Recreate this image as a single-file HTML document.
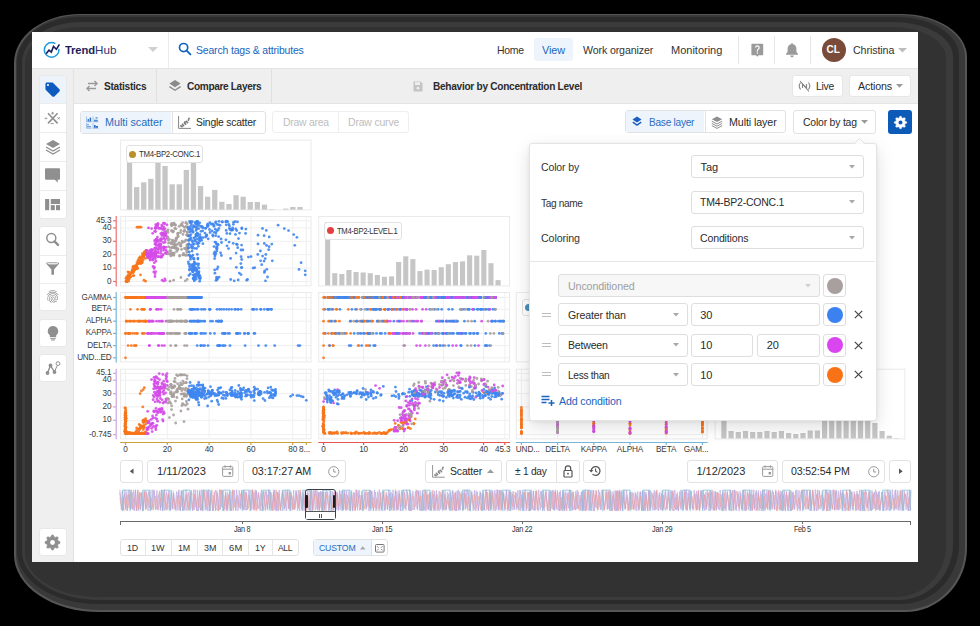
<!DOCTYPE html>
<html><head><meta charset="utf-8"><style>
html,body{margin:0;padding:0;}
body{width:980px;height:626px;position:relative;overflow:hidden;background:#000;font-family:"Liberation Sans",sans-serif;}
svg{display:block;overflow:visible}
</style></head><body>
<div style="position:absolute;left:14px;top:14px;width:953px;height:598px;border-radius:66.0px 66.0px 62.0px 85.0px / 49.0px 43.0px 64.0px 57.0px;background:#555"></div><div style="position:absolute;left:15.5px;top:15px;width:949.5px;height:594.5px;border-radius:64.5px 64.5px 60.5px 83.5px / 47.5px 41.5px 62.5px 55.5px;background:#393939"></div><div style="position:absolute;left:17px;top:17px;width:942px;height:587px;border-radius:62.0px 62.0px 58.0px 81.0px / 45.0px 39.0px 60.0px 53.0px;background:#2b2b2b"></div><div style="position:absolute;left:21.5px;top:21.5px;width:931.5px;height:578.5px;border-radius:58.0px 58.0px 54.0px 77.0px / 41.0px 35.0px 56.0px 49.0px;background:#3b3b3b"></div><div style="position:absolute;left:25px;top:27px;width:921px;height:570px;border-radius:54.0px 54.0px 50.0px 73.0px / 37.0px 31.0px 52.0px 45.0px;background:#323232"></div><div style="position:absolute;left:32px;top:32px;width:886px;height:530px;background:#fff"></div><div style="position:absolute;left:32px;top:68px;width:886px;height:1px;background:#e4e4e4"></div><div style="position:absolute;left:32px;top:69px;width:41px;height:493px;background:#efefef"></div><div style="position:absolute;left:73px;top:69px;width:1px;height:493px;background:#e2e2e2"></div><div style="position:absolute;left:74px;top:69px;width:844px;height:34px;background:#efefef"></div><div style="position:absolute;left:74px;top:103px;width:844px;height:1px;background:#e4e4e4"></div><svg style="position:absolute;left:42px;top:40px;" width="20" height="20" viewBox="0 0 20 20"><circle cx="9.6" cy="9.9" r="7.3" fill="none" stroke="#1f9ce0" stroke-width="1.5" stroke-dasharray="38.2 6.4 100"/><polyline points="4.1,13.8 7,10.2 9.3,12.1 11.5,6.4 14.4,9.3 17.4,4.3" fill="none" stroke="#1b1f5e" stroke-width="1.6" stroke-linejoin="miter"/></svg><div style="position:absolute;left:64.6px;top:43.0px;line-height:14px;font-size:11.5px;font-weight:700;color:#1b1f5e;letter-spacing:-0.13px;white-space:pre;transform:scaleX(0.9746);transform-origin:0 50%;">Trend</div><div style="position:absolute;left:95.3px;top:43.0px;line-height:14px;font-size:11.5px;font-weight:400;color:#2d3270;letter-spacing:0.08px;white-space:pre;transform:scaleX(1.0111);transform-origin:0 50%;">Hub</div><svg style="position:absolute;left:148px;top:47px;" width="10" height="6" viewBox="0 0 10 6"><polygon points="0,0 10,0 5,5" fill="#d0d0d0"/></svg><div style="position:absolute;left:168px;top:32px;width:1px;height:36px;background:#ececec"></div><svg style="position:absolute;left:178px;top:42px;" width="14" height="14" viewBox="0 0 14 14"><circle cx="5.6" cy="5.6" r="4.1" fill="none" stroke="#1565c0" stroke-width="1.7"/><line x1="8.6" y1="8.6" x2="12.4" y2="12.4" stroke="#1565c0" stroke-width="1.9" stroke-linecap="round"/></svg><div style="position:absolute;left:195.7px;top:43.0px;line-height:14px;font-size:11px;font-weight:400;color:#1a64c0;letter-spacing:-0.17px;white-space:pre;transform:scaleX(0.9501);transform-origin:0 50%;">Search tags &amp; attributes</div><div style="position:absolute;left:496.8px;top:43.0px;line-height:14px;font-size:11px;font-weight:400;color:#333;letter-spacing:-0.32px;white-space:pre;transform:scaleX(0.9513);transform-origin:0 50%;">Home</div><div style="position:absolute;left:534px;top:38px;width:39px;height:23px;background:#eef4fb;border-radius:3px"></div><div style="position:absolute;left:541.8px;top:43.0px;line-height:14px;font-size:11px;font-weight:400;color:#1a64c0;letter-spacing:-0.07px;white-space:pre;transform:scaleX(0.9858);transform-origin:0 50%;">View</div><div style="position:absolute;left:582.8px;top:43.0px;line-height:14px;font-size:11px;font-weight:400;color:#333;letter-spacing:-0.13px;white-space:pre;transform:scaleX(0.9658);transform-origin:0 50%;">Work organizer</div><div style="position:absolute;left:671.0px;top:43.0px;line-height:14px;font-size:11px;font-weight:400;color:#333;letter-spacing:-0.00px;white-space:pre;">Monitoring</div><div style="position:absolute;left:738px;top:36px;width:1px;height:28px;background:#e6e6e6"></div><svg style="position:absolute;left:750.5px;top:43px;" width="13" height="15" viewBox="0 0 13 15"><path d="M1,0.8 h10.6 a0.6,0.6 0 0 1 0.6,0.6 v10.2 a0.6,0.6 0 0 1 -0.6,0.6 h-3.9 l-1.4,1.6 l-1.4,-1.6 h-3.9 a0.6,0.6 0 0 1 -0.6,-0.6 v-10.2 a0.6,0.6 0 0 1 0.6,-0.6z" fill="#9a9a9a"/><path d="M4.6,4.6 a1.8,1.8 0 1 1 2.6,1.6 c-0.6,0.4 -0.8,0.8 -0.8,1.6 v0.6" fill="none" stroke="#fff" stroke-width="1.2"/><circle cx="6.4" cy="10" r="0.7" fill="#fff"/></svg><div style="position:absolute;left:774px;top:36px;width:1px;height:28px;background:#e6e6e6"></div><svg style="position:absolute;left:785px;top:42px;" width="14" height="16" viewBox="0 0 14 16"><path d="M7,1.2 c0.7,0 1,0.5 1,1 c2.4,0.5 3.4,2.4 3.4,4.6 v3 l1.6,2.2 v0.8 h-12 v-0.8 l1.6,-2.2 v-3 c0,-2.2 1,-4.1 3.4,-4.6 c0,-0.5 0.3,-1 1,-1z" fill="#9a9a9a"/><path d="M5.2,13.6 h3.6 a1.8,1.8 0 0 1 -3.6,0z" fill="#9a9a9a"/></svg><div style="position:absolute;left:810px;top:36px;width:1px;height:28px;background:#e6e6e6"></div><div style="position:absolute;left:821.8px;top:38px;width:24px;height:24px;border-radius:50%;background:#7b4b3a"></div><div style="position:absolute;left:826.5px;top:43.0px;line-height:14px;font-size:10px;font-weight:700;color:#fff;letter-spacing:0.00px;white-space:pre;">CL</div><div style="position:absolute;left:852.8px;top:43.0px;line-height:14px;font-size:11px;font-weight:400;color:#333;letter-spacing:-0.10px;white-space:pre;transform:scaleX(0.9720);transform-origin:0 50%;">Christina</div><svg style="position:absolute;left:898px;top:47.5px;" width="10" height="6" viewBox="0 0 10 6"><polygon points="0,0 9,0 4.5,4.5" fill="#bdbdbd"/></svg><svg style="position:absolute;left:84px;top:80px;" width="16" height="12" viewBox="0 0 16 12"><path d="M4,3.5 h9 M10.5,1 l2.5,2.5 l-2.5,2.5" fill="none" stroke="#9a9a9a" stroke-width="1.4"/><path d="M12,8.5 h-9 M5.5,6 l-2.5,2.5 l2.5,2.5" fill="none" stroke="#9a9a9a" stroke-width="1.4"/></svg><div style="position:absolute;left:103.7px;top:79.3px;line-height:14px;font-size:11px;font-weight:700;color:#2b2b2b;letter-spacing:-0.29px;white-space:pre;transform:scaleX(0.9203);transform-origin:0 50%;">Statistics</div><div style="position:absolute;left:156px;top:69px;width:1px;height:34px;background:#e0e0e0"></div><svg style="position:absolute;left:168px;top:79px;" width="14" height="14" viewBox="0 0 14 14"><path d="M7,1 L12.6,4.6 L7,8.2 L1.4,4.6z" fill="#8a8a8a"/><path d="M1.4,7.6 L7,11.2 L12.6,7.6" fill="none" stroke="#8a8a8a" stroke-width="1.3"/></svg><div style="position:absolute;left:186.7px;top:79.3px;line-height:14px;font-size:11px;font-weight:700;color:#2b2b2b;letter-spacing:-0.37px;white-space:pre;transform:scaleX(0.9168);transform-origin:0 50%;">Compare Layers</div><div style="position:absolute;left:271px;top:69px;width:1px;height:34px;background:#e0e0e0"></div><svg style="position:absolute;left:413px;top:81px;" width="10" height="11" viewBox="0 0 10 11"><path d="M0.5,0.5 h7 l2,2 v8 h-9z" fill="#c4c4c4"/><rect x="2" y="1.2" width="5" height="2.8" fill="#efefef"/><circle cx="5" cy="7.2" r="1.4" fill="#efefef"/></svg><div style="position:absolute;left:433.2px;top:79.3px;line-height:14px;font-size:11px;font-weight:700;color:#2b2b2b;letter-spacing:-0.31px;white-space:pre;transform:scaleX(0.9190);transform-origin:0 50%;">Behavior by Concentration Level</div><div style="position:absolute;left:792px;top:75px;width:51px;height:22px;background:#fff;border:1px solid #e6e6e6;border-radius:3px;box-sizing:border-box"></div><svg style="position:absolute;left:798px;top:80px;" width="13" height="12" viewBox="0 0 13 12"><path d="M2.6,2.5 C1,4.5 1,7.5 2.6,9.5 M10.4,2.5 C12,4.5 12,7.5 10.4,9.5" fill="none" stroke="#888" stroke-width="1.1"/><path d="M4.5,8 V4 L8.5,8 V4" fill="none" stroke="#888" stroke-width="1.1"/><line x1="2" y1="1" x2="11" y2="11.5" stroke="#888" stroke-width="1.1"/></svg><div style="position:absolute;left:815.7px;top:79.3px;line-height:14px;font-size:11px;font-weight:400;color:#2b2b2b;letter-spacing:-0.26px;white-space:pre;transform:scaleX(0.9428);transform-origin:0 50%;">Live</div><div style="position:absolute;left:849px;top:75px;width:62px;height:22px;background:#fff;border:1px solid #e6e6e6;border-radius:3px;box-sizing:border-box"></div><div style="position:absolute;left:857.9px;top:79.3px;line-height:14px;font-size:11px;font-weight:400;color:#2b2b2b;letter-spacing:-0.13px;white-space:pre;transform:scaleX(0.9684);transform-origin:0 50%;">Actions</div><svg style="position:absolute;left:896px;top:84px;" width="8" height="5" viewBox="0 0 8 5"><polygon points="0,0 7,0 3.5,3.8" fill="#9a9a9a"/></svg><div style="position:absolute;left:38.7px;top:75.3px;width:28.599999999999994px;height:143.39999999999998px;background:#fff;border:1px solid #e8e8e8;border-radius:3px;box-sizing:border-box"></div><div style="position:absolute;left:39.7px;top:103.3px;width:26.599999999999994px;height:1.0px;background:#ececec"></div><div style="position:absolute;left:39.7px;top:132.2px;width:26.599999999999994px;height:1.0px;background:#ececec"></div><div style="position:absolute;left:39.7px;top:161px;width:26.599999999999994px;height:1px;background:#ececec"></div><div style="position:absolute;left:39.7px;top:190px;width:26.599999999999994px;height:1px;background:#ececec"></div><div style="position:absolute;left:39.7px;top:76.3px;width:26.599999999999994px;height:27.0px;background:#edf3fa"></div><div style="position:absolute;left:38.7px;top:225.9px;width:28.599999999999994px;height:85.4px;background:#fff;border:1px solid #e8e8e8;border-radius:3px;box-sizing:border-box"></div><div style="position:absolute;left:39.7px;top:254.5px;width:26.599999999999994px;height:1.0px;background:#ececec"></div><div style="position:absolute;left:39.7px;top:283.2px;width:26.599999999999994px;height:1.0px;background:#ececec"></div><div style="position:absolute;left:38.7px;top:318.5px;width:28.599999999999994px;height:28.80000000000001px;background:#fff;border:1px solid #e8e8e8;border-radius:3px;box-sizing:border-box"></div><div style="position:absolute;left:38.7px;top:353.6px;width:28.599999999999994px;height:28.69999999999999px;background:#fff;border:1px solid #e8e8e8;border-radius:3px;box-sizing:border-box"></div><div style="position:absolute;left:38.7px;top:527.7px;width:28.599999999999994px;height:28.5px;background:#fff;border:1px solid #e8e8e8;border-radius:3px;box-sizing:border-box"></div><svg style="position:absolute;left:44px;top:81px;" width="18" height="18" viewBox="0 0 18 18"><g transform="scale(0.72)"><path fill-rule="evenodd" d="M21.41 11.58l-9-9C12.05 2.22 11.55 2 11 2H4c-1.1 0-2 .9-2 2v7c0 .55.22 1.05.59 1.42l9 9c.36.36.86.58 1.41.58.55 0 1.05-.22 1.41-.59l7-7c.37-.36.59-.86.59-1.41 0-.55-.23-1.06-.59-1.42zM5.5 7C4.67 7 4 6.33 4 5.5S4.67 4 5.5 4 7 4.67 7 5.5 6.33 7 5.5 7z" fill="#0d5bbf"/></g></svg><svg style="position:absolute;left:45px;top:110px;" width="16" height="16" viewBox="0 0 16 16"><line x1="3" y1="3.2" x2="12.6" y2="13.4" stroke="#8f8f8f" stroke-width="1.6"/><line x1="12.6" y1="3.2" x2="3" y2="13.4" stroke="#8f8f8f" stroke-width="1.6"/><path d="M6.2,3.2 h2.8 M7.6,1.8 v2.8 M-0.4,8.4 h2.8 M5.6,13.6 h3.2 M12.6,7.2 l2.2,2.2 M14.8,7.2 l-2.2,2.2" stroke="#8f8f8f" stroke-width="0.9"/><circle cx="1" cy="7" r="0.4" fill="#8f8f8f"/><circle cx="1" cy="9.8" r="0.4" fill="#8f8f8f"/></svg><svg style="position:absolute;left:45px;top:139px;" width="16" height="16" viewBox="0 0 16 16"><path d="M8,1 L15,5 L8,9 L1,5z" fill="#8f8f8f"/><path d="M1,8 L8,12 L15,8" fill="none" stroke="#8f8f8f" stroke-width="1.3"/><path d="M1,11 L8,15 L15,11" fill="none" stroke="#8f8f8f" stroke-width="1.3"/></svg><svg style="position:absolute;left:45px;top:168px;" width="16" height="16" viewBox="0 0 16 16"><path d="M1,0.2 h13 a1,1 0 0 1 1,1 v9.6 a1,1 0 0 1 -1,1 h-1.4 l0.2,3 l-3,-3 h-8.8 a1,1 0 0 1 -1,-1 v-9.6 a1,1 0 0 1 1,-1z" fill="#8f8f8f"/></svg><svg style="position:absolute;left:45px;top:198.9px;" width="16" height="12" viewBox="0 0 16 12"><rect x="0.1" y="0" width="4.1" height="11.2" fill="#8f8f8f"/><rect x="5.8" y="0" width="9.2" height="5" fill="#8f8f8f"/><rect x="5.8" y="6.1" width="4" height="5.1" fill="#8f8f8f"/><rect x="11" y="6.1" width="4" height="5.1" fill="#8f8f8f"/></svg><svg style="position:absolute;left:45px;top:232px;" width="16" height="16" viewBox="0 0 16 16"><circle cx="6.3" cy="6.0" r="4.5" fill="none" stroke="#8f8f8f" stroke-width="1.5"/><line x1="9.6" y1="9.4" x2="13" y2="12.8" stroke="#8f8f8f" stroke-width="2.4" stroke-linecap="round"/></svg><svg style="position:absolute;left:45px;top:261px;" width="16" height="16" viewBox="0 0 16 16"><path d="M1.1,2.6 C1.1,0.6 14.2,0.6 14.2,2.6 L9,8.6 V13.7 H6.4 V8.6 Z" fill="#8f8f8f"/><ellipse cx="7.65" cy="2.5" rx="5.4" ry="1.1" fill="#e6e6e6"/></svg><svg style="position:absolute;left:45px;top:288.5px;" width="16" height="16" viewBox="0 0 16 16"><g transform="scale(0.64)"><path fill="#8f8f8f" d="M17.81 4.47c-.08 0-.16-.02-.23-.06C15.66 3.42 14 3 12.01 3c-1.98 0-3.86.47-5.57 1.41-.24.13-.54.04-.68-.2-.13-.24-.04-.55.2-.68C7.82 2.52 9.86 2 12.01 2c2.13 0 3.98.47 6.03 1.52.25.13.34.43.21.67-.09.18-.26.28-.44.28zM3.5 9.72c-.1 0-.2-.03-.29-.09-.23-.16-.28-.47-.12-.7.99-1.4 2.250-2.5 3.75-3.27C9.98 4.04 14 4.03 17.15 5.65c1.5.77 2.76 1.86 3.75 3.25.16.22.11.54-.12.7-.23.16-.54.11-.7-.12-.9-1.26-2.04-2.25-3.39-2.94-2.87-1.47-6.54-1.47-9.4.01-1.36.7-2.5 1.7-3.4 2.96-.08.14-.23.21-.39.21zm6.25 12.07c-.13 0-.26-.05-.35-.15-.87-.87-1.34-1.43-2.01-2.640-.69-1.230-1.05-2.730-1.05-4.340 0-2.97 2.54-5.39 5.66-5.39s5.66 2.42 5.66 5.39c0 .28-.22.5-.5.5s-.5-.22-.5-.5c0-2.42-2.09-4.39-4.66-4.39-2.57 0-4.66 1.97-4.66 4.39 0 1.44.32 2.77.93 3.85.64 1.15 1.08 1.64 1.85 2.42.19.2.19.51 0 .71-.11.1-.24.15-.37.15zm7.17-1.85c-1.19 0-2.24-.3-3.1-.89-1.49-1.01-2.38-2.65-2.38-4.39 0-.28.22-.5.5-.5s.5.22.5.5c0 1.41.72 2.74 1.94 3.56.71.48 1.54.71 2.54.71.24 0 .64-.03 1.04-.1.27-.05.53.13.58.41.05.27-.13.53-.41.58-.57.11-1.07.12-1.21.12zM14.91 22c-.04 0-.09-.01-.13-.02-1.59-.44-2.63-1.03-3.72-2.1-1.4-1.39-2.17-3.24-2.17-5.22 0-1.62 1.38-2.94 3.08-2.94 1.7 0 3.08 1.32 3.08 2.94 0 1.07.93 1.94 2.08 1.94s2.08-.87 2.08-1.94c0-3.77-3.25-6.83-7.25-6.83-2.84 0-5.44 1.58-6.61 4.03-.39.81-.59 1.76-.59 2.8 0 .78.07 2.010.67 3.61.1.26-.03.55-.29.64-.26.1-.55-.04-.64-.29-.49-1.31-.73-2.61-.73-3.96 0-1.2.23-2.29.68-3.24 1.33-2.79 4.28-4.6 7.51-4.6 4.55 0 8.25 3.51 8.25 7.83 0 1.62-1.38 2.94-3.08 2.94s-3.08-1.32-3.08-2.94c0-1.07-.93-1.94-2.08-1.94s-2.08.87-2.08 1.94c0 1.71.66 3.31 1.87 4.51.95.94 1.86 1.460 3.27 1.85.27.07.42.35.35.61-.05.23-.26.38-.47.38z"/></g></svg><svg style="position:absolute;left:45px;top:325px;" width="16" height="16" viewBox="0 0 16 16"><path d="M8,1 a5.2,5.2 0 0 1 3.2,9.3 v1.8 h-6.4 v-1.8 A5.2,5.2 0 0 1 8,1z" fill="#8f8f8f"/><rect x="5.2" y="12.8" width="5.6" height="1" fill="#8f8f8f"/><rect x="6" y="14.4" width="4" height="1" fill="#8f8f8f"/></svg><svg style="position:absolute;left:45px;top:360px;" width="16" height="16" viewBox="0 0 16 16"><polyline points="2.5,13 5.5,5.5 9.5,12 " fill="none" stroke="#8f8f8f" stroke-width="1.4"/><circle cx="2.5" cy="13" r="1.9" fill="#8f8f8f"/><circle cx="5.5" cy="5.5" r="1.9" fill="#8f8f8f"/><circle cx="9.5" cy="12" r="1.9" fill="#8f8f8f"/><line x1="9.8" y1="11" x2="12" y2="6" stroke="#8f8f8f" stroke-width="1"/><circle cx="13" cy="3.6" r="1.9" fill="none" stroke="#8f8f8f" stroke-width="1"/></svg><svg style="position:absolute;left:44px;top:534px;" width="17" height="17" viewBox="0 0 17 17"><polygon points="15.96,7.76 15.96,9.24 14.05,10.18 13.62,11.23 14.30,13.26 13.26,14.30 11.23,13.62 10.18,14.05 9.24,15.96 7.76,15.96 6.82,14.05 5.77,13.62 3.74,14.30 2.70,13.26 3.38,11.23 2.95,10.18 1.04,9.24 1.04,7.76 2.95,6.82 3.38,5.77 2.70,3.74 3.74,2.70 5.77,3.38 6.82,2.95 7.76,1.04 9.24,1.04 10.18,2.95 11.23,3.38 13.26,2.70 14.30,3.74 13.62,5.77 14.05,6.82" fill="#8f8f8f" stroke="#8f8f8f" stroke-width="0.6" stroke-linejoin="round"/><circle cx="8.5" cy="8.5" r="2.4" fill="#fff"/></svg><div style="position:absolute;left:80.1px;top:110.5px;width:186.1px;height:23.099999999999994px;background:#fff;border:1px solid #e2e2e2;border-radius:3px;box-sizing:border-box"></div><div style="position:absolute;left:81.1px;top:111.5px;width:90.4px;height:21.099999999999994px;background:#eef4fb"></div><div style="position:absolute;left:171.5px;top:111.5px;width:1.0px;height:21.099999999999994px;background:#e2e2e2"></div><svg style="position:absolute;left:86px;top:116px;" width="13" height="13" viewBox="0 0 13 13"><path d="M0.5,0.5 V5.8 H5.8 M7,0.5 V5.8 H12.4 M0.5,7 V12.3 H5.8 M7,7 V12.3 H12.4" fill="none" stroke="#9cbde6" stroke-width="0.9"/><rect x="1.6" y="3" width="1.3" height="2.6" fill="#2f72c4"/><rect x="3.6" y="1.6" width="1.5" height="4" fill="#2f72c4"/><rect x="8" y="4.2" width="3.8" height="1.2" fill="#2f72c4"/><rect x="9.6" y="1.4" width="2" height="1" fill="#2f72c4"/><rect x="8" y="2.8" width="3.8" height="0.7" fill="#9cbde6"/><circle cx="2" cy="8.8" r="0.7" fill="#2f72c4"/><circle cx="2" cy="10.8" r="0.8" fill="#2f72c4"/><circle cx="4" cy="10.8" r="0.8" fill="#2f72c4"/><rect x="8" y="9" width="1.6" height="2.8" fill="#2f72c4"/><rect x="9.6" y="10" width="2.4" height="1.8" fill="#2f72c4"/></svg><div style="position:absolute;left:104.6px;top:115.0px;line-height:14px;font-size:11px;font-weight:400;color:#2a6cc0;letter-spacing:-0.06px;white-space:pre;transform:scaleX(0.9827);transform-origin:0 50%;">Multi scatter</div><svg style="position:absolute;left:178px;top:116px;" width="13" height="13" viewBox="0 0 13 13"><path d="M0.6,0 v12.4 h12.4" fill="none" stroke="#777" stroke-width="0.9"/><circle cx="3" cy="10" r="0.9" fill="#777"/><circle cx="4.5" cy="8.5" r="0.9" fill="#777"/><circle cx="5.5" cy="9.5" r="0.9" fill="#777"/><circle cx="6.5" cy="7" r="0.9" fill="#777"/><circle cx="7.5" cy="8" r="0.9" fill="#777"/><circle cx="8.5" cy="5.5" r="0.9" fill="#777"/><circle cx="9.5" cy="6.5" r="0.9" fill="#777"/><circle cx="10.5" cy="4" r="0.9" fill="#777"/><circle cx="11" cy="2.5" r="0.9" fill="#777"/><circle cx="4" cy="10.5" r="0.9" fill="#777"/><circle cx="7" cy="6" r="0.9" fill="#777"/></svg><div style="position:absolute;left:196.0px;top:115.0px;line-height:14px;font-size:11px;font-weight:400;color:#2b2b2b;letter-spacing:-0.20px;white-space:pre;transform:scaleX(0.9407);transform-origin:0 50%;">Single scatter</div><div style="position:absolute;left:272.4px;top:110.9px;width:136.3px;height:22.19999999999999px;background:#fff;border:1px solid #eeeeee;border-radius:3px;box-sizing:border-box"></div><div style="position:absolute;left:338px;top:111.9px;width:1px;height:20.19999999999999px;background:#eeeeee"></div><div style="position:absolute;left:282.5px;top:115.0px;line-height:14px;font-size:11px;font-weight:400;color:#bdbdbd;letter-spacing:-0.24px;white-space:pre;transform:scaleX(0.9427);transform-origin:0 50%;">Draw area</div><div style="position:absolute;left:347.9px;top:115.0px;line-height:14px;font-size:11px;font-weight:400;color:#bdbdbd;letter-spacing:-0.20px;white-space:pre;transform:scaleX(0.9526);transform-origin:0 50%;">Draw curve</div><div style="position:absolute;left:624.6px;top:110.4px;width:161.60000000000002px;height:22.69999999999999px;background:#fff;border:1px solid #e2e2e2;border-radius:3px;box-sizing:border-box"></div><div style="position:absolute;left:625.6px;top:111.4px;width:78.89999999999998px;height:20.69999999999999px;background:#eef4fb"></div><div style="position:absolute;left:704.5px;top:111.4px;width:1.0px;height:20.69999999999999px;background:#e2e2e2"></div><svg style="position:absolute;left:632px;top:116px;" width="10" height="12" viewBox="0 0 10 12"><path d="M5,0.5 L9.5,3.5 L5,6.5 L0.5,3.5z" fill="#1a5fbf"/><path d="M0.8,6.2 L5,9 L9.2,6.2" fill="none" stroke="#1a5fbf" stroke-width="1.5"/></svg><div style="position:absolute;left:648.8px;top:115.0px;line-height:14px;font-size:11px;font-weight:400;color:#2a6cc0;letter-spacing:-0.30px;white-space:pre;transform:scaleX(0.9232);transform-origin:0 50%;">Base layer</div><svg style="position:absolute;left:710.5px;top:116px;" width="12" height="12" viewBox="0 0 12 12"><path d="M0.8,5.2 L6,8.0 L11.2,5.2" fill="none" stroke="#8f8f8f" stroke-width="1"/><path d="M0.8,7.4 L6,10.2 L11.2,7.4" fill="none" stroke="#8f8f8f" stroke-width="1"/><path d="M0.8,9.600000000000001 L6,12.4 L11.2,9.600000000000001" fill="none" stroke="#8f8f8f" stroke-width="1"/><path d="M6,0.4 L11.2,3.2 L6,6 L0.8,3.2z" fill="#8f8f8f"/></svg><div style="position:absolute;left:728.8px;top:115.0px;line-height:14px;font-size:11px;font-weight:400;color:#2b2b2b;letter-spacing:-0.10px;white-space:pre;transform:scaleX(0.9707);transform-origin:0 50%;">Multi layer</div><div style="position:absolute;left:792.7px;top:110.4px;width:83.69999999999993px;height:23.299999999999983px;background:#fff;border:1px solid #e2e2e2;border-radius:3px;box-sizing:border-box"></div><div style="position:absolute;left:802.5px;top:115.0px;line-height:14px;font-size:11px;font-weight:400;color:#2b2b2b;letter-spacing:-0.20px;white-space:pre;transform:scaleX(0.9453);transform-origin:0 50%;">Color by tag</div><svg style="position:absolute;left:861px;top:120px;" width="8" height="5" viewBox="0 0 8 5"><polygon points="0,0 7,0 3.5,3.8" fill="#9a9a9a"/></svg><div style="position:absolute;left:888.4px;top:110.1px;width:23.600000000000023px;height:23.5px;background:#0d5bb8;border-radius:3px"></div><svg style="position:absolute;left:892px;top:113.5px;" width="17" height="17" viewBox="0 0 17 17"><polygon points="14.67,7.89 14.67,9.11 13.00,9.86 12.65,10.72 13.29,12.43 12.43,13.29 10.72,12.65 9.86,13.00 9.11,14.67 7.89,14.67 7.14,13.00 6.28,12.65 4.57,13.29 3.71,12.43 4.35,10.72 4.00,9.86 2.33,9.11 2.33,7.89 4.00,7.14 4.35,6.28 3.71,4.57 4.57,3.71 6.28,4.35 7.14,4.00 7.89,2.33 9.11,2.33 9.86,4.00 10.72,4.35 12.43,3.71 13.29,4.57 12.65,6.28 13.00,7.14" fill="#fff" stroke="#fff" stroke-width="0.6" stroke-linejoin="round"/><circle cx="8.5" cy="8.5" r="2.0" fill="#0d5bb8"/></svg><svg style="position:absolute;left:0px;top:0px;pointer-events:none" width="980" height="626" viewBox="0 0 980 626"><line x1="125.5" y1="217.0" x2="125.5" y2="285.4" stroke="#efefef" stroke-width="1"/><line x1="167.3" y1="217.0" x2="167.3" y2="285.4" stroke="#efefef" stroke-width="1"/><line x1="209.1" y1="217.0" x2="209.1" y2="285.4" stroke="#efefef" stroke-width="1"/><line x1="250.9" y1="217.0" x2="250.9" y2="285.4" stroke="#efefef" stroke-width="1"/><line x1="292.7" y1="217.0" x2="292.7" y2="285.4" stroke="#efefef" stroke-width="1"/><line x1="306.3" y1="217.0" x2="306.3" y2="285.4" stroke="#efefef" stroke-width="1"/><line x1="121.1" y1="220.8" x2="310.5" y2="220.8" stroke="#efefef" stroke-width="1"/><line x1="121.1" y1="227.9" x2="310.5" y2="227.9" stroke="#efefef" stroke-width="1"/><line x1="121.1" y1="241.3" x2="310.5" y2="241.3" stroke="#efefef" stroke-width="1"/><line x1="121.1" y1="254.7" x2="310.5" y2="254.7" stroke="#efefef" stroke-width="1"/><line x1="121.1" y1="268.1" x2="310.5" y2="268.1" stroke="#efefef" stroke-width="1"/><line x1="121.1" y1="281.5" x2="310.5" y2="281.5" stroke="#efefef" stroke-width="1"/><line x1="125.5" y1="293.0" x2="125.5" y2="361.4" stroke="#efefef" stroke-width="1"/><line x1="167.3" y1="293.0" x2="167.3" y2="361.4" stroke="#efefef" stroke-width="1"/><line x1="209.1" y1="293.0" x2="209.1" y2="361.4" stroke="#efefef" stroke-width="1"/><line x1="250.9" y1="293.0" x2="250.9" y2="361.4" stroke="#efefef" stroke-width="1"/><line x1="292.7" y1="293.0" x2="292.7" y2="361.4" stroke="#efefef" stroke-width="1"/><line x1="306.3" y1="293.0" x2="306.3" y2="361.4" stroke="#efefef" stroke-width="1"/><line x1="121.1" y1="297.5" x2="310.5" y2="297.5" stroke="#efefef" stroke-width="1"/><line x1="121.1" y1="309.3" x2="310.5" y2="309.3" stroke="#efefef" stroke-width="1"/><line x1="121.1" y1="321.2" x2="310.5" y2="321.2" stroke="#efefef" stroke-width="1"/><line x1="121.1" y1="333.4" x2="310.5" y2="333.4" stroke="#efefef" stroke-width="1"/><line x1="121.1" y1="345.6" x2="310.5" y2="345.6" stroke="#efefef" stroke-width="1"/><line x1="121.1" y1="357.8" x2="310.5" y2="357.8" stroke="#efefef" stroke-width="1"/><line x1="125.5" y1="369.7" x2="125.5" y2="438.4" stroke="#efefef" stroke-width="1"/><line x1="167.3" y1="369.7" x2="167.3" y2="438.4" stroke="#efefef" stroke-width="1"/><line x1="209.1" y1="369.7" x2="209.1" y2="438.4" stroke="#efefef" stroke-width="1"/><line x1="250.9" y1="369.7" x2="250.9" y2="438.4" stroke="#efefef" stroke-width="1"/><line x1="292.7" y1="369.7" x2="292.7" y2="438.4" stroke="#efefef" stroke-width="1"/><line x1="306.3" y1="369.7" x2="306.3" y2="438.4" stroke="#efefef" stroke-width="1"/><line x1="121.1" y1="373.4" x2="310.5" y2="373.4" stroke="#efefef" stroke-width="1"/><line x1="121.1" y1="380.2" x2="310.5" y2="380.2" stroke="#efefef" stroke-width="1"/><line x1="121.1" y1="393.6" x2="310.5" y2="393.6" stroke="#efefef" stroke-width="1"/><line x1="121.1" y1="406.9" x2="310.5" y2="406.9" stroke="#efefef" stroke-width="1"/><line x1="121.1" y1="420.3" x2="310.5" y2="420.3" stroke="#efefef" stroke-width="1"/><line x1="121.1" y1="434.6" x2="310.5" y2="434.6" stroke="#efefef" stroke-width="1"/><line x1="323.6" y1="293.0" x2="323.6" y2="361.4" stroke="#efefef" stroke-width="1"/><line x1="363.6" y1="293.0" x2="363.6" y2="361.4" stroke="#efefef" stroke-width="1"/><line x1="403.6" y1="293.0" x2="403.6" y2="361.4" stroke="#efefef" stroke-width="1"/><line x1="443.6" y1="293.0" x2="443.6" y2="361.4" stroke="#efefef" stroke-width="1"/><line x1="483.6" y1="293.0" x2="483.6" y2="361.4" stroke="#efefef" stroke-width="1"/><line x1="504.8" y1="293.0" x2="504.8" y2="361.4" stroke="#efefef" stroke-width="1"/><line x1="319.2" y1="297.5" x2="509.0" y2="297.5" stroke="#efefef" stroke-width="1"/><line x1="319.2" y1="309.3" x2="509.0" y2="309.3" stroke="#efefef" stroke-width="1"/><line x1="319.2" y1="321.2" x2="509.0" y2="321.2" stroke="#efefef" stroke-width="1"/><line x1="319.2" y1="333.4" x2="509.0" y2="333.4" stroke="#efefef" stroke-width="1"/><line x1="319.2" y1="345.6" x2="509.0" y2="345.6" stroke="#efefef" stroke-width="1"/><line x1="319.2" y1="357.8" x2="509.0" y2="357.8" stroke="#efefef" stroke-width="1"/><line x1="323.6" y1="369.7" x2="323.6" y2="438.4" stroke="#efefef" stroke-width="1"/><line x1="363.6" y1="369.7" x2="363.6" y2="438.4" stroke="#efefef" stroke-width="1"/><line x1="403.6" y1="369.7" x2="403.6" y2="438.4" stroke="#efefef" stroke-width="1"/><line x1="443.6" y1="369.7" x2="443.6" y2="438.4" stroke="#efefef" stroke-width="1"/><line x1="483.6" y1="369.7" x2="483.6" y2="438.4" stroke="#efefef" stroke-width="1"/><line x1="504.8" y1="369.7" x2="504.8" y2="438.4" stroke="#efefef" stroke-width="1"/><line x1="319.2" y1="373.4" x2="509.0" y2="373.4" stroke="#efefef" stroke-width="1"/><line x1="319.2" y1="380.2" x2="509.0" y2="380.2" stroke="#efefef" stroke-width="1"/><line x1="319.2" y1="393.6" x2="509.0" y2="393.6" stroke="#efefef" stroke-width="1"/><line x1="319.2" y1="406.9" x2="509.0" y2="406.9" stroke="#efefef" stroke-width="1"/><line x1="319.2" y1="420.3" x2="509.0" y2="420.3" stroke="#efefef" stroke-width="1"/><line x1="319.2" y1="434.6" x2="509.0" y2="434.6" stroke="#efefef" stroke-width="1"/><line x1="521.4" y1="369.7" x2="521.4" y2="438.4" stroke="#efefef" stroke-width="1"/><line x1="557.6" y1="369.7" x2="557.6" y2="438.4" stroke="#efefef" stroke-width="1"/><line x1="593.8" y1="369.7" x2="593.8" y2="438.4" stroke="#efefef" stroke-width="1"/><line x1="630.0" y1="369.7" x2="630.0" y2="438.4" stroke="#efefef" stroke-width="1"/><line x1="666.2" y1="369.7" x2="666.2" y2="438.4" stroke="#efefef" stroke-width="1"/><line x1="702.4" y1="369.7" x2="702.4" y2="438.4" stroke="#efefef" stroke-width="1"/><line x1="516.8" y1="373.4" x2="706.6" y2="373.4" stroke="#efefef" stroke-width="1"/><line x1="516.8" y1="380.2" x2="706.6" y2="380.2" stroke="#efefef" stroke-width="1"/><line x1="516.8" y1="393.6" x2="706.6" y2="393.6" stroke="#efefef" stroke-width="1"/><line x1="516.8" y1="406.9" x2="706.6" y2="406.9" stroke="#efefef" stroke-width="1"/><line x1="516.8" y1="420.3" x2="706.6" y2="420.3" stroke="#efefef" stroke-width="1"/><line x1="516.8" y1="434.6" x2="706.6" y2="434.6" stroke="#efefef" stroke-width="1"/><rect x="120.6" y="140.1" width="190.4" height="69.8" fill="none" stroke="#eaeaea" stroke-width="1" /><rect x="120.6" y="216.5" width="190.4" height="69.4" fill="none" stroke="#eaeaea" stroke-width="1" /><rect x="318.7" y="216.5" width="190.8" height="69.4" fill="none" stroke="#eaeaea" stroke-width="1" /><rect x="120.6" y="292.5" width="190.4" height="69.4" fill="none" stroke="#eaeaea" stroke-width="1" /><rect x="318.7" y="292.5" width="190.8" height="69.4" fill="none" stroke="#eaeaea" stroke-width="1" /><rect x="516.3" y="292.5" width="190.8" height="69.4" fill="none" stroke="#eaeaea" stroke-width="1" /><rect x="120.6" y="369.2" width="190.4" height="69.7" fill="none" stroke="#eaeaea" stroke-width="1" /><rect x="318.7" y="369.2" width="190.8" height="69.7" fill="none" stroke="#eaeaea" stroke-width="1" /><rect x="516.3" y="369.2" width="190.8" height="69.7" fill="none" stroke="#eaeaea" stroke-width="1" /><rect x="715.1" y="369.2" width="189.8" height="69.7" fill="none" stroke="#eaeaea" stroke-width="1" /><rect x="126.9" y="146.0" width="5.3" height="63.6" fill="#c6c6c6" /><rect x="134.0" y="187.1" width="5.3" height="22.5" fill="#c6c6c6" /><rect x="141.1" y="182.3" width="5.3" height="27.3" fill="#c6c6c6" /><rect x="148.2" y="178.8" width="5.3" height="30.8" fill="#c6c6c6" /><rect x="155.3" y="146.0" width="5.3" height="63.6" fill="#c6c6c6" /><rect x="162.4" y="166.0" width="5.3" height="43.6" fill="#c6c6c6" /><rect x="169.5" y="184.3" width="5.3" height="25.3" fill="#c6c6c6" /><rect x="176.6" y="184.3" width="5.3" height="25.3" fill="#c6c6c6" /><rect x="183.7" y="169.9" width="5.3" height="39.7" fill="#c6c6c6" /><rect x="190.8" y="146.0" width="5.3" height="63.6" fill="#c6c6c6" /><rect x="197.9" y="186.1" width="5.3" height="23.5" fill="#c6c6c6" /><rect x="205.0" y="196.7" width="5.3" height="12.9" fill="#c6c6c6" /><rect x="212.1" y="189.9" width="5.3" height="19.7" fill="#c6c6c6" /><rect x="219.2" y="201.8" width="5.3" height="7.8" fill="#c6c6c6" /><rect x="226.3" y="204.0" width="5.3" height="5.6" fill="#c6c6c6" /><rect x="233.4" y="195.2" width="5.3" height="14.4" fill="#c6c6c6" /><rect x="240.5" y="196.7" width="5.3" height="12.9" fill="#c6c6c6" /><rect x="247.6" y="202.0" width="5.3" height="7.6" fill="#c6c6c6" /><rect x="254.7" y="202.0" width="5.3" height="7.6" fill="#c6c6c6" /><rect x="261.8" y="204.6" width="5.3" height="5.0" fill="#c6c6c6" /><rect x="268.9" y="209.1" width="5.3" height="0.5" fill="#c6c6c6" /><rect x="283.1" y="208.6" width="5.3" height="1.0" fill="#c6c6c6" /><rect x="290.2" y="207.0" width="5.3" height="2.6" fill="#c6c6c6" /><rect x="297.3" y="207.0" width="5.3" height="2.6" fill="#c6c6c6" /><rect x="325.1" y="222.0" width="5.1" height="63.4" fill="#c6c6c6" /><rect x="332.2" y="273.2" width="5.1" height="12.2" fill="#c6c6c6" /><rect x="339.3" y="274.0" width="5.1" height="11.4" fill="#c6c6c6" /><rect x="346.4" y="270.0" width="5.1" height="15.4" fill="#c6c6c6" /><rect x="353.5" y="272.0" width="5.1" height="13.4" fill="#c6c6c6" /><rect x="360.6" y="272.5" width="5.1" height="12.9" fill="#c6c6c6" /><rect x="367.7" y="273.2" width="5.1" height="12.2" fill="#c6c6c6" /><rect x="374.8" y="275.0" width="5.1" height="10.4" fill="#c6c6c6" /><rect x="381.9" y="276.8" width="5.1" height="8.6" fill="#c6c6c6" /><rect x="389.0" y="276.4" width="5.1" height="9.0" fill="#c6c6c6" /><rect x="396.1" y="262.0" width="5.1" height="23.4" fill="#c6c6c6" /><rect x="403.2" y="256.3" width="5.1" height="29.1" fill="#c6c6c6" /><rect x="410.3" y="259.1" width="5.1" height="26.3" fill="#c6c6c6" /><rect x="417.4" y="271.1" width="5.1" height="14.3" fill="#c6c6c6" /><rect x="424.5" y="269.6" width="5.1" height="15.8" fill="#c6c6c6" /><rect x="431.6" y="270.0" width="5.1" height="15.4" fill="#c6c6c6" /><rect x="438.7" y="267.2" width="5.1" height="18.2" fill="#c6c6c6" /><rect x="445.8" y="264.2" width="5.1" height="21.2" fill="#c6c6c6" /><rect x="452.9" y="262.0" width="5.1" height="23.4" fill="#c6c6c6" /><rect x="460.0" y="261.4" width="5.1" height="24.0" fill="#c6c6c6" /><rect x="467.1" y="255.3" width="5.1" height="30.1" fill="#c6c6c6" /><rect x="474.2" y="255.7" width="5.1" height="29.7" fill="#c6c6c6" /><rect x="481.3" y="250.0" width="5.1" height="35.4" fill="#c6c6c6" /><rect x="488.4" y="263.2" width="5.1" height="22.2" fill="#c6c6c6" /><rect x="495.5" y="280.1" width="5.1" height="5.3" fill="#c6c6c6" /><rect x="721.3" y="395.0" width="5.2" height="43.4" fill="#c6c6c6" /><rect x="728.5" y="431.0" width="5.2" height="7.4" fill="#c6c6c6" /><rect x="735.7" y="432.0" width="5.2" height="6.4" fill="#c6c6c6" /><rect x="742.9" y="431.0" width="5.2" height="7.4" fill="#c6c6c6" /><rect x="750.1" y="432.0" width="5.2" height="6.4" fill="#c6c6c6" /><rect x="757.2" y="432.0" width="5.2" height="6.4" fill="#c6c6c6" /><rect x="764.4" y="431.0" width="5.2" height="7.4" fill="#c6c6c6" /><rect x="771.6" y="432.0" width="5.2" height="6.4" fill="#c6c6c6" /><rect x="778.8" y="431.0" width="5.2" height="7.4" fill="#c6c6c6" /><rect x="786.0" y="433.0" width="5.2" height="5.4" fill="#c6c6c6" /><rect x="793.2" y="434.0" width="5.2" height="4.4" fill="#c6c6c6" /><rect x="800.4" y="433.0" width="5.2" height="5.4" fill="#c6c6c6" /><rect x="807.6" y="430.5" width="5.2" height="7.9" fill="#c6c6c6" /><rect x="814.8" y="430.5" width="5.2" height="7.9" fill="#c6c6c6" /><rect x="822.0" y="405.0" width="5.2" height="33.4" fill="#c6c6c6" /><rect x="829.1" y="402.0" width="5.2" height="36.4" fill="#c6c6c6" /><rect x="836.3" y="404.0" width="5.2" height="34.4" fill="#c6c6c6" /><rect x="843.5" y="403.0" width="5.2" height="35.4" fill="#c6c6c6" /><rect x="850.7" y="406.0" width="5.2" height="32.4" fill="#c6c6c6" /><rect x="857.9" y="404.0" width="5.2" height="34.4" fill="#c6c6c6" /><rect x="865.1" y="408.0" width="5.2" height="30.4" fill="#c6c6c6" /><rect x="872.3" y="423.0" width="5.2" height="15.4" fill="#c6c6c6" /><rect x="879.5" y="431.0" width="5.2" height="7.4" fill="#c6c6c6" /><rect x="886.7" y="435.7" width="5.2" height="2.7" fill="#c6c6c6" /><rect x="893.9" y="438.0" width="5.2" height="0.4" fill="#c6c6c6" /><g fill="#f7751c" fill-opacity="0.9"><circle cx="132.3" cy="270.0" r="1.4"/><circle cx="127.0" cy="276.7" r="1.4"/><circle cx="136.7" cy="266.2" r="1.4"/><circle cx="136.1" cy="266.0" r="1.4"/><circle cx="126.3" cy="281.2" r="1.4"/><circle cx="127.4" cy="278.5" r="1.4"/><circle cx="134.4" cy="268.4" r="1.4"/><circle cx="130.2" cy="276.0" r="1.4"/><circle cx="138.6" cy="260.2" r="1.4"/><circle cx="133.8" cy="270.8" r="1.4"/><circle cx="145.9" cy="250.7" r="1.4"/><circle cx="131.6" cy="271.7" r="1.4"/><circle cx="128.5" cy="275.8" r="1.4"/><circle cx="142.6" cy="256.1" r="1.4"/><circle cx="129.3" cy="279.0" r="1.4"/><circle cx="133.3" cy="272.1" r="1.4"/><circle cx="136.9" cy="264.6" r="1.4"/><circle cx="129.8" cy="275.1" r="1.4"/><circle cx="139.7" cy="263.2" r="1.4"/><circle cx="137.7" cy="263.4" r="1.4"/><circle cx="135.0" cy="269.4" r="1.4"/><circle cx="140.1" cy="257.0" r="1.4"/><circle cx="130.6" cy="276.8" r="1.4"/><circle cx="143.8" cy="257.0" r="1.4"/><circle cx="140.7" cy="261.5" r="1.4"/><circle cx="128.0" cy="271.8" r="1.4"/><circle cx="134.2" cy="269.1" r="1.4"/><circle cx="135.7" cy="268.4" r="1.4"/><circle cx="126.3" cy="281.5" r="1.4"/><circle cx="137.5" cy="268.0" r="1.4"/><circle cx="143.8" cy="257.1" r="1.4"/><circle cx="137.9" cy="260.7" r="1.4"/><circle cx="137.6" cy="268.6" r="1.4"/><circle cx="145.2" cy="252.5" r="1.4"/><circle cx="135.4" cy="267.9" r="1.4"/><circle cx="140.2" cy="261.5" r="1.4"/><circle cx="139.0" cy="258.2" r="1.4"/><circle cx="131.4" cy="273.3" r="1.4"/><circle cx="133.6" cy="270.4" r="1.4"/><circle cx="135.1" cy="268.3" r="1.4"/><circle cx="129.0" cy="276.0" r="1.4"/><circle cx="141.6" cy="258.3" r="1.4"/><circle cx="128.2" cy="277.7" r="1.4"/><circle cx="143.7" cy="253.5" r="1.4"/><circle cx="127.2" cy="281.5" r="1.4"/><circle cx="144.0" cy="254.6" r="1.4"/><circle cx="142.6" cy="256.1" r="1.4"/><circle cx="134.2" cy="270.6" r="1.4"/><circle cx="133.0" cy="266.6" r="1.4"/><circle cx="128.7" cy="280.9" r="1.4"/><circle cx="129.2" cy="276.1" r="1.4"/><circle cx="135.6" cy="265.6" r="1.4"/><circle cx="137.8" cy="264.1" r="1.4"/><circle cx="134.3" cy="268.9" r="1.4"/><circle cx="133.2" cy="275.8" r="1.4"/><circle cx="139.9" cy="263.4" r="1.4"/><circle cx="136.3" cy="268.8" r="1.4"/><circle cx="126.6" cy="281.5" r="1.4"/><circle cx="144.3" cy="254.1" r="1.4"/><circle cx="142.2" cy="262.5" r="1.4"/><circle cx="133.7" cy="270.8" r="1.4"/><circle cx="138.8" cy="262.2" r="1.4"/><circle cx="126.8" cy="278.2" r="1.4"/><circle cx="128.9" cy="276.1" r="1.4"/><circle cx="132.6" cy="271.4" r="1.4"/><circle cx="128.7" cy="277.0" r="1.4"/><circle cx="127.6" cy="278.8" r="1.4"/><circle cx="143.8" cy="255.3" r="1.4"/><circle cx="138.3" cy="262.4" r="1.4"/><circle cx="132.8" cy="269.9" r="1.4"/><circle cx="133.1" cy="267.6" r="1.4"/><circle cx="146.3" cy="250.7" r="1.4"/><circle cx="135.2" cy="268.7" r="1.4"/><circle cx="127.6" cy="278.4" r="1.4"/><circle cx="132.7" cy="271.8" r="1.4"/><circle cx="128.9" cy="272.5" r="1.4"/><circle cx="126.0" cy="278.2" r="1.4"/><circle cx="128.6" cy="278.0" r="1.4"/><circle cx="136.9" cy="262.7" r="1.4"/><circle cx="146.0" cy="252.2" r="1.4"/><circle cx="143.5" cy="256.6" r="1.4"/><circle cx="133.2" cy="272.4" r="1.4"/><circle cx="129.0" cy="276.2" r="1.4"/><circle cx="141.8" cy="261.3" r="1.4"/><circle cx="132.4" cy="271.1" r="1.4"/><circle cx="146.1" cy="250.7" r="1.4"/><circle cx="143.3" cy="254.9" r="1.4"/><circle cx="141.0" cy="263.6" r="1.4"/><circle cx="130.2" cy="276.9" r="1.4"/><circle cx="126.1" cy="280.9" r="1.4"/><circle cx="126.1" cy="281.0" r="1.4"/><circle cx="140.0" cy="259.4" r="1.4"/><circle cx="145.5" cy="258.4" r="1.4"/><circle cx="146.1" cy="250.7" r="1.4"/><circle cx="145.5" cy="254.4" r="1.4"/><circle cx="130.2" cy="273.6" r="1.4"/><circle cx="129.6" cy="274.8" r="1.4"/><circle cx="144.3" cy="251.9" r="1.4"/><circle cx="143.1" cy="260.0" r="1.4"/><circle cx="142.2" cy="257.5" r="1.4"/><circle cx="127.3" cy="281.5" r="1.4"/><circle cx="141.9" cy="262.7" r="1.4"/><circle cx="141.2" cy="260.8" r="1.4"/><circle cx="142.0" cy="258.0" r="1.4"/><circle cx="132.4" cy="269.8" r="1.4"/><circle cx="133.8" cy="275.6" r="1.4"/><circle cx="133.9" cy="266.2" r="1.4"/><circle cx="129.1" cy="277.7" r="1.4"/><circle cx="128.2" cy="274.9" r="1.4"/><circle cx="142.4" cy="253.7" r="1.4"/><circle cx="137.0" cy="227.2" r="1.4"/><circle cx="138.5" cy="227.2" r="1.4"/><circle cx="139.7" cy="227.2" r="1.4"/><circle cx="141.0" cy="227.2" r="1.4"/><circle cx="143.9" cy="280.2" r="1.4"/><circle cx="145.6" cy="281.2" r="1.4"/><circle cx="140.5" cy="274.8" r="1.4"/><circle cx="130.0" cy="297.5" r="1.4"/><circle cx="136.7" cy="297.5" r="1.4"/><circle cx="126.0" cy="297.5" r="1.4"/><circle cx="131.3" cy="297.5" r="1.4"/><circle cx="127.7" cy="297.5" r="1.4"/><circle cx="128.1" cy="297.5" r="1.4"/><circle cx="141.8" cy="297.5" r="1.4"/><circle cx="128.6" cy="297.5" r="1.4"/><circle cx="129.3" cy="297.5" r="1.4"/><circle cx="126.0" cy="297.5" r="1.4"/><circle cx="140.2" cy="297.5" r="1.4"/><circle cx="141.9" cy="297.5" r="1.4"/><circle cx="133.3" cy="297.5" r="1.4"/><circle cx="139.5" cy="297.5" r="1.4"/><circle cx="128.4" cy="297.5" r="1.4"/><circle cx="145.5" cy="297.5" r="1.4"/><circle cx="129.7" cy="297.5" r="1.4"/><circle cx="128.5" cy="297.5" r="1.4"/><circle cx="134.7" cy="297.5" r="1.4"/><circle cx="126.6" cy="297.5" r="1.4"/><circle cx="133.4" cy="297.5" r="1.4"/><circle cx="141.9" cy="297.5" r="1.4"/><circle cx="137.2" cy="297.5" r="1.4"/><circle cx="126.7" cy="297.5" r="1.4"/><circle cx="125.9" cy="297.5" r="1.4"/><circle cx="134.9" cy="297.5" r="1.4"/><circle cx="132.3" cy="297.5" r="1.4"/><circle cx="135.5" cy="297.5" r="1.4"/><circle cx="126.9" cy="297.5" r="1.4"/><circle cx="144.2" cy="297.5" r="1.4"/><circle cx="140.0" cy="297.5" r="1.4"/><circle cx="129.4" cy="297.5" r="1.4"/><circle cx="132.0" cy="297.5" r="1.4"/><circle cx="145.1" cy="297.5" r="1.4"/><circle cx="126.4" cy="297.5" r="1.4"/><circle cx="126.6" cy="297.5" r="1.4"/><circle cx="131.7" cy="297.5" r="1.4"/><circle cx="138.3" cy="297.5" r="1.4"/><circle cx="130.1" cy="297.5" r="1.4"/><circle cx="136.7" cy="297.5" r="1.4"/><circle cx="130.2" cy="297.5" r="1.4"/><circle cx="125.6" cy="297.5" r="1.4"/><circle cx="145.8" cy="297.5" r="1.4"/><circle cx="128.8" cy="297.5" r="1.4"/><circle cx="132.1" cy="297.5" r="1.4"/><circle cx="141.0" cy="297.5" r="1.4"/><circle cx="143.6" cy="297.5" r="1.4"/><circle cx="141.5" cy="297.5" r="1.4"/><circle cx="145.2" cy="297.5" r="1.4"/><circle cx="132.3" cy="297.5" r="1.4"/><circle cx="142.4" cy="309.3" r="1.4"/><circle cx="141.6" cy="309.3" r="1.4"/><circle cx="130.4" cy="309.3" r="1.4"/><circle cx="137.6" cy="309.3" r="1.4"/><circle cx="144.2" cy="309.3" r="1.4"/><circle cx="144.0" cy="309.3" r="1.4"/><circle cx="137.3" cy="321.2" r="1.4"/><circle cx="138.9" cy="321.2" r="1.4"/><circle cx="145.5" cy="321.2" r="1.4"/><circle cx="139.5" cy="321.2" r="1.4"/><circle cx="133.7" cy="321.2" r="1.4"/><circle cx="134.9" cy="321.2" r="1.4"/><circle cx="128.8" cy="321.2" r="1.4"/><circle cx="145.7" cy="321.2" r="1.4"/><circle cx="146.2" cy="321.2" r="1.4"/><circle cx="130.1" cy="321.2" r="1.4"/><circle cx="126.3" cy="321.2" r="1.4"/><circle cx="130.8" cy="321.2" r="1.4"/><circle cx="132.9" cy="321.2" r="1.4"/><circle cx="144.4" cy="321.2" r="1.4"/><circle cx="144.4" cy="321.2" r="1.4"/><circle cx="143.0" cy="321.2" r="1.4"/><circle cx="126.5" cy="321.2" r="1.4"/><circle cx="141.9" cy="321.2" r="1.4"/><circle cx="140.3" cy="321.2" r="1.4"/><circle cx="139.0" cy="321.2" r="1.4"/><circle cx="146.1" cy="321.2" r="1.4"/><circle cx="126.7" cy="321.2" r="1.4"/><circle cx="125.8" cy="333.4" r="1.4"/><circle cx="142.4" cy="333.4" r="1.4"/><circle cx="132.6" cy="333.4" r="1.4"/><circle cx="128.4" cy="333.4" r="1.4"/><circle cx="125.5" cy="333.4" r="1.4"/><circle cx="142.9" cy="333.4" r="1.4"/><circle cx="136.5" cy="333.4" r="1.4"/><circle cx="129.4" cy="333.4" r="1.4"/><circle cx="134.6" cy="333.4" r="1.4"/><circle cx="144.6" cy="333.4" r="1.4"/><circle cx="130.1" cy="333.4" r="1.4"/><circle cx="137.4" cy="333.4" r="1.4"/><circle cx="128.4" cy="333.4" r="1.4"/><circle cx="129.3" cy="333.4" r="1.4"/><circle cx="135.8" cy="345.6" r="1.4"/><circle cx="136.0" cy="345.6" r="1.4"/><circle cx="131.3" cy="345.6" r="1.4"/><circle cx="128.1" cy="345.6" r="1.4"/><circle cx="134.0" cy="345.6" r="1.4"/><circle cx="125.5" cy="357.8" r="1.4"/><circle cx="323.6" cy="357.8" r="1.4"/><circle cx="125.6" cy="412.3" r="1.4"/><circle cx="125.5" cy="418.5" r="1.4"/><circle cx="125.5" cy="413.8" r="1.4"/><circle cx="125.6" cy="416.4" r="1.4"/><circle cx="126.0" cy="427.2" r="1.4"/><circle cx="125.7" cy="433.6" r="1.4"/><circle cx="125.4" cy="421.2" r="1.4"/><circle cx="124.9" cy="408.0" r="1.4"/><circle cx="125.9" cy="412.9" r="1.4"/><circle cx="125.9" cy="418.2" r="1.4"/><circle cx="125.6" cy="422.6" r="1.4"/><circle cx="125.8" cy="420.9" r="1.4"/><circle cx="125.6" cy="408.1" r="1.4"/><circle cx="125.5" cy="431.1" r="1.4"/><circle cx="124.9" cy="429.8" r="1.4"/><circle cx="125.1" cy="425.0" r="1.4"/><circle cx="125.4" cy="420.0" r="1.4"/><circle cx="125.8" cy="410.2" r="1.4"/><circle cx="125.4" cy="431.7" r="1.4"/><circle cx="125.9" cy="431.4" r="1.4"/><circle cx="125.6" cy="418.7" r="1.4"/><circle cx="125.1" cy="419.3" r="1.4"/><circle cx="125.1" cy="414.8" r="1.4"/><circle cx="125.3" cy="421.4" r="1.4"/><circle cx="125.1" cy="415.7" r="1.4"/><circle cx="125.3" cy="428.6" r="1.4"/><circle cx="125.4" cy="420.1" r="1.4"/><circle cx="125.6" cy="414.7" r="1.4"/><circle cx="125.3" cy="414.0" r="1.4"/><circle cx="125.1" cy="417.3" r="1.4"/><circle cx="124.7" cy="431.3" r="1.4"/><circle cx="125.0" cy="431.3" r="1.4"/><circle cx="125.4" cy="427.3" r="1.4"/><circle cx="126.2" cy="431.3" r="1.4"/><circle cx="124.9" cy="426.3" r="1.4"/><circle cx="125.4" cy="420.5" r="1.4"/><circle cx="125.7" cy="418.3" r="1.4"/><circle cx="125.4" cy="431.5" r="1.4"/><circle cx="125.7" cy="432.5" r="1.4"/><circle cx="125.3" cy="427.9" r="1.4"/><circle cx="125.0" cy="423.4" r="1.4"/><circle cx="126.2" cy="418.3" r="1.4"/><circle cx="125.4" cy="428.0" r="1.4"/><circle cx="125.5" cy="431.5" r="1.4"/><circle cx="125.0" cy="433.1" r="1.4"/><circle cx="126.0" cy="415.8" r="1.4"/><circle cx="125.7" cy="430.0" r="1.4"/><circle cx="126.0" cy="432.2" r="1.4"/><circle cx="125.2" cy="417.1" r="1.4"/><circle cx="125.4" cy="430.1" r="1.4"/><circle cx="125.7" cy="412.6" r="1.4"/><circle cx="125.5" cy="423.4" r="1.4"/><circle cx="125.4" cy="429.3" r="1.4"/><circle cx="125.9" cy="416.1" r="1.4"/><circle cx="126.1" cy="421.0" r="1.4"/><circle cx="125.1" cy="413.6" r="1.4"/><circle cx="125.1" cy="424.9" r="1.4"/><circle cx="125.5" cy="419.3" r="1.4"/><circle cx="125.5" cy="424.6" r="1.4"/><circle cx="125.2" cy="411.9" r="1.4"/><circle cx="125.5" cy="433.5" r="1.4"/><circle cx="141.6" cy="433.6" r="1.4"/><circle cx="127.2" cy="433.2" r="1.4"/><circle cx="128.9" cy="432.6" r="1.4"/><circle cx="134.4" cy="433.4" r="1.4"/><circle cx="132.5" cy="433.4" r="1.4"/><circle cx="135.1" cy="433.5" r="1.4"/><circle cx="129.9" cy="432.9" r="1.4"/><circle cx="130.6" cy="433.4" r="1.4"/><circle cx="144.7" cy="433.1" r="1.4"/><circle cx="141.7" cy="433.4" r="1.4"/><circle cx="138.7" cy="433.4" r="1.4"/><circle cx="141.3" cy="433.4" r="1.4"/><circle cx="144.0" cy="433.5" r="1.4"/><circle cx="128.0" cy="433.1" r="1.4"/><circle cx="145.3" cy="433.1" r="1.4"/><circle cx="129.0" cy="433.2" r="1.4"/><circle cx="145.3" cy="433.5" r="1.4"/><circle cx="132.6" cy="433.1" r="1.4"/><circle cx="145.6" cy="432.8" r="1.4"/><circle cx="138.9" cy="433.1" r="1.4"/><circle cx="138.4" cy="433.2" r="1.4"/><circle cx="128.5" cy="432.9" r="1.4"/><circle cx="127.0" cy="433.2" r="1.4"/><circle cx="127.1" cy="433.4" r="1.4"/><circle cx="140.7" cy="433.4" r="1.4"/><circle cx="127.1" cy="433.6" r="1.4"/><circle cx="137.1" cy="433.5" r="1.4"/><circle cx="136.2" cy="432.9" r="1.4"/><circle cx="143.8" cy="433.1" r="1.4"/><circle cx="144.3" cy="433.4" r="1.4"/><circle cx="130.8" cy="433.0" r="1.4"/><circle cx="129.1" cy="433.1" r="1.4"/><circle cx="146.2" cy="432.9" r="1.4"/><circle cx="135.1" cy="432.9" r="1.4"/><circle cx="132.2" cy="433.5" r="1.4"/><circle cx="141.9" cy="433.1" r="1.4"/><circle cx="127.7" cy="433.5" r="1.4"/><circle cx="132.5" cy="433.2" r="1.4"/><circle cx="138.6" cy="433.5" r="1.4"/><circle cx="127.4" cy="433.5" r="1.4"/><circle cx="141.9" cy="433.4" r="1.4"/><circle cx="131.0" cy="433.3" r="1.4"/><circle cx="126.5" cy="432.6" r="1.4"/><circle cx="126.7" cy="433.5" r="1.4"/><circle cx="130.8" cy="433.1" r="1.4"/><circle cx="126.8" cy="433.3" r="1.4"/><circle cx="131.7" cy="433.5" r="1.4"/><circle cx="145.1" cy="432.4" r="1.4"/><circle cx="132.9" cy="433.3" r="1.4"/><circle cx="133.2" cy="433.6" r="1.4"/><circle cx="140.9" cy="433.4" r="1.4"/><circle cx="139.4" cy="433.4" r="1.4"/><circle cx="143.7" cy="433.4" r="1.4"/><circle cx="141.4" cy="433.5" r="1.4"/><circle cx="145.0" cy="432.9" r="1.4"/><circle cx="144.0" cy="433.5" r="1.4"/><circle cx="141.4" cy="433.4" r="1.4"/><circle cx="144.2" cy="433.3" r="1.4"/><circle cx="131.0" cy="433.4" r="1.4"/><circle cx="133.4" cy="433.6" r="1.4"/><circle cx="133.2" cy="433.5" r="1.4"/><circle cx="135.7" cy="433.1" r="1.4"/><circle cx="127.8" cy="433.1" r="1.4"/><circle cx="134.0" cy="433.4" r="1.4"/><circle cx="135.6" cy="432.6" r="1.4"/><circle cx="134.4" cy="433.1" r="1.4"/><circle cx="126.8" cy="433.5" r="1.4"/><circle cx="134.8" cy="433.3" r="1.4"/><circle cx="130.5" cy="433.6" r="1.4"/><circle cx="136.1" cy="433.5" r="1.4"/><circle cx="135.6" cy="433.5" r="1.4"/><circle cx="146.4" cy="432.9" r="1.4"/><circle cx="144.9" cy="433.5" r="1.4"/><circle cx="134.5" cy="433.5" r="1.4"/><circle cx="126.7" cy="433.0" r="1.4"/><circle cx="132.1" cy="433.6" r="1.4"/><circle cx="127.6" cy="433.1" r="1.4"/><circle cx="145.3" cy="433.6" r="1.4"/><circle cx="141.9" cy="433.0" r="1.4"/><circle cx="143.2" cy="420.8" r="1.4"/><circle cx="137.1" cy="433.1" r="1.4"/><circle cx="136.7" cy="428.0" r="1.4"/><circle cx="144.0" cy="425.4" r="1.4"/><circle cx="141.8" cy="425.8" r="1.4"/><circle cx="143.2" cy="422.3" r="1.4"/><circle cx="143.3" cy="429.5" r="1.4"/><circle cx="143.8" cy="419.8" r="1.4"/><circle cx="144.8" cy="421.5" r="1.4"/><circle cx="143.6" cy="422.3" r="1.4"/><circle cx="140.4" cy="426.0" r="1.4"/><circle cx="146.1" cy="421.0" r="1.4"/><circle cx="145.8" cy="420.4" r="1.4"/><circle cx="143.5" cy="426.4" r="1.4"/><circle cx="136.1" cy="433.6" r="1.4"/><circle cx="141.2" cy="427.4" r="1.4"/><circle cx="145.7" cy="424.0" r="1.4"/><circle cx="139.2" cy="424.4" r="1.4"/><circle cx="139.4" cy="430.0" r="1.4"/><circle cx="139.6" cy="428.7" r="1.4"/><circle cx="136.2" cy="432.3" r="1.4"/><circle cx="137.8" cy="433.2" r="1.4"/><circle cx="136.7" cy="430.3" r="1.4"/><circle cx="140.2" cy="425.5" r="1.4"/><circle cx="143.7" cy="427.3" r="1.4"/><circle cx="138.4" cy="429.1" r="1.4"/><circle cx="141.4" cy="427.7" r="1.4"/><circle cx="139.5" cy="428.6" r="1.4"/><circle cx="147.2" cy="421.4" r="1.4"/><circle cx="144.6" cy="420.9" r="1.4"/><circle cx="140.7" cy="427.3" r="1.4"/><circle cx="144.1" cy="427.4" r="1.4"/><circle cx="138.7" cy="432.1" r="1.4"/><circle cx="145.6" cy="418.6" r="1.4"/><circle cx="142.9" cy="420.7" r="1.4"/><circle cx="140.1" cy="393.6" r="1.4"/><circle cx="141.4" cy="390.9" r="1.4"/><circle cx="143.3" cy="389.6" r="1.4"/><circle cx="144.3" cy="387.6" r="1.4"/><circle cx="142.8" cy="406.9" r="1.4"/><circle cx="323.1" cy="426.3" r="1.4"/><circle cx="323.2" cy="413.3" r="1.4"/><circle cx="323.0" cy="411.1" r="1.4"/><circle cx="323.1" cy="423.9" r="1.4"/><circle cx="324.3" cy="430.0" r="1.4"/><circle cx="323.5" cy="415.7" r="1.4"/><circle cx="323.8" cy="433.0" r="1.4"/><circle cx="323.8" cy="409.7" r="1.4"/><circle cx="323.6" cy="407.0" r="1.4"/><circle cx="323.6" cy="428.4" r="1.4"/><circle cx="323.2" cy="426.8" r="1.4"/><circle cx="323.5" cy="429.0" r="1.4"/><circle cx="323.5" cy="409.2" r="1.4"/><circle cx="323.3" cy="411.9" r="1.4"/><circle cx="324.0" cy="410.0" r="1.4"/><circle cx="323.8" cy="425.1" r="1.4"/><circle cx="323.5" cy="419.1" r="1.4"/><circle cx="323.7" cy="412.3" r="1.4"/><circle cx="323.4" cy="429.0" r="1.4"/><circle cx="323.6" cy="428.7" r="1.4"/><circle cx="323.8" cy="414.9" r="1.4"/><circle cx="323.1" cy="413.1" r="1.4"/><circle cx="323.1" cy="425.9" r="1.4"/><circle cx="322.8" cy="419.4" r="1.4"/><circle cx="323.4" cy="430.7" r="1.4"/><circle cx="322.8" cy="426.3" r="1.4"/><circle cx="323.5" cy="407.7" r="1.4"/><circle cx="323.9" cy="412.6" r="1.4"/><circle cx="324.4" cy="415.7" r="1.4"/><circle cx="323.3" cy="413.8" r="1.4"/><circle cx="323.5" cy="410.9" r="1.4"/><circle cx="323.8" cy="420.5" r="1.4"/><circle cx="323.3" cy="432.1" r="1.4"/><circle cx="323.5" cy="408.7" r="1.4"/><circle cx="324.2" cy="417.8" r="1.4"/><circle cx="323.9" cy="415.3" r="1.4"/><circle cx="323.3" cy="412.1" r="1.4"/><circle cx="323.6" cy="431.8" r="1.4"/><circle cx="324.6" cy="433.0" r="1.4"/><circle cx="322.9" cy="417.1" r="1.4"/><circle cx="323.6" cy="411.6" r="1.4"/><circle cx="323.8" cy="421.5" r="1.4"/><circle cx="323.6" cy="425.3" r="1.4"/><circle cx="323.9" cy="416.7" r="1.4"/><circle cx="323.4" cy="423.7" r="1.4"/><circle cx="381.8" cy="433.4" r="1.4"/><circle cx="325.0" cy="433.6" r="1.4"/><circle cx="368.5" cy="433.4" r="1.4"/><circle cx="366.6" cy="433.3" r="1.4"/><circle cx="329.2" cy="432.6" r="1.4"/><circle cx="336.7" cy="432.8" r="1.4"/><circle cx="385.7" cy="433.4" r="1.4"/><circle cx="359.0" cy="433.4" r="1.4"/><circle cx="341.9" cy="433.6" r="1.4"/><circle cx="343.3" cy="432.7" r="1.4"/><circle cx="354.6" cy="433.3" r="1.4"/><circle cx="362.0" cy="433.2" r="1.4"/><circle cx="358.3" cy="433.2" r="1.4"/><circle cx="347.7" cy="433.2" r="1.4"/><circle cx="383.7" cy="432.5" r="1.4"/><circle cx="337.7" cy="433.4" r="1.4"/><circle cx="356.3" cy="432.0" r="1.4"/><circle cx="332.1" cy="433.6" r="1.4"/><circle cx="329.7" cy="433.5" r="1.4"/><circle cx="351.7" cy="433.5" r="1.4"/><circle cx="345.9" cy="432.9" r="1.4"/><circle cx="354.6" cy="432.8" r="1.4"/><circle cx="374.6" cy="432.8" r="1.4"/><circle cx="368.9" cy="433.3" r="1.4"/><circle cx="355.4" cy="433.4" r="1.4"/><circle cx="382.0" cy="433.3" r="1.4"/><circle cx="372.5" cy="433.5" r="1.4"/><circle cx="350.8" cy="432.9" r="1.4"/><circle cx="337.0" cy="432.0" r="1.4"/><circle cx="384.2" cy="433.4" r="1.4"/><circle cx="360.1" cy="433.2" r="1.4"/><circle cx="381.3" cy="433.6" r="1.4"/><circle cx="331.4" cy="433.0" r="1.4"/><circle cx="341.6" cy="432.6" r="1.4"/><circle cx="343.8" cy="432.9" r="1.4"/><circle cx="375.3" cy="433.3" r="1.4"/><circle cx="374.4" cy="433.2" r="1.4"/><circle cx="332.4" cy="432.8" r="1.4"/><circle cx="381.0" cy="433.4" r="1.4"/><circle cx="368.4" cy="433.2" r="1.4"/><circle cx="329.7" cy="432.8" r="1.4"/><circle cx="385.7" cy="433.0" r="1.4"/><circle cx="377.0" cy="433.4" r="1.4"/><circle cx="369.3" cy="432.5" r="1.4"/><circle cx="333.6" cy="433.1" r="1.4"/><circle cx="334.6" cy="433.2" r="1.4"/><circle cx="364.8" cy="433.3" r="1.4"/><circle cx="351.4" cy="433.6" r="1.4"/><circle cx="369.8" cy="433.3" r="1.4"/><circle cx="377.4" cy="433.2" r="1.4"/><circle cx="336.0" cy="432.9" r="1.4"/><circle cx="364.9" cy="433.3" r="1.4"/><circle cx="386.3" cy="433.6" r="1.4"/><circle cx="379.4" cy="432.3" r="1.4"/><circle cx="364.9" cy="433.2" r="1.4"/><circle cx="330.1" cy="432.5" r="1.4"/><circle cx="386.7" cy="433.1" r="1.4"/><circle cx="363.9" cy="432.3" r="1.4"/><circle cx="334.6" cy="432.8" r="1.4"/><circle cx="345.8" cy="432.7" r="1.4"/><circle cx="411.1" cy="416.8" r="1.4"/><circle cx="388.0" cy="431.8" r="1.4"/><circle cx="406.3" cy="420.1" r="1.4"/><circle cx="406.0" cy="419.2" r="1.4"/><circle cx="408.7" cy="419.3" r="1.4"/><circle cx="389.1" cy="430.3" r="1.4"/><circle cx="406.9" cy="419.7" r="1.4"/><circle cx="391.0" cy="429.7" r="1.4"/><circle cx="409.3" cy="419.9" r="1.4"/><circle cx="389.8" cy="430.1" r="1.4"/><circle cx="395.2" cy="423.4" r="1.4"/><circle cx="404.7" cy="421.7" r="1.4"/><circle cx="404.6" cy="423.2" r="1.4"/><circle cx="396.3" cy="427.3" r="1.4"/><circle cx="389.9" cy="430.3" r="1.4"/><circle cx="393.4" cy="429.2" r="1.4"/><circle cx="401.8" cy="422.1" r="1.4"/><circle cx="398.5" cy="425.3" r="1.4"/><circle cx="400.9" cy="422.3" r="1.4"/><circle cx="406.2" cy="421.6" r="1.4"/><circle cx="400.0" cy="427.9" r="1.4"/><circle cx="398.5" cy="425.6" r="1.4"/><circle cx="406.8" cy="422.9" r="1.4"/><circle cx="409.0" cy="419.5" r="1.4"/><circle cx="385.0" cy="433.6" r="1.4"/><circle cx="521.4" cy="412.5" r="1.4"/><circle cx="521.4" cy="433.0" r="1.4"/><circle cx="521.4" cy="411.0" r="1.4"/><circle cx="521.4" cy="410.7" r="1.4"/><circle cx="521.4" cy="421.3" r="1.4"/><circle cx="521.4" cy="407.4" r="1.4"/><circle cx="521.4" cy="425.3" r="1.4"/><circle cx="521.4" cy="427.8" r="1.4"/><circle cx="521.4" cy="420.2" r="1.4"/><circle cx="521.4" cy="433.6" r="1.4"/><circle cx="521.4" cy="427.9" r="1.4"/><circle cx="521.4" cy="422.7" r="1.4"/><circle cx="521.4" cy="426.8" r="1.4"/><circle cx="521.4" cy="424.8" r="1.4"/><circle cx="521.4" cy="419.4" r="1.4"/><circle cx="521.4" cy="431.6" r="1.4"/><circle cx="521.4" cy="419.4" r="1.4"/><circle cx="521.4" cy="415.1" r="1.4"/><circle cx="521.4" cy="416.5" r="1.4"/><circle cx="521.4" cy="431.7" r="1.4"/><circle cx="521.4" cy="418.8" r="1.4"/><circle cx="521.4" cy="414.7" r="1.4"/><circle cx="521.4" cy="423.4" r="1.4"/><circle cx="521.4" cy="418.3" r="1.4"/><circle cx="521.4" cy="409.3" r="1.4"/><circle cx="521.4" cy="413.4" r="1.4"/><circle cx="521.4" cy="424.4" r="1.4"/><circle cx="521.4" cy="433.0" r="1.4"/><circle cx="521.4" cy="425.8" r="1.4"/><circle cx="521.4" cy="433.2" r="1.4"/><circle cx="593.8" cy="426.7" r="1.4"/><circle cx="593.8" cy="416.7" r="1.4"/><circle cx="593.8" cy="418.7" r="1.4"/><circle cx="593.8" cy="425.5" r="1.4"/><circle cx="593.8" cy="424.0" r="1.4"/><circle cx="593.8" cy="419.3" r="1.4"/><circle cx="593.8" cy="420.6" r="1.4"/><circle cx="593.8" cy="423.6" r="1.4"/><circle cx="593.8" cy="420.6" r="1.4"/><circle cx="593.8" cy="423.1" r="1.4"/><circle cx="630.0" cy="423.2" r="1.4"/><circle cx="630.0" cy="430.8" r="1.4"/><circle cx="630.0" cy="433.6" r="1.4"/><circle cx="630.0" cy="429.1" r="1.4"/><circle cx="630.0" cy="423.7" r="1.4"/><circle cx="630.0" cy="425.1" r="1.4"/><circle cx="630.0" cy="428.8" r="1.4"/><circle cx="630.0" cy="415.8" r="1.4"/><circle cx="630.0" cy="433.3" r="1.4"/><circle cx="630.0" cy="409.8" r="1.4"/><circle cx="666.2" cy="430.7" r="1.4"/><circle cx="666.2" cy="427.8" r="1.4"/><circle cx="666.2" cy="419.3" r="1.4"/><circle cx="666.2" cy="433.3" r="1.4"/><circle cx="666.2" cy="418.9" r="1.4"/><circle cx="666.2" cy="428.6" r="1.4"/><circle cx="666.2" cy="431.4" r="1.4"/><circle cx="666.2" cy="422.3" r="1.4"/><circle cx="666.2" cy="429.4" r="1.4"/><circle cx="666.2" cy="415.0" r="1.4"/><circle cx="666.2" cy="424.3" r="1.4"/><circle cx="702.4" cy="428.6" r="1.4"/><circle cx="702.4" cy="420.5" r="1.4"/><circle cx="702.4" cy="425.1" r="1.4"/><circle cx="702.4" cy="428.4" r="1.4"/><circle cx="702.4" cy="415.8" r="1.4"/><circle cx="702.4" cy="425.8" r="1.4"/><circle cx="702.4" cy="415.0" r="1.4"/><circle cx="702.4" cy="423.3" r="1.4"/><circle cx="702.4" cy="431.7" r="1.4"/><circle cx="702.4" cy="431.0" r="1.4"/><circle cx="702.4" cy="421.3" r="1.4"/><circle cx="702.4" cy="415.1" r="1.4"/><circle cx="702.4" cy="428.4" r="1.4"/><circle cx="702.4" cy="412.7" r="1.4"/><circle cx="702.4" cy="417.9" r="1.4"/><circle cx="702.4" cy="423.6" r="1.4"/><circle cx="702.4" cy="424.9" r="1.4"/><circle cx="702.4" cy="417.6" r="1.4"/><circle cx="702.4" cy="422.3" r="1.4"/><circle cx="702.4" cy="432.2" r="1.4"/><circle cx="702.4" cy="428.1" r="1.4"/><circle cx="702.4" cy="421.4" r="1.4"/><circle cx="702.4" cy="417.2" r="1.4"/><circle cx="702.4" cy="431.8" r="1.4"/><circle cx="702.4" cy="415.0" r="1.4"/></g><g fill="#d54be9" fill-opacity="0.9"><circle cx="147.8" cy="250.9" r="1.4"/><circle cx="152.6" cy="260.0" r="1.4"/><circle cx="149.7" cy="255.2" r="1.4"/><circle cx="146.5" cy="254.4" r="1.4"/><circle cx="155.5" cy="255.8" r="1.4"/><circle cx="155.2" cy="256.4" r="1.4"/><circle cx="150.5" cy="250.9" r="1.4"/><circle cx="148.4" cy="257.3" r="1.4"/><circle cx="148.8" cy="254.5" r="1.4"/><circle cx="151.9" cy="252.3" r="1.4"/><circle cx="148.8" cy="255.1" r="1.4"/><circle cx="155.0" cy="253.4" r="1.4"/><circle cx="149.7" cy="257.1" r="1.4"/><circle cx="154.9" cy="253.2" r="1.4"/><circle cx="150.4" cy="251.6" r="1.4"/><circle cx="151.4" cy="255.4" r="1.4"/><circle cx="151.3" cy="251.5" r="1.4"/><circle cx="148.1" cy="253.7" r="1.4"/><circle cx="146.4" cy="253.6" r="1.4"/><circle cx="150.9" cy="255.4" r="1.4"/><circle cx="153.2" cy="256.0" r="1.4"/><circle cx="151.3" cy="254.8" r="1.4"/><circle cx="151.6" cy="253.8" r="1.4"/><circle cx="151.7" cy="255.1" r="1.4"/><circle cx="148.7" cy="254.7" r="1.4"/><circle cx="151.2" cy="249.9" r="1.4"/><circle cx="151.7" cy="253.7" r="1.4"/><circle cx="150.6" cy="259.3" r="1.4"/><circle cx="152.2" cy="256.9" r="1.4"/><circle cx="152.9" cy="254.1" r="1.4"/><circle cx="150.7" cy="256.7" r="1.4"/><circle cx="155.3" cy="254.6" r="1.4"/><circle cx="153.0" cy="249.9" r="1.4"/><circle cx="148.8" cy="258.1" r="1.4"/><circle cx="151.7" cy="249.7" r="1.4"/><circle cx="147.7" cy="255.6" r="1.4"/><circle cx="147.5" cy="254.9" r="1.4"/><circle cx="148.7" cy="253.7" r="1.4"/><circle cx="147.1" cy="256.1" r="1.4"/><circle cx="154.8" cy="257.7" r="1.4"/><circle cx="147.9" cy="254.8" r="1.4"/><circle cx="147.7" cy="257.5" r="1.4"/><circle cx="154.7" cy="252.4" r="1.4"/><circle cx="155.4" cy="254.4" r="1.4"/><circle cx="150.1" cy="260.1" r="1.4"/><circle cx="154.2" cy="253.4" r="1.4"/><circle cx="147.9" cy="256.7" r="1.4"/><circle cx="149.6" cy="252.8" r="1.4"/><circle cx="148.2" cy="255.6" r="1.4"/><circle cx="146.6" cy="250.5" r="1.4"/><circle cx="151.6" cy="254.5" r="1.4"/><circle cx="149.5" cy="253.9" r="1.4"/><circle cx="152.3" cy="254.9" r="1.4"/><circle cx="155.7" cy="254.1" r="1.4"/><circle cx="153.8" cy="252.9" r="1.4"/><circle cx="148.9" cy="254.2" r="1.4"/><circle cx="146.8" cy="253.7" r="1.4"/><circle cx="147.6" cy="255.9" r="1.4"/><circle cx="150.4" cy="250.2" r="1.4"/><circle cx="148.8" cy="256.4" r="1.4"/><circle cx="156.6" cy="225.4" r="1.4"/><circle cx="161.9" cy="233.0" r="1.4"/><circle cx="155.9" cy="255.4" r="1.4"/><circle cx="163.4" cy="242.6" r="1.4"/><circle cx="155.7" cy="224.7" r="1.4"/><circle cx="162.7" cy="229.5" r="1.4"/><circle cx="155.8" cy="227.5" r="1.4"/><circle cx="155.6" cy="227.3" r="1.4"/><circle cx="160.5" cy="245.6" r="1.4"/><circle cx="161.7" cy="225.1" r="1.4"/><circle cx="158.1" cy="252.9" r="1.4"/><circle cx="161.4" cy="249.1" r="1.4"/><circle cx="156.1" cy="251.8" r="1.4"/><circle cx="155.4" cy="250.4" r="1.4"/><circle cx="158.7" cy="246.8" r="1.4"/><circle cx="164.3" cy="247.3" r="1.4"/><circle cx="161.0" cy="251.2" r="1.4"/><circle cx="159.1" cy="256.7" r="1.4"/><circle cx="157.9" cy="256.8" r="1.4"/><circle cx="164.0" cy="238.2" r="1.4"/><circle cx="157.1" cy="240.8" r="1.4"/><circle cx="166.5" cy="253.7" r="1.4"/><circle cx="165.0" cy="242.3" r="1.4"/><circle cx="161.0" cy="228.3" r="1.4"/><circle cx="159.7" cy="239.7" r="1.4"/><circle cx="163.4" cy="223.2" r="1.4"/><circle cx="159.1" cy="228.4" r="1.4"/><circle cx="163.6" cy="235.2" r="1.4"/><circle cx="159.8" cy="245.3" r="1.4"/><circle cx="155.4" cy="252.9" r="1.4"/><circle cx="155.6" cy="231.6" r="1.4"/><circle cx="158.0" cy="251.7" r="1.4"/><circle cx="155.8" cy="228.1" r="1.4"/><circle cx="165.7" cy="234.0" r="1.4"/><circle cx="158.3" cy="248.9" r="1.4"/><circle cx="158.4" cy="241.4" r="1.4"/><circle cx="156.7" cy="241.8" r="1.4"/><circle cx="158.1" cy="223.9" r="1.4"/><circle cx="167.0" cy="238.3" r="1.4"/><circle cx="157.8" cy="223.7" r="1.4"/><circle cx="158.6" cy="245.0" r="1.4"/><circle cx="154.8" cy="244.1" r="1.4"/><circle cx="160.7" cy="239.9" r="1.4"/><circle cx="157.3" cy="239.8" r="1.4"/><circle cx="154.8" cy="248.2" r="1.4"/><circle cx="155.9" cy="243.5" r="1.4"/><circle cx="155.3" cy="256.6" r="1.4"/><circle cx="158.6" cy="249.3" r="1.4"/><circle cx="162.1" cy="238.9" r="1.4"/><circle cx="164.2" cy="234.5" r="1.4"/><circle cx="163.7" cy="226.8" r="1.4"/><circle cx="159.6" cy="246.0" r="1.4"/><circle cx="167.1" cy="252.2" r="1.4"/><circle cx="163.8" cy="235.0" r="1.4"/><circle cx="155.3" cy="228.3" r="1.4"/><circle cx="165.9" cy="235.5" r="1.4"/><circle cx="164.0" cy="229.1" r="1.4"/><circle cx="156.5" cy="239.1" r="1.4"/><circle cx="161.1" cy="228.3" r="1.4"/><circle cx="164.9" cy="228.6" r="1.4"/><circle cx="162.1" cy="226.3" r="1.4"/><circle cx="163.3" cy="233.2" r="1.4"/><circle cx="157.6" cy="256.3" r="1.4"/><circle cx="156.4" cy="244.8" r="1.4"/><circle cx="156.1" cy="228.3" r="1.4"/><circle cx="161.8" cy="235.5" r="1.4"/><circle cx="162.6" cy="233.7" r="1.4"/><circle cx="160.9" cy="257.3" r="1.4"/><circle cx="164.8" cy="231.3" r="1.4"/><circle cx="161.1" cy="238.7" r="1.4"/><circle cx="163.0" cy="255.1" r="1.4"/><circle cx="164.0" cy="248.6" r="1.4"/><circle cx="155.7" cy="248.1" r="1.4"/><circle cx="163.9" cy="250.2" r="1.4"/><circle cx="164.0" cy="223.4" r="1.4"/><circle cx="161.0" cy="244.1" r="1.4"/><circle cx="160.8" cy="233.6" r="1.4"/><circle cx="164.4" cy="235.9" r="1.4"/><circle cx="162.8" cy="254.7" r="1.4"/><circle cx="156.6" cy="248.5" r="1.4"/><circle cx="164.1" cy="246.8" r="1.4"/><circle cx="161.9" cy="256.9" r="1.4"/><circle cx="155.5" cy="248.0" r="1.4"/><circle cx="163.2" cy="233.3" r="1.4"/><circle cx="163.2" cy="247.2" r="1.4"/><circle cx="161.2" cy="241.2" r="1.4"/><circle cx="160.6" cy="253.3" r="1.4"/><circle cx="166.0" cy="250.4" r="1.4"/><circle cx="167.0" cy="224.8" r="1.4"/><circle cx="155.0" cy="241.4" r="1.4"/><circle cx="165.0" cy="223.7" r="1.4"/><circle cx="160.4" cy="248.0" r="1.4"/><circle cx="157.4" cy="224.4" r="1.4"/><circle cx="157.4" cy="237.1" r="1.4"/><circle cx="156.5" cy="239.1" r="1.4"/><circle cx="166.7" cy="252.8" r="1.4"/><circle cx="165.0" cy="239.7" r="1.4"/><circle cx="165.9" cy="232.9" r="1.4"/><circle cx="157.7" cy="226.1" r="1.4"/><circle cx="160.9" cy="256.5" r="1.4"/><circle cx="154.8" cy="240.2" r="1.4"/><circle cx="160.4" cy="246.9" r="1.4"/><circle cx="156.5" cy="245.4" r="1.4"/><circle cx="158.7" cy="228.1" r="1.4"/><circle cx="154.8" cy="231.2" r="1.4"/><circle cx="165.3" cy="253.2" r="1.4"/><circle cx="166.4" cy="232.5" r="1.4"/><circle cx="166.1" cy="247.3" r="1.4"/><circle cx="159.4" cy="243.7" r="1.4"/><circle cx="167.3" cy="236.9" r="1.4"/><circle cx="153.8" cy="271.9" r="1.4"/><circle cx="155.0" cy="276.5" r="1.4"/><circle cx="155.6" cy="271.7" r="1.4"/><circle cx="155.3" cy="258.7" r="1.4"/><circle cx="154.3" cy="267.2" r="1.4"/><circle cx="155.0" cy="273.7" r="1.4"/><circle cx="152.9" cy="259.7" r="1.4"/><circle cx="155.8" cy="261.2" r="1.4"/><circle cx="153.1" cy="258.6" r="1.4"/><circle cx="153.0" cy="266.4" r="1.4"/><circle cx="154.3" cy="262.8" r="1.4"/><circle cx="154.1" cy="268.4" r="1.4"/><circle cx="148.5" cy="227.9" r="1.4"/><circle cx="151.6" cy="228.6" r="1.4"/><circle cx="152.7" cy="233.3" r="1.4"/><circle cx="162.1" cy="280.2" r="1.4"/><circle cx="163.5" cy="281.1" r="1.4"/><circle cx="165.2" cy="280.4" r="1.4"/><circle cx="164.8" cy="278.8" r="1.4"/><circle cx="161.6" cy="297.5" r="1.4"/><circle cx="163.5" cy="297.5" r="1.4"/><circle cx="164.0" cy="297.5" r="1.4"/><circle cx="167.2" cy="297.5" r="1.4"/><circle cx="161.7" cy="297.5" r="1.4"/><circle cx="154.5" cy="297.5" r="1.4"/><circle cx="157.9" cy="297.5" r="1.4"/><circle cx="151.1" cy="297.5" r="1.4"/><circle cx="165.0" cy="297.5" r="1.4"/><circle cx="163.0" cy="297.5" r="1.4"/><circle cx="151.7" cy="297.5" r="1.4"/><circle cx="153.8" cy="297.5" r="1.4"/><circle cx="162.2" cy="297.5" r="1.4"/><circle cx="166.1" cy="297.5" r="1.4"/><circle cx="159.2" cy="297.5" r="1.4"/><circle cx="158.2" cy="297.5" r="1.4"/><circle cx="148.1" cy="297.5" r="1.4"/><circle cx="156.7" cy="297.5" r="1.4"/><circle cx="164.5" cy="297.5" r="1.4"/><circle cx="146.5" cy="297.5" r="1.4"/><circle cx="164.7" cy="297.5" r="1.4"/><circle cx="151.1" cy="297.5" r="1.4"/><circle cx="150.0" cy="297.5" r="1.4"/><circle cx="148.6" cy="297.5" r="1.4"/><circle cx="148.7" cy="297.5" r="1.4"/><circle cx="160.9" cy="297.5" r="1.4"/><circle cx="154.0" cy="297.5" r="1.4"/><circle cx="148.9" cy="297.5" r="1.4"/><circle cx="158.1" cy="297.5" r="1.4"/><circle cx="150.1" cy="297.5" r="1.4"/><circle cx="158.8" cy="297.5" r="1.4"/><circle cx="160.0" cy="297.5" r="1.4"/><circle cx="155.4" cy="297.5" r="1.4"/><circle cx="162.3" cy="297.5" r="1.4"/><circle cx="157.4" cy="297.5" r="1.4"/><circle cx="161.1" cy="297.5" r="1.4"/><circle cx="149.6" cy="297.5" r="1.4"/><circle cx="163.1" cy="297.5" r="1.4"/><circle cx="153.9" cy="297.5" r="1.4"/><circle cx="159.4" cy="297.5" r="1.4"/><circle cx="153.6" cy="297.5" r="1.4"/><circle cx="157.8" cy="297.5" r="1.4"/><circle cx="155.3" cy="297.5" r="1.4"/><circle cx="148.1" cy="297.5" r="1.4"/><circle cx="151.2" cy="297.5" r="1.4"/><circle cx="149.4" cy="297.5" r="1.4"/><circle cx="158.6" cy="297.5" r="1.4"/><circle cx="154.6" cy="297.5" r="1.4"/><circle cx="147.4" cy="297.5" r="1.4"/><circle cx="158.2" cy="297.5" r="1.4"/><circle cx="146.7" cy="297.5" r="1.4"/><circle cx="152.3" cy="297.5" r="1.4"/><circle cx="161.5" cy="297.5" r="1.4"/><circle cx="161.0" cy="297.5" r="1.4"/><circle cx="157.3" cy="309.3" r="1.4"/><circle cx="156.4" cy="309.3" r="1.4"/><circle cx="158.7" cy="309.3" r="1.4"/><circle cx="150.4" cy="309.3" r="1.4"/><circle cx="150.4" cy="309.3" r="1.4"/><circle cx="150.2" cy="309.3" r="1.4"/><circle cx="161.1" cy="309.3" r="1.4"/><circle cx="149.4" cy="321.2" r="1.4"/><circle cx="162.2" cy="321.2" r="1.4"/><circle cx="166.0" cy="321.2" r="1.4"/><circle cx="160.5" cy="321.2" r="1.4"/><circle cx="152.6" cy="321.2" r="1.4"/><circle cx="158.8" cy="321.2" r="1.4"/><circle cx="162.2" cy="321.2" r="1.4"/><circle cx="148.6" cy="321.2" r="1.4"/><circle cx="153.2" cy="321.2" r="1.4"/><circle cx="151.8" cy="321.2" r="1.4"/><circle cx="149.0" cy="321.2" r="1.4"/><circle cx="156.5" cy="321.2" r="1.4"/><circle cx="149.9" cy="321.2" r="1.4"/><circle cx="151.4" cy="321.2" r="1.4"/><circle cx="162.5" cy="333.4" r="1.4"/><circle cx="161.3" cy="333.4" r="1.4"/><circle cx="150.5" cy="333.4" r="1.4"/><circle cx="148.1" cy="333.4" r="1.4"/><circle cx="148.2" cy="333.4" r="1.4"/><circle cx="159.1" cy="333.4" r="1.4"/><circle cx="156.8" cy="333.4" r="1.4"/><circle cx="152.1" cy="333.4" r="1.4"/><circle cx="150.7" cy="333.4" r="1.4"/><circle cx="159.2" cy="333.4" r="1.4"/><circle cx="161.2" cy="333.4" r="1.4"/><circle cx="163.4" cy="333.4" r="1.4"/><circle cx="158.6" cy="333.4" r="1.4"/><circle cx="150.6" cy="333.4" r="1.4"/><circle cx="147.8" cy="333.4" r="1.4"/><circle cx="161.7" cy="333.4" r="1.4"/><circle cx="154.9" cy="333.4" r="1.4"/><circle cx="161.5" cy="333.4" r="1.4"/><circle cx="147.6" cy="333.4" r="1.4"/><circle cx="163.3" cy="333.4" r="1.4"/><circle cx="153.4" cy="333.4" r="1.4"/><circle cx="164.0" cy="333.4" r="1.4"/><circle cx="149.3" cy="345.6" r="1.4"/><circle cx="158.8" cy="345.6" r="1.4"/><circle cx="164.4" cy="345.6" r="1.4"/><circle cx="149.5" cy="345.6" r="1.4"/><circle cx="158.4" cy="345.6" r="1.4"/><circle cx="162.0" cy="345.6" r="1.4"/><circle cx="159.6" cy="391.9" r="1.4"/><circle cx="156.5" cy="387.5" r="1.4"/><circle cx="160.9" cy="386.6" r="1.4"/><circle cx="166.0" cy="378.7" r="1.4"/><circle cx="167.3" cy="381.7" r="1.4"/><circle cx="163.7" cy="381.2" r="1.4"/><circle cx="155.1" cy="388.0" r="1.4"/><circle cx="164.7" cy="384.3" r="1.4"/><circle cx="164.2" cy="385.8" r="1.4"/><circle cx="155.9" cy="376.9" r="1.4"/><circle cx="154.9" cy="386.2" r="1.4"/><circle cx="163.1" cy="403.1" r="1.4"/><circle cx="154.1" cy="396.9" r="1.4"/><circle cx="166.8" cy="380.7" r="1.4"/><circle cx="165.9" cy="375.5" r="1.4"/><circle cx="155.2" cy="380.8" r="1.4"/><circle cx="154.7" cy="379.8" r="1.4"/><circle cx="157.1" cy="382.7" r="1.4"/><circle cx="162.4" cy="388.0" r="1.4"/><circle cx="159.2" cy="394.1" r="1.4"/><circle cx="160.0" cy="395.5" r="1.4"/><circle cx="158.1" cy="387.5" r="1.4"/><circle cx="160.3" cy="392.3" r="1.4"/><circle cx="161.3" cy="388.1" r="1.4"/><circle cx="156.4" cy="395.3" r="1.4"/><circle cx="166.7" cy="376.7" r="1.4"/><circle cx="162.1" cy="399.8" r="1.4"/><circle cx="156.4" cy="376.8" r="1.4"/><circle cx="164.7" cy="386.3" r="1.4"/><circle cx="162.7" cy="387.8" r="1.4"/><circle cx="155.8" cy="392.7" r="1.4"/><circle cx="159.2" cy="373.6" r="1.4"/><circle cx="157.6" cy="384.5" r="1.4"/><circle cx="165.7" cy="402.2" r="1.4"/><circle cx="159.5" cy="393.6" r="1.4"/><circle cx="167.0" cy="373.6" r="1.4"/><circle cx="154.0" cy="377.4" r="1.4"/><circle cx="158.5" cy="387.1" r="1.4"/><circle cx="154.6" cy="385.7" r="1.4"/><circle cx="163.0" cy="392.0" r="1.4"/><circle cx="158.2" cy="391.9" r="1.4"/><circle cx="167.3" cy="385.4" r="1.4"/><circle cx="162.0" cy="383.2" r="1.4"/><circle cx="160.1" cy="387.8" r="1.4"/><circle cx="165.6" cy="392.8" r="1.4"/><circle cx="159.5" cy="392.0" r="1.4"/><circle cx="159.3" cy="389.7" r="1.4"/><circle cx="157.7" cy="378.3" r="1.4"/><circle cx="163.8" cy="390.4" r="1.4"/><circle cx="162.8" cy="374.4" r="1.4"/><circle cx="162.6" cy="384.3" r="1.4"/><circle cx="154.4" cy="392.1" r="1.4"/><circle cx="161.9" cy="387.8" r="1.4"/><circle cx="155.7" cy="377.4" r="1.4"/><circle cx="156.3" cy="395.2" r="1.4"/><circle cx="158.1" cy="391.8" r="1.4"/><circle cx="165.1" cy="388.0" r="1.4"/><circle cx="153.6" cy="388.8" r="1.4"/><circle cx="159.3" cy="391.3" r="1.4"/><circle cx="153.3" cy="395.4" r="1.4"/><circle cx="164.2" cy="413.2" r="1.4"/><circle cx="157.5" cy="421.2" r="1.4"/><circle cx="147.0" cy="428.2" r="1.4"/><circle cx="148.1" cy="433.6" r="1.4"/><circle cx="151.3" cy="423.8" r="1.4"/><circle cx="164.3" cy="401.8" r="1.4"/><circle cx="162.0" cy="409.6" r="1.4"/><circle cx="148.0" cy="429.4" r="1.4"/><circle cx="148.2" cy="428.1" r="1.4"/><circle cx="147.9" cy="422.9" r="1.4"/><circle cx="153.3" cy="426.5" r="1.4"/><circle cx="163.8" cy="394.2" r="1.4"/><circle cx="153.0" cy="417.9" r="1.4"/><circle cx="151.7" cy="428.3" r="1.4"/><circle cx="147.7" cy="411.3" r="1.4"/><circle cx="149.0" cy="422.7" r="1.4"/><circle cx="163.6" cy="411.7" r="1.4"/><circle cx="149.2" cy="421.0" r="1.4"/><circle cx="158.4" cy="400.8" r="1.4"/><circle cx="161.3" cy="411.7" r="1.4"/><circle cx="163.1" cy="414.0" r="1.4"/><circle cx="146.7" cy="430.0" r="1.4"/><circle cx="152.6" cy="416.0" r="1.4"/><circle cx="147.7" cy="427.7" r="1.4"/><circle cx="149.4" cy="426.6" r="1.4"/><circle cx="155.7" cy="427.8" r="1.4"/><circle cx="162.6" cy="419.6" r="1.4"/><circle cx="155.8" cy="429.7" r="1.4"/><circle cx="155.0" cy="401.8" r="1.4"/><circle cx="150.7" cy="425.5" r="1.4"/><circle cx="163.1" cy="421.0" r="1.4"/><circle cx="156.4" cy="414.9" r="1.4"/><circle cx="156.8" cy="419.1" r="1.4"/><circle cx="150.9" cy="424.3" r="1.4"/><circle cx="146.9" cy="433.6" r="1.4"/><circle cx="160.7" cy="412.2" r="1.4"/><circle cx="155.4" cy="418.0" r="1.4"/><circle cx="166.0" cy="398.9" r="1.4"/><circle cx="166.2" cy="399.9" r="1.4"/><circle cx="147.6" cy="433.6" r="1.4"/><circle cx="155.6" cy="426.2" r="1.4"/><circle cx="159.9" cy="402.3" r="1.4"/><circle cx="160.3" cy="409.6" r="1.4"/><circle cx="156.8" cy="425.3" r="1.4"/><circle cx="152.5" cy="423.2" r="1.4"/><circle cx="152.2" cy="431.6" r="1.4"/><circle cx="152.9" cy="423.3" r="1.4"/><circle cx="158.9" cy="409.5" r="1.4"/><circle cx="151.3" cy="419.3" r="1.4"/><circle cx="162.0" cy="408.4" r="1.4"/><circle cx="158.1" cy="382.3" r="1.4"/><circle cx="157.7" cy="396.5" r="1.4"/><circle cx="153.8" cy="410.9" r="1.4"/><circle cx="157.5" cy="391.1" r="1.4"/><circle cx="155.1" cy="411.2" r="1.4"/><circle cx="159.0" cy="395.1" r="1.4"/><circle cx="155.3" cy="382.9" r="1.4"/><circle cx="160.4" cy="398.5" r="1.4"/><circle cx="157.9" cy="394.3" r="1.4"/><circle cx="158.7" cy="387.5" r="1.4"/><circle cx="153.9" cy="411.8" r="1.4"/><circle cx="158.6" cy="410.5" r="1.4"/><circle cx="160.2" cy="408.8" r="1.4"/><circle cx="159.5" cy="379.6" r="1.4"/><circle cx="156.4" cy="411.3" r="1.4"/><circle cx="157.7" cy="412.4" r="1.4"/><circle cx="157.5" cy="382.9" r="1.4"/><circle cx="157.5" cy="401.3" r="1.4"/><circle cx="156.0" cy="408.4" r="1.4"/><circle cx="157.9" cy="387.8" r="1.4"/><circle cx="158.3" cy="412.5" r="1.4"/><circle cx="160.1" cy="389.5" r="1.4"/><circle cx="156.1" cy="388.4" r="1.4"/><circle cx="153.9" cy="384.1" r="1.4"/><circle cx="156.9" cy="399.0" r="1.4"/><circle cx="153.1" cy="399.7" r="1.4"/><circle cx="159.0" cy="388.1" r="1.4"/><circle cx="154.4" cy="381.5" r="1.4"/><circle cx="155.4" cy="393.7" r="1.4"/><circle cx="151.5" cy="379.6" r="1.4"/><circle cx="337.6" cy="389.6" r="1.4"/><circle cx="375.6" cy="385.6" r="1.4"/><circle cx="367.6" cy="392.3" r="1.4"/><circle cx="379.6" cy="388.3" r="1.4"/><circle cx="323.6" cy="401.6" r="1.4"/><circle cx="333.6" cy="402.9" r="1.4"/><circle cx="324.8" cy="398.9" r="1.4"/><circle cx="557.6" cy="432.7" r="1.4"/><circle cx="557.6" cy="427.1" r="1.4"/><circle cx="557.6" cy="425.3" r="1.4"/><circle cx="557.6" cy="426.0" r="1.4"/><circle cx="557.6" cy="432.1" r="1.4"/><circle cx="557.6" cy="423.5" r="1.4"/><circle cx="557.6" cy="425.6" r="1.4"/><circle cx="557.6" cy="420.9" r="1.4"/><circle cx="557.6" cy="418.6" r="1.4"/><circle cx="557.6" cy="420.3" r="1.4"/><circle cx="557.6" cy="427.7" r="1.4"/><circle cx="557.6" cy="425.6" r="1.4"/><circle cx="593.8" cy="428.5" r="1.4"/><circle cx="593.8" cy="412.7" r="1.4"/><circle cx="593.8" cy="413.7" r="1.4"/><circle cx="593.8" cy="431.4" r="1.4"/><circle cx="593.8" cy="431.5" r="1.4"/><circle cx="593.8" cy="412.4" r="1.4"/><circle cx="593.8" cy="429.7" r="1.4"/><circle cx="593.8" cy="419.1" r="1.4"/><circle cx="593.8" cy="431.4" r="1.4"/><circle cx="593.8" cy="415.4" r="1.4"/><circle cx="593.8" cy="425.6" r="1.4"/><circle cx="593.8" cy="427.5" r="1.4"/><circle cx="593.8" cy="414.5" r="1.4"/><circle cx="593.8" cy="426.6" r="1.4"/><circle cx="593.8" cy="420.9" r="1.4"/><circle cx="630.0" cy="427.7" r="1.4"/><circle cx="630.0" cy="421.5" r="1.4"/><circle cx="630.0" cy="428.8" r="1.4"/><circle cx="630.0" cy="413.6" r="1.4"/><circle cx="630.0" cy="432.1" r="1.4"/><circle cx="630.0" cy="415.8" r="1.4"/><circle cx="630.0" cy="419.7" r="1.4"/><circle cx="630.0" cy="428.8" r="1.4"/><circle cx="630.0" cy="420.6" r="1.4"/><circle cx="630.0" cy="411.0" r="1.4"/><circle cx="630.0" cy="432.8" r="1.4"/><circle cx="630.0" cy="433.1" r="1.4"/><circle cx="630.0" cy="410.2" r="1.4"/><circle cx="630.0" cy="415.7" r="1.4"/><circle cx="630.0" cy="411.6" r="1.4"/><circle cx="666.2" cy="431.0" r="1.4"/><circle cx="666.2" cy="417.0" r="1.4"/><circle cx="666.2" cy="432.4" r="1.4"/><circle cx="666.2" cy="416.8" r="1.4"/><circle cx="666.2" cy="423.9" r="1.4"/><circle cx="666.2" cy="418.5" r="1.4"/><circle cx="666.2" cy="418.9" r="1.4"/><circle cx="666.2" cy="431.9" r="1.4"/><circle cx="666.2" cy="426.3" r="1.4"/><circle cx="666.2" cy="420.7" r="1.4"/><circle cx="666.2" cy="415.2" r="1.4"/><circle cx="666.2" cy="432.1" r="1.4"/><circle cx="666.2" cy="415.2" r="1.4"/><circle cx="666.2" cy="427.2" r="1.4"/></g><g fill="#a69f9c" fill-opacity="0.9"><circle cx="183.0" cy="234.4" r="1.4"/><circle cx="173.3" cy="254.4" r="1.4"/><circle cx="186.7" cy="251.8" r="1.4"/><circle cx="177.2" cy="244.5" r="1.4"/><circle cx="173.5" cy="231.3" r="1.4"/><circle cx="187.7" cy="247.3" r="1.4"/><circle cx="181.0" cy="246.0" r="1.4"/><circle cx="178.9" cy="242.8" r="1.4"/><circle cx="170.8" cy="250.6" r="1.4"/><circle cx="171.6" cy="225.7" r="1.4"/><circle cx="177.7" cy="248.7" r="1.4"/><circle cx="186.2" cy="222.7" r="1.4"/><circle cx="176.7" cy="251.4" r="1.4"/><circle cx="171.3" cy="253.0" r="1.4"/><circle cx="174.4" cy="253.0" r="1.4"/><circle cx="172.3" cy="247.4" r="1.4"/><circle cx="179.2" cy="226.3" r="1.4"/><circle cx="183.0" cy="242.2" r="1.4"/><circle cx="176.0" cy="238.5" r="1.4"/><circle cx="175.2" cy="244.7" r="1.4"/><circle cx="168.6" cy="246.7" r="1.4"/><circle cx="187.5" cy="251.8" r="1.4"/><circle cx="177.8" cy="234.9" r="1.4"/><circle cx="185.3" cy="248.8" r="1.4"/><circle cx="173.0" cy="247.7" r="1.4"/><circle cx="175.7" cy="241.1" r="1.4"/><circle cx="187.2" cy="227.6" r="1.4"/><circle cx="185.5" cy="255.3" r="1.4"/><circle cx="168.0" cy="232.3" r="1.4"/><circle cx="186.0" cy="240.2" r="1.4"/><circle cx="179.6" cy="256.0" r="1.4"/><circle cx="175.5" cy="225.0" r="1.4"/><circle cx="184.6" cy="227.4" r="1.4"/><circle cx="187.6" cy="247.7" r="1.4"/><circle cx="169.6" cy="250.9" r="1.4"/><circle cx="178.2" cy="233.2" r="1.4"/><circle cx="187.0" cy="231.9" r="1.4"/><circle cx="180.8" cy="230.4" r="1.4"/><circle cx="176.9" cy="237.6" r="1.4"/><circle cx="168.1" cy="229.8" r="1.4"/><circle cx="172.2" cy="225.2" r="1.4"/><circle cx="180.8" cy="245.9" r="1.4"/><circle cx="170.0" cy="247.6" r="1.4"/><circle cx="180.6" cy="232.6" r="1.4"/><circle cx="169.6" cy="253.7" r="1.4"/><circle cx="178.3" cy="236.5" r="1.4"/><circle cx="175.4" cy="248.5" r="1.4"/><circle cx="179.9" cy="255.7" r="1.4"/><circle cx="173.6" cy="240.6" r="1.4"/><circle cx="187.3" cy="234.4" r="1.4"/><circle cx="185.8" cy="240.1" r="1.4"/><circle cx="172.2" cy="247.8" r="1.4"/><circle cx="187.4" cy="232.4" r="1.4"/><circle cx="173.7" cy="255.3" r="1.4"/><circle cx="177.7" cy="233.4" r="1.4"/><circle cx="176.1" cy="247.4" r="1.4"/><circle cx="181.2" cy="225.0" r="1.4"/><circle cx="172.0" cy="254.9" r="1.4"/><circle cx="174.4" cy="242.0" r="1.4"/><circle cx="181.6" cy="249.4" r="1.4"/><circle cx="184.0" cy="231.3" r="1.4"/><circle cx="177.9" cy="249.2" r="1.4"/><circle cx="187.6" cy="245.6" r="1.4"/><circle cx="184.4" cy="248.3" r="1.4"/><circle cx="171.9" cy="230.6" r="1.4"/><circle cx="173.5" cy="224.2" r="1.4"/><circle cx="177.7" cy="249.8" r="1.4"/><circle cx="172.0" cy="242.1" r="1.4"/><circle cx="181.2" cy="224.3" r="1.4"/><circle cx="170.4" cy="242.9" r="1.4"/><circle cx="171.8" cy="223.4" r="1.4"/><circle cx="170.3" cy="254.3" r="1.4"/><circle cx="168.6" cy="242.9" r="1.4"/><circle cx="186.1" cy="226.4" r="1.4"/><circle cx="182.6" cy="222.6" r="1.4"/><circle cx="186.8" cy="245.0" r="1.4"/><circle cx="171.2" cy="224.7" r="1.4"/><circle cx="182.9" cy="255.0" r="1.4"/><circle cx="181.2" cy="243.4" r="1.4"/><circle cx="175.1" cy="244.9" r="1.4"/><circle cx="170.8" cy="255.9" r="1.4"/><circle cx="173.1" cy="244.3" r="1.4"/><circle cx="187.3" cy="251.9" r="1.4"/><circle cx="187.5" cy="249.1" r="1.4"/><circle cx="174.8" cy="228.5" r="1.4"/><circle cx="184.5" cy="241.6" r="1.4"/><circle cx="168.3" cy="240.2" r="1.4"/><circle cx="175.1" cy="225.2" r="1.4"/><circle cx="171.3" cy="243.8" r="1.4"/><circle cx="186.0" cy="255.0" r="1.4"/><circle cx="175.9" cy="228.8" r="1.4"/><circle cx="183.3" cy="254.7" r="1.4"/><circle cx="168.0" cy="253.9" r="1.4"/><circle cx="186.5" cy="247.4" r="1.4"/><circle cx="182.9" cy="225.9" r="1.4"/><circle cx="174.4" cy="246.9" r="1.4"/><circle cx="187.3" cy="235.4" r="1.4"/><circle cx="172.8" cy="232.0" r="1.4"/><circle cx="173.9" cy="246.8" r="1.4"/><circle cx="167.4" cy="230.7" r="1.4"/><circle cx="186.5" cy="234.8" r="1.4"/><circle cx="187.0" cy="255.2" r="1.4"/><circle cx="172.2" cy="240.1" r="1.4"/><circle cx="187.3" cy="224.1" r="1.4"/><circle cx="175.4" cy="247.6" r="1.4"/><circle cx="176.3" cy="239.5" r="1.4"/><circle cx="186.7" cy="249.9" r="1.4"/><circle cx="184.1" cy="231.3" r="1.4"/><circle cx="184.5" cy="230.2" r="1.4"/><circle cx="180.0" cy="245.1" r="1.4"/><circle cx="174.0" cy="243.9" r="1.4"/><circle cx="183.6" cy="253.4" r="1.4"/><circle cx="171.4" cy="230.8" r="1.4"/><circle cx="172.5" cy="253.9" r="1.4"/><circle cx="168.0" cy="237.5" r="1.4"/><circle cx="174.1" cy="223.2" r="1.4"/><circle cx="185.8" cy="222.9" r="1.4"/><circle cx="172.8" cy="253.2" r="1.4"/><circle cx="169.3" cy="239.3" r="1.4"/><circle cx="182.1" cy="241.1" r="1.4"/><circle cx="170.0" cy="281.2" r="1.4"/><circle cx="173.6" cy="280.2" r="1.4"/><circle cx="180.9" cy="277.5" r="1.4"/><circle cx="185.3" cy="280.8" r="1.4"/><circle cx="187.2" cy="279.4" r="1.4"/><circle cx="169.0" cy="297.5" r="1.4"/><circle cx="176.9" cy="297.5" r="1.4"/><circle cx="174.8" cy="297.5" r="1.4"/><circle cx="174.7" cy="297.5" r="1.4"/><circle cx="172.6" cy="297.5" r="1.4"/><circle cx="178.3" cy="297.5" r="1.4"/><circle cx="181.0" cy="297.5" r="1.4"/><circle cx="173.9" cy="297.5" r="1.4"/><circle cx="185.1" cy="297.5" r="1.4"/><circle cx="168.3" cy="297.5" r="1.4"/><circle cx="176.1" cy="297.5" r="1.4"/><circle cx="186.7" cy="297.5" r="1.4"/><circle cx="170.9" cy="297.5" r="1.4"/><circle cx="174.6" cy="297.5" r="1.4"/><circle cx="186.1" cy="297.5" r="1.4"/><circle cx="181.4" cy="297.5" r="1.4"/><circle cx="167.7" cy="297.5" r="1.4"/><circle cx="172.6" cy="297.5" r="1.4"/><circle cx="176.4" cy="297.5" r="1.4"/><circle cx="186.5" cy="297.5" r="1.4"/><circle cx="172.8" cy="297.5" r="1.4"/><circle cx="173.2" cy="297.5" r="1.4"/><circle cx="174.0" cy="297.5" r="1.4"/><circle cx="179.4" cy="297.5" r="1.4"/><circle cx="171.6" cy="297.5" r="1.4"/><circle cx="178.2" cy="297.5" r="1.4"/><circle cx="177.1" cy="297.5" r="1.4"/><circle cx="184.5" cy="297.5" r="1.4"/><circle cx="185.4" cy="297.5" r="1.4"/><circle cx="176.2" cy="297.5" r="1.4"/><circle cx="186.3" cy="297.5" r="1.4"/><circle cx="169.0" cy="297.5" r="1.4"/><circle cx="175.1" cy="297.5" r="1.4"/><circle cx="169.4" cy="297.5" r="1.4"/><circle cx="188.2" cy="297.5" r="1.4"/><circle cx="170.0" cy="297.5" r="1.4"/><circle cx="171.3" cy="297.5" r="1.4"/><circle cx="175.3" cy="297.5" r="1.4"/><circle cx="178.4" cy="297.5" r="1.4"/><circle cx="181.1" cy="297.5" r="1.4"/><circle cx="182.2" cy="297.5" r="1.4"/><circle cx="185.4" cy="297.5" r="1.4"/><circle cx="180.7" cy="297.5" r="1.4"/><circle cx="181.9" cy="297.5" r="1.4"/><circle cx="174.1" cy="297.5" r="1.4"/><circle cx="180.3" cy="297.5" r="1.4"/><circle cx="181.0" cy="297.5" r="1.4"/><circle cx="175.8" cy="297.5" r="1.4"/><circle cx="181.9" cy="297.5" r="1.4"/><circle cx="170.0" cy="297.5" r="1.4"/><circle cx="177.8" cy="297.5" r="1.4"/><circle cx="187.2" cy="297.5" r="1.4"/><circle cx="175.4" cy="297.5" r="1.4"/><circle cx="174.2" cy="297.5" r="1.4"/><circle cx="186.3" cy="297.5" r="1.4"/><circle cx="186.2" cy="297.5" r="1.4"/><circle cx="169.3" cy="297.5" r="1.4"/><circle cx="179.9" cy="297.5" r="1.4"/><circle cx="172.3" cy="297.5" r="1.4"/><circle cx="172.0" cy="297.5" r="1.4"/><circle cx="178.5" cy="297.5" r="1.4"/><circle cx="172.0" cy="297.5" r="1.4"/><circle cx="187.9" cy="297.5" r="1.4"/><circle cx="170.9" cy="297.5" r="1.4"/><circle cx="169.7" cy="297.5" r="1.4"/><circle cx="187.9" cy="297.5" r="1.4"/><circle cx="178.4" cy="297.5" r="1.4"/><circle cx="168.3" cy="297.5" r="1.4"/><circle cx="187.2" cy="297.5" r="1.4"/><circle cx="183.5" cy="297.5" r="1.4"/><circle cx="172.4" cy="297.5" r="1.4"/><circle cx="177.9" cy="297.5" r="1.4"/><circle cx="183.6" cy="297.5" r="1.4"/><circle cx="186.7" cy="297.5" r="1.4"/><circle cx="177.5" cy="309.3" r="1.4"/><circle cx="180.9" cy="309.3" r="1.4"/><circle cx="178.2" cy="309.3" r="1.4"/><circle cx="180.1" cy="309.3" r="1.4"/><circle cx="174.0" cy="309.3" r="1.4"/><circle cx="170.3" cy="321.2" r="1.4"/><circle cx="181.5" cy="321.2" r="1.4"/><circle cx="167.6" cy="321.2" r="1.4"/><circle cx="182.3" cy="321.2" r="1.4"/><circle cx="171.4" cy="321.2" r="1.4"/><circle cx="168.1" cy="321.2" r="1.4"/><circle cx="186.7" cy="321.2" r="1.4"/><circle cx="171.9" cy="321.2" r="1.4"/><circle cx="186.8" cy="321.2" r="1.4"/><circle cx="185.4" cy="321.2" r="1.4"/><circle cx="185.9" cy="321.2" r="1.4"/><circle cx="170.2" cy="321.2" r="1.4"/><circle cx="176.6" cy="321.2" r="1.4"/><circle cx="169.3" cy="321.2" r="1.4"/><circle cx="186.7" cy="321.2" r="1.4"/><circle cx="184.9" cy="321.2" r="1.4"/><circle cx="180.4" cy="321.2" r="1.4"/><circle cx="176.8" cy="321.2" r="1.4"/><circle cx="174.4" cy="321.2" r="1.4"/><circle cx="184.5" cy="321.2" r="1.4"/><circle cx="177.3" cy="321.2" r="1.4"/><circle cx="180.4" cy="321.2" r="1.4"/><circle cx="170.3" cy="321.2" r="1.4"/><circle cx="171.9" cy="321.2" r="1.4"/><circle cx="168.5" cy="321.2" r="1.4"/><circle cx="182.2" cy="321.2" r="1.4"/><circle cx="178.9" cy="321.2" r="1.4"/><circle cx="170.3" cy="321.2" r="1.4"/><circle cx="185.5" cy="321.2" r="1.4"/><circle cx="172.9" cy="321.2" r="1.4"/><circle cx="185.4" cy="333.4" r="1.4"/><circle cx="177.6" cy="333.4" r="1.4"/><circle cx="167.6" cy="333.4" r="1.4"/><circle cx="186.3" cy="333.4" r="1.4"/><circle cx="177.3" cy="333.4" r="1.4"/><circle cx="185.5" cy="333.4" r="1.4"/><circle cx="172.9" cy="333.4" r="1.4"/><circle cx="171.2" cy="333.4" r="1.4"/><circle cx="184.7" cy="333.4" r="1.4"/><circle cx="175.0" cy="333.4" r="1.4"/><circle cx="170.7" cy="333.4" r="1.4"/><circle cx="175.1" cy="333.4" r="1.4"/><circle cx="179.7" cy="333.4" r="1.4"/><circle cx="167.4" cy="333.4" r="1.4"/><circle cx="178.2" cy="333.4" r="1.4"/><circle cx="176.6" cy="333.4" r="1.4"/><circle cx="178.1" cy="333.4" r="1.4"/><circle cx="169.8" cy="333.4" r="1.4"/><circle cx="170.7" cy="345.6" r="1.4"/><circle cx="184.6" cy="345.6" r="1.4"/><circle cx="186.9" cy="345.6" r="1.4"/><circle cx="175.4" cy="345.6" r="1.4"/><circle cx="176.1" cy="345.6" r="1.4"/><circle cx="186.9" cy="390.9" r="1.4"/><circle cx="172.0" cy="396.7" r="1.4"/><circle cx="171.2" cy="385.0" r="1.4"/><circle cx="175.5" cy="401.1" r="1.4"/><circle cx="171.5" cy="386.8" r="1.4"/><circle cx="186.4" cy="401.5" r="1.4"/><circle cx="177.6" cy="383.7" r="1.4"/><circle cx="184.1" cy="396.1" r="1.4"/><circle cx="167.9" cy="403.0" r="1.4"/><circle cx="181.8" cy="390.7" r="1.4"/><circle cx="187.7" cy="394.4" r="1.4"/><circle cx="182.5" cy="393.8" r="1.4"/><circle cx="185.0" cy="394.0" r="1.4"/><circle cx="168.5" cy="399.4" r="1.4"/><circle cx="167.3" cy="388.8" r="1.4"/><circle cx="183.8" cy="382.9" r="1.4"/><circle cx="172.6" cy="387.6" r="1.4"/><circle cx="188.1" cy="389.1" r="1.4"/><circle cx="172.1" cy="395.9" r="1.4"/><circle cx="187.1" cy="375.8" r="1.4"/><circle cx="173.6" cy="395.0" r="1.4"/><circle cx="173.2" cy="394.6" r="1.4"/><circle cx="187.0" cy="378.6" r="1.4"/><circle cx="183.1" cy="388.7" r="1.4"/><circle cx="183.4" cy="404.4" r="1.4"/><circle cx="184.4" cy="396.2" r="1.4"/><circle cx="180.8" cy="375.0" r="1.4"/><circle cx="170.9" cy="384.6" r="1.4"/><circle cx="170.4" cy="392.6" r="1.4"/><circle cx="174.1" cy="381.4" r="1.4"/><circle cx="176.4" cy="391.5" r="1.4"/><circle cx="182.2" cy="384.5" r="1.4"/><circle cx="181.3" cy="374.9" r="1.4"/><circle cx="170.9" cy="384.3" r="1.4"/><circle cx="174.0" cy="387.4" r="1.4"/><circle cx="187.3" cy="403.9" r="1.4"/><circle cx="185.5" cy="405.2" r="1.4"/><circle cx="183.9" cy="393.9" r="1.4"/><circle cx="184.9" cy="374.9" r="1.4"/><circle cx="177.1" cy="391.9" r="1.4"/><circle cx="177.0" cy="389.7" r="1.4"/><circle cx="182.5" cy="403.6" r="1.4"/><circle cx="174.8" cy="386.2" r="1.4"/><circle cx="185.8" cy="388.2" r="1.4"/><circle cx="186.2" cy="382.6" r="1.4"/><circle cx="180.2" cy="388.5" r="1.4"/><circle cx="177.7" cy="375.8" r="1.4"/><circle cx="180.7" cy="384.9" r="1.4"/><circle cx="173.8" cy="396.7" r="1.4"/><circle cx="180.6" cy="388.5" r="1.4"/><circle cx="185.8" cy="395.3" r="1.4"/><circle cx="174.5" cy="392.6" r="1.4"/><circle cx="184.8" cy="390.1" r="1.4"/><circle cx="186.4" cy="396.4" r="1.4"/><circle cx="179.8" cy="374.9" r="1.4"/><circle cx="168.7" cy="389.8" r="1.4"/><circle cx="176.6" cy="374.9" r="1.4"/><circle cx="172.0" cy="388.2" r="1.4"/><circle cx="171.7" cy="405.8" r="1.4"/><circle cx="181.1" cy="394.1" r="1.4"/><circle cx="185.3" cy="395.0" r="1.4"/><circle cx="176.9" cy="397.5" r="1.4"/><circle cx="179.2" cy="385.7" r="1.4"/><circle cx="188.2" cy="389.0" r="1.4"/><circle cx="171.1" cy="391.8" r="1.4"/><circle cx="182.9" cy="381.1" r="1.4"/><circle cx="169.4" cy="386.9" r="1.4"/><circle cx="168.5" cy="399.2" r="1.4"/><circle cx="175.0" cy="378.4" r="1.4"/><circle cx="170.6" cy="393.9" r="1.4"/><circle cx="180.6" cy="382.8" r="1.4"/><circle cx="174.1" cy="386.0" r="1.4"/><circle cx="188.0" cy="409.2" r="1.4"/><circle cx="177.6" cy="391.5" r="1.4"/><circle cx="183.0" cy="374.9" r="1.4"/><circle cx="179.9" cy="388.6" r="1.4"/><circle cx="175.2" cy="381.9" r="1.4"/><circle cx="170.7" cy="403.3" r="1.4"/><circle cx="167.7" cy="398.5" r="1.4"/><circle cx="169.7" cy="401.8" r="1.4"/><circle cx="179.2" cy="387.3" r="1.4"/><circle cx="177.9" cy="388.8" r="1.4"/><circle cx="186.1" cy="382.7" r="1.4"/><circle cx="182.2" cy="398.9" r="1.4"/><circle cx="171.8" cy="393.7" r="1.4"/><circle cx="169.4" cy="417.6" r="1.4"/><circle cx="175.7" cy="423.0" r="1.4"/><circle cx="180.9" cy="411.0" r="1.4"/><circle cx="184.0" cy="421.6" r="1.4"/><circle cx="171.5" cy="409.6" r="1.4"/><circle cx="173.6" cy="415.0" r="1.4"/><circle cx="181.9" cy="405.6" r="1.4"/><circle cx="324.4" cy="397.6" r="1.4"/><circle cx="365.6" cy="389.6" r="1.4"/><circle cx="557.6" cy="429.2" r="1.4"/><circle cx="557.6" cy="431.9" r="1.4"/><circle cx="557.6" cy="432.3" r="1.4"/><circle cx="557.6" cy="415.7" r="1.4"/><circle cx="557.6" cy="415.5" r="1.4"/><circle cx="557.6" cy="416.2" r="1.4"/><circle cx="557.6" cy="415.3" r="1.4"/><circle cx="557.6" cy="421.1" r="1.4"/><circle cx="557.6" cy="430.9" r="1.4"/><circle cx="557.6" cy="427.2" r="1.4"/><circle cx="557.6" cy="426.0" r="1.4"/><circle cx="557.6" cy="431.3" r="1.4"/><circle cx="557.6" cy="422.5" r="1.4"/></g><g fill="#3f86f0" fill-opacity="0.9"><circle cx="190.6" cy="256.4" r="1.4"/><circle cx="194.7" cy="240.9" r="1.4"/><circle cx="196.0" cy="230.4" r="1.4"/><circle cx="195.1" cy="274.2" r="1.4"/><circle cx="197.0" cy="263.8" r="1.4"/><circle cx="194.1" cy="259.0" r="1.4"/><circle cx="195.9" cy="269.5" r="1.4"/><circle cx="190.8" cy="266.7" r="1.4"/><circle cx="189.8" cy="228.2" r="1.4"/><circle cx="194.2" cy="261.8" r="1.4"/><circle cx="192.3" cy="221.7" r="1.4"/><circle cx="193.5" cy="267.5" r="1.4"/><circle cx="196.6" cy="242.1" r="1.4"/><circle cx="198.6" cy="275.3" r="1.4"/><circle cx="193.2" cy="232.1" r="1.4"/><circle cx="197.0" cy="226.4" r="1.4"/><circle cx="188.6" cy="263.8" r="1.4"/><circle cx="189.4" cy="270.1" r="1.4"/><circle cx="198.4" cy="246.3" r="1.4"/><circle cx="197.9" cy="259.1" r="1.4"/><circle cx="197.3" cy="254.4" r="1.4"/><circle cx="190.9" cy="234.6" r="1.4"/><circle cx="198.1" cy="275.1" r="1.4"/><circle cx="194.4" cy="244.1" r="1.4"/><circle cx="190.5" cy="259.3" r="1.4"/><circle cx="189.7" cy="269.2" r="1.4"/><circle cx="190.9" cy="245.4" r="1.4"/><circle cx="195.0" cy="269.2" r="1.4"/><circle cx="188.3" cy="261.8" r="1.4"/><circle cx="195.3" cy="270.3" r="1.4"/><circle cx="191.5" cy="269.2" r="1.4"/><circle cx="196.5" cy="248.5" r="1.4"/><circle cx="188.9" cy="275.4" r="1.4"/><circle cx="192.3" cy="248.3" r="1.4"/><circle cx="194.9" cy="276.0" r="1.4"/><circle cx="189.9" cy="239.6" r="1.4"/><circle cx="192.5" cy="264.4" r="1.4"/><circle cx="191.4" cy="224.0" r="1.4"/><circle cx="191.5" cy="247.3" r="1.4"/><circle cx="191.9" cy="256.4" r="1.4"/><circle cx="197.2" cy="221.4" r="1.4"/><circle cx="192.0" cy="269.6" r="1.4"/><circle cx="195.8" cy="269.2" r="1.4"/><circle cx="188.3" cy="227.1" r="1.4"/><circle cx="192.6" cy="232.0" r="1.4"/><circle cx="192.4" cy="228.3" r="1.4"/><circle cx="193.0" cy="271.7" r="1.4"/><circle cx="188.4" cy="248.2" r="1.4"/><circle cx="194.9" cy="226.6" r="1.4"/><circle cx="189.1" cy="244.0" r="1.4"/><circle cx="192.1" cy="251.1" r="1.4"/><circle cx="189.7" cy="264.4" r="1.4"/><circle cx="193.6" cy="225.7" r="1.4"/><circle cx="189.3" cy="251.9" r="1.4"/><circle cx="196.6" cy="223.2" r="1.4"/><circle cx="190.3" cy="273.9" r="1.4"/><circle cx="198.1" cy="222.7" r="1.4"/><circle cx="193.2" cy="278.3" r="1.4"/><circle cx="197.9" cy="258.1" r="1.4"/><circle cx="197.6" cy="244.1" r="1.4"/><circle cx="196.8" cy="271.8" r="1.4"/><circle cx="196.4" cy="268.1" r="1.4"/><circle cx="192.4" cy="230.5" r="1.4"/><circle cx="196.9" cy="270.5" r="1.4"/><circle cx="190.5" cy="257.4" r="1.4"/><circle cx="193.6" cy="258.4" r="1.4"/><circle cx="189.5" cy="266.6" r="1.4"/><circle cx="195.8" cy="227.4" r="1.4"/><circle cx="188.6" cy="247.6" r="1.4"/><circle cx="196.1" cy="279.2" r="1.4"/><circle cx="197.0" cy="274.4" r="1.4"/><circle cx="194.5" cy="248.3" r="1.4"/><circle cx="194.8" cy="263.0" r="1.4"/><circle cx="192.6" cy="246.4" r="1.4"/><circle cx="192.6" cy="241.8" r="1.4"/><circle cx="192.9" cy="255.1" r="1.4"/><circle cx="188.4" cy="244.2" r="1.4"/><circle cx="193.3" cy="267.3" r="1.4"/><circle cx="196.2" cy="234.5" r="1.4"/><circle cx="193.0" cy="270.7" r="1.4"/><circle cx="193.1" cy="275.0" r="1.4"/><circle cx="189.5" cy="255.5" r="1.4"/><circle cx="189.2" cy="254.8" r="1.4"/><circle cx="193.5" cy="279.0" r="1.4"/><circle cx="194.9" cy="276.5" r="1.4"/><circle cx="195.9" cy="234.6" r="1.4"/><circle cx="193.5" cy="278.2" r="1.4"/><circle cx="193.5" cy="258.7" r="1.4"/><circle cx="198.1" cy="273.3" r="1.4"/><circle cx="197.2" cy="221.4" r="1.4"/><circle cx="198.9" cy="225.4" r="1.4"/><circle cx="191.0" cy="221.6" r="1.4"/><circle cx="195.4" cy="222.2" r="1.4"/><circle cx="201.6" cy="240.2" r="1.4"/><circle cx="199.7" cy="222.8" r="1.4"/><circle cx="189.2" cy="236.0" r="1.4"/><circle cx="199.3" cy="240.4" r="1.4"/><circle cx="201.3" cy="237.7" r="1.4"/><circle cx="200.1" cy="240.7" r="1.4"/><circle cx="195.5" cy="223.0" r="1.4"/><circle cx="191.2" cy="238.0" r="1.4"/><circle cx="195.6" cy="236.7" r="1.4"/><circle cx="188.7" cy="239.8" r="1.4"/><circle cx="190.6" cy="222.6" r="1.4"/><circle cx="198.1" cy="223.6" r="1.4"/><circle cx="190.7" cy="226.1" r="1.4"/><circle cx="189.9" cy="231.9" r="1.4"/><circle cx="197.5" cy="235.8" r="1.4"/><circle cx="201.0" cy="231.3" r="1.4"/><circle cx="196.7" cy="223.9" r="1.4"/><circle cx="189.7" cy="221.4" r="1.4"/><circle cx="197.4" cy="235.0" r="1.4"/><circle cx="199.9" cy="237.9" r="1.4"/><circle cx="202.7" cy="230.8" r="1.4"/><circle cx="193.5" cy="226.6" r="1.4"/><circle cx="194.7" cy="240.0" r="1.4"/><circle cx="199.1" cy="242.9" r="1.4"/><circle cx="200.2" cy="238.2" r="1.4"/><circle cx="197.6" cy="221.6" r="1.4"/><circle cx="196.8" cy="228.9" r="1.4"/><circle cx="192.8" cy="243.9" r="1.4"/><circle cx="188.7" cy="240.6" r="1.4"/><circle cx="197.2" cy="234.1" r="1.4"/><circle cx="195.7" cy="223.6" r="1.4"/><circle cx="190.1" cy="238.8" r="1.4"/><circle cx="197.8" cy="243.5" r="1.4"/><circle cx="188.2" cy="235.9" r="1.4"/><circle cx="189.8" cy="235.8" r="1.4"/><circle cx="191.5" cy="230.7" r="1.4"/><circle cx="196.8" cy="239.3" r="1.4"/><circle cx="197.3" cy="233.2" r="1.4"/><circle cx="190.2" cy="222.6" r="1.4"/><circle cx="191.8" cy="240.6" r="1.4"/><circle cx="189.6" cy="229.4" r="1.4"/><circle cx="200.9" cy="226.2" r="1.4"/><circle cx="194.1" cy="238.0" r="1.4"/><circle cx="188.4" cy="229.3" r="1.4"/><circle cx="196.4" cy="236.0" r="1.4"/><circle cx="197.6" cy="233.9" r="1.4"/><circle cx="201.9" cy="227.3" r="1.4"/><circle cx="194.5" cy="264.6" r="1.4"/><circle cx="192.7" cy="271.5" r="1.4"/><circle cx="195.8" cy="277.0" r="1.4"/><circle cx="192.9" cy="266.9" r="1.4"/><circle cx="192.5" cy="271.2" r="1.4"/><circle cx="200.2" cy="278.8" r="1.4"/><circle cx="194.0" cy="270.1" r="1.4"/><circle cx="196.6" cy="269.5" r="1.4"/><circle cx="199.2" cy="278.2" r="1.4"/><circle cx="195.0" cy="275.9" r="1.4"/><circle cx="192.8" cy="264.8" r="1.4"/><circle cx="198.9" cy="268.1" r="1.4"/><circle cx="192.4" cy="265.7" r="1.4"/><circle cx="198.6" cy="272.8" r="1.4"/><circle cx="198.6" cy="273.0" r="1.4"/><circle cx="194.3" cy="279.5" r="1.4"/><circle cx="194.3" cy="280.8" r="1.4"/><circle cx="195.2" cy="267.4" r="1.4"/><circle cx="198.2" cy="265.6" r="1.4"/><circle cx="198.3" cy="276.5" r="1.4"/><circle cx="197.0" cy="273.3" r="1.4"/><circle cx="199.0" cy="271.7" r="1.4"/><circle cx="194.6" cy="269.5" r="1.4"/><circle cx="200.4" cy="277.4" r="1.4"/><circle cx="199.7" cy="281.2" r="1.4"/><circle cx="194.6" cy="277.1" r="1.4"/><circle cx="198.6" cy="263.8" r="1.4"/><circle cx="198.6" cy="275.4" r="1.4"/><circle cx="199.7" cy="275.3" r="1.4"/><circle cx="194.4" cy="264.5" r="1.4"/><circle cx="215.1" cy="254.8" r="1.4"/><circle cx="215.0" cy="242.1" r="1.4"/><circle cx="214.1" cy="253.5" r="1.4"/><circle cx="216.9" cy="247.0" r="1.4"/><circle cx="214.6" cy="258.6" r="1.4"/><circle cx="217.2" cy="269.1" r="1.4"/><circle cx="216.8" cy="278.4" r="1.4"/><circle cx="218.1" cy="244.9" r="1.4"/><circle cx="216.6" cy="277.2" r="1.4"/><circle cx="216.6" cy="244.2" r="1.4"/><circle cx="216.0" cy="280.3" r="1.4"/><circle cx="217.0" cy="279.8" r="1.4"/><circle cx="215.8" cy="253.5" r="1.4"/><circle cx="214.8" cy="251.9" r="1.4"/><circle cx="217.9" cy="266.9" r="1.4"/><circle cx="217.1" cy="248.6" r="1.4"/><circle cx="217.5" cy="278.8" r="1.4"/><circle cx="214.0" cy="246.6" r="1.4"/><circle cx="219.0" cy="277.2" r="1.4"/><circle cx="214.9" cy="273.2" r="1.4"/><circle cx="216.7" cy="247.4" r="1.4"/><circle cx="216.6" cy="248.9" r="1.4"/><circle cx="214.9" cy="256.1" r="1.4"/><circle cx="214.7" cy="269.9" r="1.4"/><circle cx="216.9" cy="251.1" r="1.4"/><circle cx="207.6" cy="225.1" r="1.4"/><circle cx="212.7" cy="223.9" r="1.4"/><circle cx="209.9" cy="222.6" r="1.4"/><circle cx="211.1" cy="224.2" r="1.4"/><circle cx="212.7" cy="235.0" r="1.4"/><circle cx="241.0" cy="250.0" r="1.4"/><circle cx="225.8" cy="221.9" r="1.4"/><circle cx="200.0" cy="234.7" r="1.4"/><circle cx="232.6" cy="229.4" r="1.4"/><circle cx="213.9" cy="226.3" r="1.4"/><circle cx="208.2" cy="238.8" r="1.4"/><circle cx="236.5" cy="244.2" r="1.4"/><circle cx="206.1" cy="236.0" r="1.4"/><circle cx="198.7" cy="228.6" r="1.4"/><circle cx="241.6" cy="245.1" r="1.4"/><circle cx="198.8" cy="238.3" r="1.4"/><circle cx="233.6" cy="222.2" r="1.4"/><circle cx="206.7" cy="234.8" r="1.4"/><circle cx="235.2" cy="221.7" r="1.4"/><circle cx="210.1" cy="232.5" r="1.4"/><circle cx="208.1" cy="225.4" r="1.4"/><circle cx="229.4" cy="228.3" r="1.4"/><circle cx="226.6" cy="221.3" r="1.4"/><circle cx="202.2" cy="226.6" r="1.4"/><circle cx="233.2" cy="243.3" r="1.4"/><circle cx="226.2" cy="230.4" r="1.4"/><circle cx="216.0" cy="233.0" r="1.4"/><circle cx="237.7" cy="247.7" r="1.4"/><circle cx="199.8" cy="237.1" r="1.4"/><circle cx="207.7" cy="223.8" r="1.4"/><circle cx="220.6" cy="252.8" r="1.4"/><circle cx="215.3" cy="229.2" r="1.4"/><circle cx="218.9" cy="228.4" r="1.4"/><circle cx="222.0" cy="221.9" r="1.4"/><circle cx="227.0" cy="245.8" r="1.4"/><circle cx="213.9" cy="225.2" r="1.4"/><circle cx="235.7" cy="228.8" r="1.4"/><circle cx="227.7" cy="221.7" r="1.4"/><circle cx="217.9" cy="230.2" r="1.4"/><circle cx="232.6" cy="227.9" r="1.4"/><circle cx="218.9" cy="224.9" r="1.4"/><circle cx="237.5" cy="221.9" r="1.4"/><circle cx="211.9" cy="230.8" r="1.4"/><circle cx="229.5" cy="225.9" r="1.4"/><circle cx="205.5" cy="228.3" r="1.4"/><circle cx="209.5" cy="229.5" r="1.4"/><circle cx="205.7" cy="237.1" r="1.4"/><circle cx="213.0" cy="236.1" r="1.4"/><circle cx="230.6" cy="258.4" r="1.4"/><circle cx="203.1" cy="227.8" r="1.4"/><circle cx="215.5" cy="222.8" r="1.4"/><circle cx="241.8" cy="227.9" r="1.4"/><circle cx="217.7" cy="244.2" r="1.4"/><circle cx="207.3" cy="225.7" r="1.4"/><circle cx="207.7" cy="226.5" r="1.4"/><circle cx="215.7" cy="235.7" r="1.4"/><circle cx="233.4" cy="224.3" r="1.4"/><circle cx="229.1" cy="242.1" r="1.4"/><circle cx="219.0" cy="221.3" r="1.4"/><circle cx="204.9" cy="233.1" r="1.4"/><circle cx="231.2" cy="230.3" r="1.4"/><circle cx="238.5" cy="238.6" r="1.4"/><circle cx="231.5" cy="229.4" r="1.4"/><circle cx="217.1" cy="224.4" r="1.4"/><circle cx="237.3" cy="244.6" r="1.4"/><circle cx="232.6" cy="230.1" r="1.4"/><circle cx="228.5" cy="248.6" r="1.4"/><circle cx="226.8" cy="233.4" r="1.4"/><circle cx="226.2" cy="224.8" r="1.4"/><circle cx="202.9" cy="243.7" r="1.4"/><circle cx="230.0" cy="233.7" r="1.4"/><circle cx="226.3" cy="221.2" r="1.4"/><circle cx="218.6" cy="236.7" r="1.4"/><circle cx="225.9" cy="239.8" r="1.4"/><circle cx="239.5" cy="233.1" r="1.4"/><circle cx="206.7" cy="235.6" r="1.4"/><circle cx="215.7" cy="242.3" r="1.4"/><circle cx="220.1" cy="225.3" r="1.4"/><circle cx="222.5" cy="221.9" r="1.4"/><circle cx="205.7" cy="228.2" r="1.4"/><circle cx="221.4" cy="255.5" r="1.4"/><circle cx="203.1" cy="237.6" r="1.4"/><circle cx="230.1" cy="229.5" r="1.4"/><circle cx="221.1" cy="239.0" r="1.4"/><circle cx="221.5" cy="242.5" r="1.4"/><circle cx="216.7" cy="230.8" r="1.4"/><circle cx="228.7" cy="224.5" r="1.4"/><circle cx="215.9" cy="221.8" r="1.4"/><circle cx="241.9" cy="228.7" r="1.4"/><circle cx="214.3" cy="232.3" r="1.4"/><circle cx="247.5" cy="279.4" r="1.4"/><circle cx="248.4" cy="257.1" r="1.4"/><circle cx="260.6" cy="260.8" r="1.4"/><circle cx="241.6" cy="267.8" r="1.4"/><circle cx="262.5" cy="228.5" r="1.4"/><circle cx="253.1" cy="268.1" r="1.4"/><circle cx="265.2" cy="258.6" r="1.4"/><circle cx="239.3" cy="273.1" r="1.4"/><circle cx="264.1" cy="235.7" r="1.4"/><circle cx="257.8" cy="254.4" r="1.4"/><circle cx="254.7" cy="267.7" r="1.4"/><circle cx="272.3" cy="260.8" r="1.4"/><circle cx="258.0" cy="235.2" r="1.4"/><circle cx="265.8" cy="254.4" r="1.4"/><circle cx="242.9" cy="250.0" r="1.4"/><circle cx="235.5" cy="234.4" r="1.4"/><circle cx="245.6" cy="233.4" r="1.4"/><circle cx="241.7" cy="259.5" r="1.4"/><circle cx="241.1" cy="256.7" r="1.4"/><circle cx="238.2" cy="280.0" r="1.4"/><circle cx="261.7" cy="264.7" r="1.4"/><circle cx="240.8" cy="263.6" r="1.4"/><circle cx="251.0" cy="256.6" r="1.4"/><circle cx="258.0" cy="243.9" r="1.4"/><circle cx="245.9" cy="229.1" r="1.4"/><circle cx="267.5" cy="277.0" r="1.4"/><circle cx="266.3" cy="230.4" r="1.4"/><circle cx="264.4" cy="272.4" r="1.4"/><circle cx="266.5" cy="245.4" r="1.4"/><circle cx="230.7" cy="279.5" r="1.4"/><circle cx="271.8" cy="244.1" r="1.4"/><circle cx="241.0" cy="274.6" r="1.4"/><circle cx="236.3" cy="267.3" r="1.4"/><circle cx="264.1" cy="261.1" r="1.4"/><circle cx="236.7" cy="230.5" r="1.4"/><circle cx="264.7" cy="270.9" r="1.4"/><circle cx="269.1" cy="246.7" r="1.4"/><circle cx="264.3" cy="243.4" r="1.4"/><circle cx="269.2" cy="236.9" r="1.4"/><circle cx="266.8" cy="269.3" r="1.4"/><circle cx="260.4" cy="251.0" r="1.4"/><circle cx="262.6" cy="256.1" r="1.4"/><circle cx="268.7" cy="249.7" r="1.4"/><circle cx="241.6" cy="267.3" r="1.4"/><circle cx="236.1" cy="253.1" r="1.4"/><circle cx="284.3" cy="228.6" r="1.4"/><circle cx="288.5" cy="230.6" r="1.4"/><circle cx="293.7" cy="234.6" r="1.4"/><circle cx="296.9" cy="237.3" r="1.4"/><circle cx="294.8" cy="245.3" r="1.4"/><circle cx="301.1" cy="262.7" r="1.4"/><circle cx="305.2" cy="270.8" r="1.4"/><circle cx="305.2" cy="274.8" r="1.4"/><circle cx="299.0" cy="269.4" r="1.4"/><circle cx="278.1" cy="225.2" r="1.4"/><circle cx="234.2" cy="280.8" r="1.4"/><circle cx="246.7" cy="280.2" r="1.4"/><circle cx="265.5" cy="280.8" r="1.4"/><circle cx="192.2" cy="297.5" r="1.4"/><circle cx="190.5" cy="297.5" r="1.4"/><circle cx="190.5" cy="297.5" r="1.4"/><circle cx="199.8" cy="297.5" r="1.4"/><circle cx="197.5" cy="297.5" r="1.4"/><circle cx="201.4" cy="297.5" r="1.4"/><circle cx="194.9" cy="297.5" r="1.4"/><circle cx="192.1" cy="297.5" r="1.4"/><circle cx="189.4" cy="297.5" r="1.4"/><circle cx="189.5" cy="297.5" r="1.4"/><circle cx="200.9" cy="297.5" r="1.4"/><circle cx="194.0" cy="297.5" r="1.4"/><circle cx="196.8" cy="297.5" r="1.4"/><circle cx="195.9" cy="297.5" r="1.4"/><circle cx="196.2" cy="297.5" r="1.4"/><circle cx="189.1" cy="297.5" r="1.4"/><circle cx="197.7" cy="297.5" r="1.4"/><circle cx="196.5" cy="297.5" r="1.4"/><circle cx="198.0" cy="297.5" r="1.4"/><circle cx="201.3" cy="297.5" r="1.4"/><circle cx="200.2" cy="297.5" r="1.4"/><circle cx="192.7" cy="297.5" r="1.4"/><circle cx="191.7" cy="297.5" r="1.4"/><circle cx="197.6" cy="297.5" r="1.4"/><circle cx="200.1" cy="297.5" r="1.4"/><circle cx="188.7" cy="297.5" r="1.4"/><circle cx="192.1" cy="297.5" r="1.4"/><circle cx="198.6" cy="297.5" r="1.4"/><circle cx="200.8" cy="297.5" r="1.4"/><circle cx="189.5" cy="297.5" r="1.4"/><circle cx="201.1" cy="297.5" r="1.4"/><circle cx="189.8" cy="297.5" r="1.4"/><circle cx="194.2" cy="297.5" r="1.4"/><circle cx="194.8" cy="297.5" r="1.4"/><circle cx="188.6" cy="297.5" r="1.4"/><circle cx="194.1" cy="297.5" r="1.4"/><circle cx="189.9" cy="297.5" r="1.4"/><circle cx="188.3" cy="297.5" r="1.4"/><circle cx="192.6" cy="297.5" r="1.4"/><circle cx="191.3" cy="297.5" r="1.4"/><circle cx="196.2" cy="297.5" r="1.4"/><circle cx="197.6" cy="297.5" r="1.4"/><circle cx="191.9" cy="309.3" r="1.4"/><circle cx="271.6" cy="309.3" r="1.4"/><circle cx="219.5" cy="309.3" r="1.4"/><circle cx="197.1" cy="309.3" r="1.4"/><circle cx="241.1" cy="309.3" r="1.4"/><circle cx="254.0" cy="309.3" r="1.4"/><circle cx="201.3" cy="309.3" r="1.4"/><circle cx="238.1" cy="309.3" r="1.4"/><circle cx="217.0" cy="309.3" r="1.4"/><circle cx="231.6" cy="309.3" r="1.4"/><circle cx="189.9" cy="309.3" r="1.4"/><circle cx="191.0" cy="309.3" r="1.4"/><circle cx="271.0" cy="309.3" r="1.4"/><circle cx="260.6" cy="309.3" r="1.4"/><circle cx="228.9" cy="309.3" r="1.4"/><circle cx="235.6" cy="309.3" r="1.4"/><circle cx="210.1" cy="309.3" r="1.4"/><circle cx="253.3" cy="309.3" r="1.4"/><circle cx="223.8" cy="309.3" r="1.4"/><circle cx="267.3" cy="309.3" r="1.4"/><circle cx="252.3" cy="309.3" r="1.4"/><circle cx="256.7" cy="309.3" r="1.4"/><circle cx="268.7" cy="309.3" r="1.4"/><circle cx="209.4" cy="309.3" r="1.4"/><circle cx="191.4" cy="309.3" r="1.4"/><circle cx="205.0" cy="309.3" r="1.4"/><circle cx="203.3" cy="309.3" r="1.4"/><circle cx="195.2" cy="309.3" r="1.4"/><circle cx="192.5" cy="309.3" r="1.4"/><circle cx="234.8" cy="309.3" r="1.4"/><circle cx="261.0" cy="309.3" r="1.4"/><circle cx="226.5" cy="309.3" r="1.4"/><circle cx="267.4" cy="309.3" r="1.4"/><circle cx="264.3" cy="309.3" r="1.4"/><circle cx="193.6" cy="309.3" r="1.4"/><circle cx="238.2" cy="309.3" r="1.4"/><circle cx="221.4" cy="309.3" r="1.4"/><circle cx="198.2" cy="309.3" r="1.4"/><circle cx="268.4" cy="309.3" r="1.4"/><circle cx="209.7" cy="309.3" r="1.4"/><circle cx="202.0" cy="321.2" r="1.4"/><circle cx="193.4" cy="321.2" r="1.4"/><circle cx="197.3" cy="321.2" r="1.4"/><circle cx="216.3" cy="321.2" r="1.4"/><circle cx="199.4" cy="321.2" r="1.4"/><circle cx="193.8" cy="321.2" r="1.4"/><circle cx="204.6" cy="321.2" r="1.4"/><circle cx="198.8" cy="321.2" r="1.4"/><circle cx="218.4" cy="321.2" r="1.4"/><circle cx="192.0" cy="321.2" r="1.4"/><circle cx="220.9" cy="321.2" r="1.4"/><circle cx="190.1" cy="321.2" r="1.4"/><circle cx="218.1" cy="321.2" r="1.4"/><circle cx="210.5" cy="321.2" r="1.4"/><circle cx="195.3" cy="321.2" r="1.4"/><circle cx="204.2" cy="321.2" r="1.4"/><circle cx="197.8" cy="321.2" r="1.4"/><circle cx="196.8" cy="321.2" r="1.4"/><circle cx="194.9" cy="321.2" r="1.4"/><circle cx="200.4" cy="321.2" r="1.4"/><circle cx="221.3" cy="321.2" r="1.4"/><circle cx="221.6" cy="321.2" r="1.4"/><circle cx="219.1" cy="321.2" r="1.4"/><circle cx="191.5" cy="321.2" r="1.4"/><circle cx="197.9" cy="321.2" r="1.4"/><circle cx="218.2" cy="321.2" r="1.4"/><circle cx="190.1" cy="321.2" r="1.4"/><circle cx="212.5" cy="321.2" r="1.4"/><circle cx="198.0" cy="321.2" r="1.4"/><circle cx="220.9" cy="321.2" r="1.4"/><circle cx="237.5" cy="333.4" r="1.4"/><circle cx="244.5" cy="333.4" r="1.4"/><circle cx="247.9" cy="333.4" r="1.4"/><circle cx="210.3" cy="333.4" r="1.4"/><circle cx="237.3" cy="333.4" r="1.4"/><circle cx="214.5" cy="333.4" r="1.4"/><circle cx="240.0" cy="333.4" r="1.4"/><circle cx="192.4" cy="333.4" r="1.4"/><circle cx="248.4" cy="333.4" r="1.4"/><circle cx="254.0" cy="333.4" r="1.4"/><circle cx="222.3" cy="333.4" r="1.4"/><circle cx="223.6" cy="333.4" r="1.4"/><circle cx="224.8" cy="333.4" r="1.4"/><circle cx="225.3" cy="333.4" r="1.4"/><circle cx="189.6" cy="333.4" r="1.4"/><circle cx="254.9" cy="333.4" r="1.4"/><circle cx="203.6" cy="333.4" r="1.4"/><circle cx="200.8" cy="333.4" r="1.4"/><circle cx="195.3" cy="333.4" r="1.4"/><circle cx="205.5" cy="333.4" r="1.4"/><circle cx="244.6" cy="333.4" r="1.4"/><circle cx="190.3" cy="333.4" r="1.4"/><circle cx="194.9" cy="333.4" r="1.4"/><circle cx="236.4" cy="333.4" r="1.4"/><circle cx="201.7" cy="333.4" r="1.4"/><circle cx="189.4" cy="333.4" r="1.4"/><circle cx="229.5" cy="333.4" r="1.4"/><circle cx="228.0" cy="333.4" r="1.4"/><circle cx="224.3" cy="333.4" r="1.4"/><circle cx="236.7" cy="333.4" r="1.4"/><circle cx="195.3" cy="333.4" r="1.4"/><circle cx="248.2" cy="333.4" r="1.4"/><circle cx="237.7" cy="333.4" r="1.4"/><circle cx="191.3" cy="333.4" r="1.4"/><circle cx="196.7" cy="333.4" r="1.4"/><circle cx="219.8" cy="345.6" r="1.4"/><circle cx="208.0" cy="345.6" r="1.4"/><circle cx="203.1" cy="345.6" r="1.4"/><circle cx="223.6" cy="345.6" r="1.4"/><circle cx="217.4" cy="345.6" r="1.4"/><circle cx="200.9" cy="345.6" r="1.4"/><circle cx="197.2" cy="345.6" r="1.4"/><circle cx="200.8" cy="345.6" r="1.4"/><circle cx="204.6" cy="345.6" r="1.4"/><circle cx="225.1" cy="345.6" r="1.4"/><circle cx="218.5" cy="345.6" r="1.4"/><circle cx="222.5" cy="345.6" r="1.4"/><circle cx="218.9" cy="345.6" r="1.4"/><circle cx="220.1" cy="345.6" r="1.4"/><circle cx="230.0" cy="345.6" r="1.4"/><circle cx="265.8" cy="345.6" r="1.4"/><circle cx="299.9" cy="345.6" r="1.4"/><circle cx="298.1" cy="345.6" r="1.4"/><circle cx="245.1" cy="345.6" r="1.4"/><circle cx="258.5" cy="345.6" r="1.4"/><circle cx="274.7" cy="345.6" r="1.4"/><circle cx="191.8" cy="391.6" r="1.4"/><circle cx="190.8" cy="393.3" r="1.4"/><circle cx="190.5" cy="391.8" r="1.4"/><circle cx="199.7" cy="395.0" r="1.4"/><circle cx="191.8" cy="394.3" r="1.4"/><circle cx="198.7" cy="384.7" r="1.4"/><circle cx="201.6" cy="389.6" r="1.4"/><circle cx="203.3" cy="388.1" r="1.4"/><circle cx="197.2" cy="385.2" r="1.4"/><circle cx="192.1" cy="390.8" r="1.4"/><circle cx="191.1" cy="395.3" r="1.4"/><circle cx="202.8" cy="384.9" r="1.4"/><circle cx="190.0" cy="393.4" r="1.4"/><circle cx="195.9" cy="395.0" r="1.4"/><circle cx="202.2" cy="394.1" r="1.4"/><circle cx="195.3" cy="397.7" r="1.4"/><circle cx="188.2" cy="392.6" r="1.4"/><circle cx="202.7" cy="385.5" r="1.4"/><circle cx="197.6" cy="399.6" r="1.4"/><circle cx="195.1" cy="393.5" r="1.4"/><circle cx="191.8" cy="389.7" r="1.4"/><circle cx="197.3" cy="398.5" r="1.4"/><circle cx="204.9" cy="388.2" r="1.4"/><circle cx="192.0" cy="389.3" r="1.4"/><circle cx="195.5" cy="395.5" r="1.4"/><circle cx="193.4" cy="395.6" r="1.4"/><circle cx="190.6" cy="396.1" r="1.4"/><circle cx="198.1" cy="389.5" r="1.4"/><circle cx="195.2" cy="389.5" r="1.4"/><circle cx="202.2" cy="391.5" r="1.4"/><circle cx="196.1" cy="398.5" r="1.4"/><circle cx="192.8" cy="397.5" r="1.4"/><circle cx="196.7" cy="392.9" r="1.4"/><circle cx="196.6" cy="391.8" r="1.4"/><circle cx="194.6" cy="387.9" r="1.4"/><circle cx="189.4" cy="386.1" r="1.4"/><circle cx="193.8" cy="387.8" r="1.4"/><circle cx="200.0" cy="388.6" r="1.4"/><circle cx="196.0" cy="397.9" r="1.4"/><circle cx="202.2" cy="393.6" r="1.4"/><circle cx="201.3" cy="392.7" r="1.4"/><circle cx="196.2" cy="399.6" r="1.4"/><circle cx="199.5" cy="392.7" r="1.4"/><circle cx="204.1" cy="394.3" r="1.4"/><circle cx="199.1" cy="394.1" r="1.4"/><circle cx="200.7" cy="385.2" r="1.4"/><circle cx="198.7" cy="392.1" r="1.4"/><circle cx="199.5" cy="395.6" r="1.4"/><circle cx="197.8" cy="389.8" r="1.4"/><circle cx="191.9" cy="391.4" r="1.4"/><circle cx="197.4" cy="394.9" r="1.4"/><circle cx="199.1" cy="392.8" r="1.4"/><circle cx="203.3" cy="389.8" r="1.4"/><circle cx="204.5" cy="398.6" r="1.4"/><circle cx="195.6" cy="397.9" r="1.4"/><circle cx="192.8" cy="393.2" r="1.4"/><circle cx="197.4" cy="392.4" r="1.4"/><circle cx="201.4" cy="397.3" r="1.4"/><circle cx="190.1" cy="382.5" r="1.4"/><circle cx="192.5" cy="396.9" r="1.4"/><circle cx="202.5" cy="396.1" r="1.4"/><circle cx="188.5" cy="391.7" r="1.4"/><circle cx="201.7" cy="393.9" r="1.4"/><circle cx="198.7" cy="382.4" r="1.4"/><circle cx="193.0" cy="391.5" r="1.4"/><circle cx="196.5" cy="388.0" r="1.4"/><circle cx="189.5" cy="394.0" r="1.4"/><circle cx="191.7" cy="392.5" r="1.4"/><circle cx="193.4" cy="394.8" r="1.4"/><circle cx="191.9" cy="394.5" r="1.4"/><circle cx="204.4" cy="391.3" r="1.4"/><circle cx="203.4" cy="390.2" r="1.4"/><circle cx="197.4" cy="390.6" r="1.4"/><circle cx="204.5" cy="391.9" r="1.4"/><circle cx="202.2" cy="394.9" r="1.4"/><circle cx="188.9" cy="399.8" r="1.4"/><circle cx="195.3" cy="392.1" r="1.4"/><circle cx="198.7" cy="393.0" r="1.4"/><circle cx="190.3" cy="395.1" r="1.4"/><circle cx="193.2" cy="389.9" r="1.4"/><circle cx="188.9" cy="390.9" r="1.4"/><circle cx="193.7" cy="393.2" r="1.4"/><circle cx="195.9" cy="394.9" r="1.4"/><circle cx="190.0" cy="390.8" r="1.4"/><circle cx="203.9" cy="388.1" r="1.4"/><circle cx="191.5" cy="385.6" r="1.4"/><circle cx="193.6" cy="385.9" r="1.4"/><circle cx="195.0" cy="397.3" r="1.4"/><circle cx="188.6" cy="390.5" r="1.4"/><circle cx="199.5" cy="390.0" r="1.4"/><circle cx="203.1" cy="393.9" r="1.4"/><circle cx="201.5" cy="397.1" r="1.4"/><circle cx="195.6" cy="397.1" r="1.4"/><circle cx="198.6" cy="385.5" r="1.4"/><circle cx="197.4" cy="396.8" r="1.4"/><circle cx="203.0" cy="387.3" r="1.4"/><circle cx="188.6" cy="391.8" r="1.4"/><circle cx="198.8" cy="395.3" r="1.4"/><circle cx="190.7" cy="397.0" r="1.4"/><circle cx="189.0" cy="391.0" r="1.4"/><circle cx="240.2" cy="397.2" r="1.4"/><circle cx="253.8" cy="391.1" r="1.4"/><circle cx="240.5" cy="389.9" r="1.4"/><circle cx="270.5" cy="395.8" r="1.4"/><circle cx="264.9" cy="400.5" r="1.4"/><circle cx="230.6" cy="394.1" r="1.4"/><circle cx="232.0" cy="395.5" r="1.4"/><circle cx="252.0" cy="395.4" r="1.4"/><circle cx="246.1" cy="390.6" r="1.4"/><circle cx="274.5" cy="390.2" r="1.4"/><circle cx="218.5" cy="388.1" r="1.4"/><circle cx="275.5" cy="392.5" r="1.4"/><circle cx="248.6" cy="389.2" r="1.4"/><circle cx="205.2" cy="396.0" r="1.4"/><circle cx="250.6" cy="394.9" r="1.4"/><circle cx="244.7" cy="392.7" r="1.4"/><circle cx="245.7" cy="396.2" r="1.4"/><circle cx="243.7" cy="387.8" r="1.4"/><circle cx="275.2" cy="395.4" r="1.4"/><circle cx="239.9" cy="393.2" r="1.4"/><circle cx="235.3" cy="394.4" r="1.4"/><circle cx="210.8" cy="395.8" r="1.4"/><circle cx="241.0" cy="392.3" r="1.4"/><circle cx="255.0" cy="389.5" r="1.4"/><circle cx="214.4" cy="393.5" r="1.4"/><circle cx="231.7" cy="390.6" r="1.4"/><circle cx="235.9" cy="396.5" r="1.4"/><circle cx="267.6" cy="393.1" r="1.4"/><circle cx="236.8" cy="394.8" r="1.4"/><circle cx="231.1" cy="387.9" r="1.4"/><circle cx="226.2" cy="392.3" r="1.4"/><circle cx="209.5" cy="393.9" r="1.4"/><circle cx="219.5" cy="388.2" r="1.4"/><circle cx="241.0" cy="397.4" r="1.4"/><circle cx="259.6" cy="393.6" r="1.4"/><circle cx="254.1" cy="395.1" r="1.4"/><circle cx="250.6" cy="395.6" r="1.4"/><circle cx="227.5" cy="395.5" r="1.4"/><circle cx="273.0" cy="397.9" r="1.4"/><circle cx="208.2" cy="390.7" r="1.4"/><circle cx="225.9" cy="398.4" r="1.4"/><circle cx="247.7" cy="390.3" r="1.4"/><circle cx="271.5" cy="397.4" r="1.4"/><circle cx="229.9" cy="390.0" r="1.4"/><circle cx="223.4" cy="398.5" r="1.4"/><circle cx="240.9" cy="394.3" r="1.4"/><circle cx="210.7" cy="393.4" r="1.4"/><circle cx="261.1" cy="392.0" r="1.4"/><circle cx="247.6" cy="395.0" r="1.4"/><circle cx="267.2" cy="391.4" r="1.4"/><circle cx="264.6" cy="392.4" r="1.4"/><circle cx="248.2" cy="389.3" r="1.4"/><circle cx="258.8" cy="394.8" r="1.4"/><circle cx="250.8" cy="392.3" r="1.4"/><circle cx="216.6" cy="395.6" r="1.4"/><circle cx="269.3" cy="392.6" r="1.4"/><circle cx="220.8" cy="387.6" r="1.4"/><circle cx="223.4" cy="391.9" r="1.4"/><circle cx="275.7" cy="392.9" r="1.4"/><circle cx="226.4" cy="392.5" r="1.4"/><circle cx="232.1" cy="393.6" r="1.4"/><circle cx="249.3" cy="391.5" r="1.4"/><circle cx="234.5" cy="394.0" r="1.4"/><circle cx="238.3" cy="394.0" r="1.4"/><circle cx="232.2" cy="392.6" r="1.4"/><circle cx="251.3" cy="397.3" r="1.4"/><circle cx="218.8" cy="393.1" r="1.4"/><circle cx="223.3" cy="395.1" r="1.4"/><circle cx="227.5" cy="393.8" r="1.4"/><circle cx="268.1" cy="387.9" r="1.4"/><circle cx="238.3" cy="396.9" r="1.4"/><circle cx="271.2" cy="394.9" r="1.4"/><circle cx="240.3" cy="394.1" r="1.4"/><circle cx="274.1" cy="394.9" r="1.4"/><circle cx="211.7" cy="391.1" r="1.4"/><circle cx="231.9" cy="387.4" r="1.4"/><circle cx="240.4" cy="388.3" r="1.4"/><circle cx="225.0" cy="395.5" r="1.4"/><circle cx="217.6" cy="390.1" r="1.4"/><circle cx="259.7" cy="395.0" r="1.4"/><circle cx="272.9" cy="390.5" r="1.4"/><circle cx="237.3" cy="397.2" r="1.4"/><circle cx="271.6" cy="389.7" r="1.4"/><circle cx="254.3" cy="400.6" r="1.4"/><circle cx="219.0" cy="392.7" r="1.4"/><circle cx="273.0" cy="394.6" r="1.4"/><circle cx="218.3" cy="395.2" r="1.4"/><circle cx="218.5" cy="394.9" r="1.4"/><circle cx="255.3" cy="388.9" r="1.4"/><circle cx="246.6" cy="395.4" r="1.4"/><circle cx="210.0" cy="392.6" r="1.4"/><circle cx="241.5" cy="396.3" r="1.4"/><circle cx="221.8" cy="398.0" r="1.4"/><circle cx="212.8" cy="393.9" r="1.4"/><circle cx="218.6" cy="392.2" r="1.4"/><circle cx="246.2" cy="394.8" r="1.4"/><circle cx="274.2" cy="395.7" r="1.4"/><circle cx="211.1" cy="394.8" r="1.4"/><circle cx="254.2" cy="387.2" r="1.4"/><circle cx="241.5" cy="396.4" r="1.4"/><circle cx="242.8" cy="389.7" r="1.4"/><circle cx="217.8" cy="401.8" r="1.4"/><circle cx="269.3" cy="397.7" r="1.4"/><circle cx="220.8" cy="393.2" r="1.4"/><circle cx="246.5" cy="392.1" r="1.4"/><circle cx="257.5" cy="389.2" r="1.4"/><circle cx="232.2" cy="394.8" r="1.4"/><circle cx="275.5" cy="389.5" r="1.4"/><circle cx="254.5" cy="392.9" r="1.4"/><circle cx="235.1" cy="390.5" r="1.4"/><circle cx="241.5" cy="399.3" r="1.4"/><circle cx="235.3" cy="393.2" r="1.4"/><circle cx="206.9" cy="394.1" r="1.4"/><circle cx="208.8" cy="397.0" r="1.4"/><circle cx="232.3" cy="391.9" r="1.4"/><circle cx="231.3" cy="394.7" r="1.4"/><circle cx="270.2" cy="392.4" r="1.4"/><circle cx="231.2" cy="395.4" r="1.4"/><circle cx="215.7" cy="394.1" r="1.4"/><circle cx="212.8" cy="393.1" r="1.4"/><circle cx="226.9" cy="395.1" r="1.4"/><circle cx="245.2" cy="390.6" r="1.4"/><circle cx="237.8" cy="391.6" r="1.4"/><circle cx="258.2" cy="393.9" r="1.4"/><circle cx="214.9" cy="395.8" r="1.4"/><circle cx="270.7" cy="387.1" r="1.4"/><circle cx="230.3" cy="393.4" r="1.4"/><circle cx="259.9" cy="391.5" r="1.4"/><circle cx="235.4" cy="397.1" r="1.4"/><circle cx="238.8" cy="385.5" r="1.4"/><circle cx="275.5" cy="391.4" r="1.4"/><circle cx="208.4" cy="391.3" r="1.4"/><circle cx="207.6" cy="393.8" r="1.4"/><circle cx="270.7" cy="392.8" r="1.4"/><circle cx="259.9" cy="391.3" r="1.4"/><circle cx="258.5" cy="394.3" r="1.4"/><circle cx="258.5" cy="392.5" r="1.4"/><circle cx="210.2" cy="393.0" r="1.4"/><circle cx="253.7" cy="396.9" r="1.4"/><circle cx="217.1" cy="400.1" r="1.4"/><circle cx="212.5" cy="390.7" r="1.4"/><circle cx="241.4" cy="389.9" r="1.4"/><circle cx="240.3" cy="395.4" r="1.4"/><circle cx="275.3" cy="394.1" r="1.4"/><circle cx="263.1" cy="398.6" r="1.4"/><circle cx="261.1" cy="393.8" r="1.4"/><circle cx="208.3" cy="392.7" r="1.4"/><circle cx="241.9" cy="393.6" r="1.4"/><circle cx="233.7" cy="395.6" r="1.4"/><circle cx="221.2" cy="393.0" r="1.4"/><circle cx="211.7" cy="401.2" r="1.4"/><circle cx="212.2" cy="390.1" r="1.4"/><circle cx="218.7" cy="404.5" r="1.4"/><circle cx="210.2" cy="394.1" r="1.4"/><circle cx="206.2" cy="398.2" r="1.4"/><circle cx="204.9" cy="391.1" r="1.4"/><circle cx="207.6" cy="406.0" r="1.4"/><circle cx="210.5" cy="386.7" r="1.4"/><circle cx="198.9" cy="404.9" r="1.4"/><circle cx="198.5" cy="402.3" r="1.4"/><circle cx="290.6" cy="396.3" r="1.4"/><circle cx="292.7" cy="394.9" r="1.4"/><circle cx="296.9" cy="395.6" r="1.4"/><circle cx="299.0" cy="395.6" r="1.4"/><circle cx="301.1" cy="396.3" r="1.4"/><circle cx="303.1" cy="396.9" r="1.4"/><circle cx="306.3" cy="400.3" r="1.4"/><circle cx="339.4" cy="392.3" r="1.4"/><circle cx="361.3" cy="397.2" r="1.4"/><circle cx="338.8" cy="391.6" r="1.4"/><circle cx="329.6" cy="391.2" r="1.4"/><circle cx="350.5" cy="395.8" r="1.4"/><circle cx="327.4" cy="399.0" r="1.4"/><circle cx="331.2" cy="397.3" r="1.4"/><circle cx="327.6" cy="397.9" r="1.4"/><circle cx="325.1" cy="392.8" r="1.4"/><circle cx="334.7" cy="390.0" r="1.4"/><circle cx="371.0" cy="394.7" r="1.4"/><circle cx="371.0" cy="390.0" r="1.4"/><circle cx="338.0" cy="392.1" r="1.4"/><circle cx="336.9" cy="392.3" r="1.4"/><circle cx="333.8" cy="394.9" r="1.4"/><circle cx="373.4" cy="398.4" r="1.4"/><circle cx="333.3" cy="391.5" r="1.4"/><circle cx="349.9" cy="393.7" r="1.4"/><circle cx="356.2" cy="393.0" r="1.4"/><circle cx="349.4" cy="393.7" r="1.4"/><circle cx="363.1" cy="388.5" r="1.4"/><circle cx="339.2" cy="390.7" r="1.4"/><circle cx="329.1" cy="391.0" r="1.4"/><circle cx="336.9" cy="391.2" r="1.4"/><circle cx="328.7" cy="389.8" r="1.4"/><circle cx="342.0" cy="398.6" r="1.4"/><circle cx="368.5" cy="397.0" r="1.4"/><circle cx="357.1" cy="391.6" r="1.4"/><circle cx="380.8" cy="395.4" r="1.4"/><circle cx="370.7" cy="392.5" r="1.4"/><circle cx="342.3" cy="397.1" r="1.4"/><circle cx="335.9" cy="394.5" r="1.4"/><circle cx="344.9" cy="395.6" r="1.4"/><circle cx="357.1" cy="390.6" r="1.4"/><circle cx="363.2" cy="394.5" r="1.4"/><circle cx="331.3" cy="391.5" r="1.4"/><circle cx="359.5" cy="393.9" r="1.4"/><circle cx="326.2" cy="394.6" r="1.4"/><circle cx="361.3" cy="393.0" r="1.4"/><circle cx="350.4" cy="396.4" r="1.4"/><circle cx="365.9" cy="392.1" r="1.4"/><circle cx="375.9" cy="397.5" r="1.4"/><circle cx="341.2" cy="395.2" r="1.4"/><circle cx="373.4" cy="392.3" r="1.4"/><circle cx="342.8" cy="393.9" r="1.4"/><circle cx="364.5" cy="395.0" r="1.4"/><circle cx="366.2" cy="399.5" r="1.4"/><circle cx="350.9" cy="392.1" r="1.4"/><circle cx="362.8" cy="393.0" r="1.4"/><circle cx="373.2" cy="391.4" r="1.4"/><circle cx="367.7" cy="394.6" r="1.4"/><circle cx="338.9" cy="394.6" r="1.4"/><circle cx="356.5" cy="393.9" r="1.4"/><circle cx="344.1" cy="396.7" r="1.4"/><circle cx="360.1" cy="392.7" r="1.4"/><circle cx="377.0" cy="392.7" r="1.4"/><circle cx="371.3" cy="395.9" r="1.4"/><circle cx="344.0" cy="398.5" r="1.4"/><circle cx="367.8" cy="393.5" r="1.4"/><circle cx="334.8" cy="392.9" r="1.4"/><circle cx="377.4" cy="393.2" r="1.4"/><circle cx="326.2" cy="392.6" r="1.4"/><circle cx="348.8" cy="392.5" r="1.4"/><circle cx="381.1" cy="394.6" r="1.4"/><circle cx="332.8" cy="392.8" r="1.4"/><circle cx="362.1" cy="394.8" r="1.4"/><circle cx="327.2" cy="396.7" r="1.4"/><circle cx="364.1" cy="394.2" r="1.4"/><circle cx="334.0" cy="393.5" r="1.4"/><circle cx="326.8" cy="395.6" r="1.4"/><circle cx="370.7" cy="393.6" r="1.4"/><circle cx="354.2" cy="392.6" r="1.4"/><circle cx="354.2" cy="392.9" r="1.4"/><circle cx="383.3" cy="386.4" r="1.4"/><circle cx="347.1" cy="394.8" r="1.4"/><circle cx="334.8" cy="393.4" r="1.4"/><circle cx="330.4" cy="398.5" r="1.4"/><circle cx="342.9" cy="393.8" r="1.4"/><circle cx="366.6" cy="393.8" r="1.4"/><circle cx="336.0" cy="397.3" r="1.4"/><circle cx="337.5" cy="395.9" r="1.4"/><circle cx="329.5" cy="395.6" r="1.4"/><circle cx="338.0" cy="399.3" r="1.4"/><circle cx="351.9" cy="393.5" r="1.4"/><circle cx="330.9" cy="399.7" r="1.4"/><circle cx="332.7" cy="400.8" r="1.4"/><circle cx="337.2" cy="403.7" r="1.4"/><circle cx="331.0" cy="402.7" r="1.4"/><circle cx="330.6" cy="397.7" r="1.4"/><circle cx="338.2" cy="404.2" r="1.4"/><circle cx="327.3" cy="402.1" r="1.4"/><circle cx="330.0" cy="399.9" r="1.4"/><circle cx="330.4" cy="402.1" r="1.4"/><circle cx="327.4" cy="400.1" r="1.4"/><circle cx="331.9" cy="400.6" r="1.4"/><circle cx="398.9" cy="398.4" r="1.4"/><circle cx="402.8" cy="393.5" r="1.4"/><circle cx="391.9" cy="395.8" r="1.4"/><circle cx="406.0" cy="396.8" r="1.4"/><circle cx="395.8" cy="396.7" r="1.4"/><circle cx="414.5" cy="396.0" r="1.4"/><circle cx="395.4" cy="387.1" r="1.4"/><circle cx="409.8" cy="396.3" r="1.4"/><circle cx="409.6" cy="389.2" r="1.4"/><circle cx="399.1" cy="396.3" r="1.4"/><circle cx="412.5" cy="394.6" r="1.4"/><circle cx="413.3" cy="395.2" r="1.4"/><circle cx="396.0" cy="391.5" r="1.4"/><circle cx="402.5" cy="394.2" r="1.4"/><circle cx="413.7" cy="395.7" r="1.4"/><circle cx="408.7" cy="392.2" r="1.4"/><circle cx="394.0" cy="395.6" r="1.4"/><circle cx="398.6" cy="394.5" r="1.4"/><circle cx="404.6" cy="393.8" r="1.4"/><circle cx="411.9" cy="391.7" r="1.4"/></g><g fill-opacity="0.9"><circle cx="480.0" cy="393.7" r="1.4" fill="#3f86f0"/><circle cx="418.9" cy="386.2" r="1.4" fill="#d54be9"/><circle cx="401.5" cy="417.4" r="1.4" fill="#d54be9"/><circle cx="448.3" cy="391.6" r="1.4" fill="#3f86f0"/><circle cx="457.4" cy="391.7" r="1.4" fill="#3f86f0"/><circle cx="460.2" cy="391.4" r="1.4" fill="#3f86f0"/><circle cx="469.6" cy="384.9" r="1.4" fill="#d54be9"/><circle cx="483.9" cy="379.7" r="1.4" fill="#a69f9c"/><circle cx="443.5" cy="396.0" r="1.4" fill="#3f86f0"/><circle cx="397.7" cy="420.7" r="1.4" fill="#d54be9"/><circle cx="461.4" cy="378.9" r="1.4" fill="#d54be9"/><circle cx="475.5" cy="388.1" r="1.4" fill="#3f86f0"/><circle cx="403.2" cy="425.1" r="1.4" fill="#d54be9"/><circle cx="409.3" cy="405.2" r="1.4" fill="#d54be9"/><circle cx="465.7" cy="380.9" r="1.4" fill="#d54be9"/><circle cx="403.4" cy="428.8" r="1.4" fill="#d54be9"/><circle cx="502.5" cy="393.3" r="1.4" fill="#d54be9"/><circle cx="432.8" cy="386.5" r="1.4" fill="#d54be9"/><circle cx="502.7" cy="386.0" r="1.4" fill="#d54be9"/><circle cx="488.7" cy="393.8" r="1.4" fill="#3f86f0"/><circle cx="473.1" cy="392.3" r="1.4" fill="#3f86f0"/><circle cx="442.4" cy="395.1" r="1.4" fill="#a69f9c"/><circle cx="479.0" cy="392.2" r="1.4" fill="#3f86f0"/><circle cx="417.4" cy="404.0" r="1.4" fill="#d54be9"/><circle cx="422.2" cy="387.2" r="1.4" fill="#d54be9"/><circle cx="420.7" cy="394.1" r="1.4" fill="#3f86f0"/><circle cx="415.4" cy="402.4" r="1.4" fill="#d54be9"/><circle cx="460.1" cy="395.2" r="1.4" fill="#3f86f0"/><circle cx="493.1" cy="392.3" r="1.4" fill="#3f86f0"/><circle cx="429.4" cy="391.5" r="1.4" fill="#3f86f0"/><circle cx="412.3" cy="413.1" r="1.4" fill="#d54be9"/><circle cx="413.5" cy="385.6" r="1.4" fill="#a69f9c"/><circle cx="476.1" cy="392.9" r="1.4" fill="#3f86f0"/><circle cx="451.4" cy="395.0" r="1.4" fill="#3f86f0"/><circle cx="467.2" cy="392.5" r="1.4" fill="#3f86f0"/><circle cx="404.2" cy="410.6" r="1.4" fill="#a69f9c"/><circle cx="484.8" cy="395.7" r="1.4" fill="#3f86f0"/><circle cx="423.5" cy="395.4" r="1.4" fill="#3f86f0"/><circle cx="473.8" cy="399.5" r="1.4" fill="#3f86f0"/><circle cx="402.5" cy="423.1" r="1.4" fill="#f7751c"/><circle cx="419.6" cy="387.0" r="1.4" fill="#d54be9"/><circle cx="483.8" cy="384.5" r="1.4" fill="#d54be9"/><circle cx="435.4" cy="392.0" r="1.4" fill="#3f86f0"/><circle cx="427.5" cy="389.0" r="1.4" fill="#d54be9"/><circle cx="465.4" cy="381.2" r="1.4" fill="#a69f9c"/><circle cx="396.0" cy="431.0" r="1.4" fill="#d54be9"/><circle cx="469.8" cy="385.5" r="1.4" fill="#a69f9c"/><circle cx="483.6" cy="392.3" r="1.4" fill="#f7751c"/><circle cx="474.4" cy="383.3" r="1.4" fill="#d54be9"/><circle cx="442.3" cy="377.7" r="1.4" fill="#d54be9"/><circle cx="467.3" cy="397.9" r="1.4" fill="#3f86f0"/><circle cx="496.2" cy="396.7" r="1.4" fill="#3f86f0"/><circle cx="402.5" cy="426.5" r="1.4" fill="#a69f9c"/><circle cx="495.2" cy="394.4" r="1.4" fill="#3f86f0"/><circle cx="410.7" cy="410.9" r="1.4" fill="#d54be9"/><circle cx="498.9" cy="393.6" r="1.4" fill="#3f86f0"/><circle cx="441.9" cy="385.3" r="1.4" fill="#d54be9"/><circle cx="449.4" cy="396.6" r="1.4" fill="#3f86f0"/><circle cx="404.9" cy="429.1" r="1.4" fill="#d54be9"/><circle cx="394.3" cy="431.0" r="1.4" fill="#d54be9"/><circle cx="498.4" cy="395.3" r="1.4" fill="#3f86f0"/><circle cx="422.5" cy="391.2" r="1.4" fill="#3f86f0"/><circle cx="416.3" cy="390.9" r="1.4" fill="#d54be9"/><circle cx="408.2" cy="402.6" r="1.4" fill="#d54be9"/><circle cx="479.7" cy="394.2" r="1.4" fill="#3f86f0"/><circle cx="428.3" cy="386.2" r="1.4" fill="#d54be9"/><circle cx="458.8" cy="372.9" r="1.4" fill="#a69f9c"/><circle cx="472.7" cy="395.9" r="1.4" fill="#3f86f0"/><circle cx="443.2" cy="401.1" r="1.4" fill="#3f86f0"/><circle cx="430.1" cy="397.1" r="1.4" fill="#3f86f0"/><circle cx="482.9" cy="397.8" r="1.4" fill="#3f86f0"/><circle cx="394.0" cy="431.0" r="1.4" fill="#d54be9"/><circle cx="481.4" cy="380.8" r="1.4" fill="#a69f9c"/><circle cx="409.1" cy="416.3" r="1.4" fill="#d54be9"/><circle cx="444.9" cy="380.5" r="1.4" fill="#d54be9"/><circle cx="446.4" cy="397.4" r="1.4" fill="#3f86f0"/><circle cx="430.9" cy="383.1" r="1.4" fill="#a69f9c"/><circle cx="403.0" cy="412.2" r="1.4" fill="#d54be9"/><circle cx="415.3" cy="404.8" r="1.4" fill="#d54be9"/><circle cx="414.4" cy="408.4" r="1.4" fill="#d54be9"/><circle cx="481.3" cy="378.8" r="1.4" fill="#a69f9c"/><circle cx="492.2" cy="388.6" r="1.4" fill="#a69f9c"/><circle cx="434.1" cy="399.3" r="1.4" fill="#3f86f0"/><circle cx="474.3" cy="388.2" r="1.4" fill="#d54be9"/><circle cx="414.1" cy="391.0" r="1.4" fill="#3f86f0"/><circle cx="460.2" cy="381.9" r="1.4" fill="#a69f9c"/><circle cx="406.3" cy="414.7" r="1.4" fill="#d54be9"/><circle cx="416.2" cy="392.6" r="1.4" fill="#3f86f0"/><circle cx="469.0" cy="379.3" r="1.4" fill="#d54be9"/><circle cx="417.0" cy="393.2" r="1.4" fill="#d54be9"/><circle cx="454.1" cy="390.2" r="1.4" fill="#3f86f0"/><circle cx="408.0" cy="424.1" r="1.4" fill="#d54be9"/><circle cx="405.1" cy="422.5" r="1.4" fill="#d54be9"/><circle cx="443.4" cy="396.4" r="1.4" fill="#3f86f0"/><circle cx="472.4" cy="390.3" r="1.4" fill="#a69f9c"/><circle cx="469.9" cy="386.6" r="1.4" fill="#d54be9"/><circle cx="487.6" cy="393.6" r="1.4" fill="#f7751c"/><circle cx="413.9" cy="405.6" r="1.4" fill="#d54be9"/><circle cx="413.9" cy="423.3" r="1.4" fill="#f7751c"/><circle cx="416.0" cy="392.7" r="1.4" fill="#a69f9c"/><circle cx="457.5" cy="383.3" r="1.4" fill="#d54be9"/><circle cx="448.4" cy="390.1" r="1.4" fill="#3f86f0"/><circle cx="487.6" cy="381.2" r="1.4" fill="#a69f9c"/><circle cx="439.5" cy="387.5" r="1.4" fill="#d54be9"/><circle cx="446.2" cy="384.6" r="1.4" fill="#d54be9"/><circle cx="400.3" cy="418.4" r="1.4" fill="#a69f9c"/><circle cx="485.0" cy="383.8" r="1.4" fill="#d54be9"/><circle cx="494.7" cy="392.7" r="1.4" fill="#d54be9"/><circle cx="459.6" cy="391.3" r="1.4" fill="#3f86f0"/><circle cx="472.2" cy="391.8" r="1.4" fill="#a69f9c"/><circle cx="412.2" cy="404.8" r="1.4" fill="#a69f9c"/><circle cx="428.6" cy="395.1" r="1.4" fill="#3f86f0"/><circle cx="418.8" cy="393.5" r="1.4" fill="#d54be9"/><circle cx="471.3" cy="386.5" r="1.4" fill="#a69f9c"/><circle cx="447.7" cy="392.5" r="1.4" fill="#3f86f0"/><circle cx="484.8" cy="392.8" r="1.4" fill="#3f86f0"/><circle cx="414.3" cy="406.7" r="1.4" fill="#d54be9"/><circle cx="450.2" cy="394.9" r="1.4" fill="#3f86f0"/><circle cx="491.7" cy="396.5" r="1.4" fill="#3f86f0"/><circle cx="502.4" cy="393.4" r="1.4" fill="#3f86f0"/><circle cx="494.6" cy="387.9" r="1.4" fill="#3f86f0"/><circle cx="462.3" cy="388.7" r="1.4" fill="#3f86f0"/><circle cx="465.6" cy="391.6" r="1.4" fill="#3f86f0"/><circle cx="406.8" cy="406.3" r="1.4" fill="#d54be9"/><circle cx="407.3" cy="419.3" r="1.4" fill="#f7751c"/><circle cx="405.4" cy="420.3" r="1.4" fill="#f7751c"/><circle cx="490.1" cy="392.7" r="1.4" fill="#3f86f0"/><circle cx="425.2" cy="389.9" r="1.4" fill="#3f86f0"/><circle cx="451.2" cy="391.0" r="1.4" fill="#3f86f0"/><circle cx="394.2" cy="420.3" r="1.4" fill="#d54be9"/><circle cx="415.6" cy="388.7" r="1.4" fill="#d54be9"/><circle cx="414.4" cy="409.9" r="1.4" fill="#d54be9"/><circle cx="426.4" cy="386.8" r="1.4" fill="#3f86f0"/><circle cx="456.8" cy="372.9" r="1.4" fill="#d54be9"/><circle cx="459.2" cy="382.8" r="1.4" fill="#a69f9c"/><circle cx="469.8" cy="381.3" r="1.4" fill="#d54be9"/><circle cx="415.3" cy="418.9" r="1.4" fill="#f7751c"/><circle cx="501.7" cy="399.2" r="1.4" fill="#3f86f0"/><circle cx="469.8" cy="377.0" r="1.4" fill="#d54be9"/><circle cx="406.8" cy="405.4" r="1.4" fill="#d54be9"/><circle cx="416.0" cy="390.9" r="1.4" fill="#d54be9"/><circle cx="492.0" cy="390.9" r="1.4" fill="#d54be9"/><circle cx="425.1" cy="393.6" r="1.4" fill="#d54be9"/><circle cx="399.2" cy="407.5" r="1.4" fill="#d54be9"/><circle cx="452.9" cy="395.4" r="1.4" fill="#3f86f0"/><circle cx="415.5" cy="398.5" r="1.4" fill="#d54be9"/><circle cx="403.5" cy="415.7" r="1.4" fill="#d54be9"/><circle cx="402.5" cy="414.5" r="1.4" fill="#d54be9"/><circle cx="447.1" cy="374.8" r="1.4" fill="#d54be9"/><circle cx="453.5" cy="385.6" r="1.4" fill="#a69f9c"/><circle cx="423.4" cy="391.6" r="1.4" fill="#3f86f0"/><circle cx="443.9" cy="393.2" r="1.4" fill="#3f86f0"/><circle cx="475.8" cy="397.2" r="1.4" fill="#d54be9"/><circle cx="425.2" cy="390.6" r="1.4" fill="#a69f9c"/><circle cx="430.8" cy="395.3" r="1.4" fill="#3f86f0"/><circle cx="454.0" cy="378.2" r="1.4" fill="#d54be9"/><circle cx="397.1" cy="430.7" r="1.4" fill="#d54be9"/><circle cx="487.6" cy="392.2" r="1.4" fill="#3f86f0"/><circle cx="469.4" cy="387.2" r="1.4" fill="#3f86f0"/><circle cx="403.8" cy="411.4" r="1.4" fill="#d54be9"/><circle cx="448.7" cy="394.0" r="1.4" fill="#3f86f0"/><circle cx="418.8" cy="396.3" r="1.4" fill="#d54be9"/><circle cx="432.4" cy="386.4" r="1.4" fill="#d54be9"/><circle cx="428.1" cy="392.6" r="1.4" fill="#3f86f0"/><circle cx="411.2" cy="413.7" r="1.4" fill="#a69f9c"/><circle cx="410.3" cy="403.2" r="1.4" fill="#d54be9"/><circle cx="441.2" cy="381.8" r="1.4" fill="#d54be9"/><circle cx="500.1" cy="395.0" r="1.4" fill="#3f86f0"/><circle cx="414.5" cy="392.8" r="1.4" fill="#3f86f0"/><circle cx="408.5" cy="427.6" r="1.4" fill="#f7751c"/><circle cx="454.0" cy="380.9" r="1.4" fill="#a69f9c"/><circle cx="486.4" cy="391.1" r="1.4" fill="#3f86f0"/><circle cx="490.8" cy="390.4" r="1.4" fill="#a69f9c"/><circle cx="423.0" cy="387.7" r="1.4" fill="#d54be9"/><circle cx="453.4" cy="398.1" r="1.4" fill="#3f86f0"/><circle cx="416.4" cy="391.9" r="1.4" fill="#3f86f0"/><circle cx="473.7" cy="383.5" r="1.4" fill="#d54be9"/><circle cx="411.7" cy="391.9" r="1.4" fill="#3f86f0"/><circle cx="441.5" cy="393.0" r="1.4" fill="#3f86f0"/><circle cx="488.6" cy="397.8" r="1.4" fill="#3f86f0"/><circle cx="465.8" cy="378.8" r="1.4" fill="#a69f9c"/><circle cx="494.6" cy="396.9" r="1.4" fill="#3f86f0"/><circle cx="494.2" cy="392.9" r="1.4" fill="#3f86f0"/><circle cx="419.8" cy="390.2" r="1.4" fill="#3f86f0"/><circle cx="411.4" cy="414.9" r="1.4" fill="#a69f9c"/><circle cx="422.4" cy="395.4" r="1.4" fill="#a69f9c"/><circle cx="429.9" cy="401.2" r="1.4" fill="#a69f9c"/><circle cx="469.4" cy="398.4" r="1.4" fill="#3f86f0"/><circle cx="430.7" cy="393.9" r="1.4" fill="#3f86f0"/><circle cx="417.3" cy="413.2" r="1.4" fill="#d54be9"/><circle cx="454.8" cy="393.6" r="1.4" fill="#3f86f0"/><circle cx="405.0" cy="414.9" r="1.4" fill="#a69f9c"/><circle cx="425.5" cy="383.2" r="1.4" fill="#a69f9c"/><circle cx="475.1" cy="386.1" r="1.4" fill="#d54be9"/><circle cx="417.6" cy="405.7" r="1.4" fill="#d54be9"/><circle cx="459.2" cy="387.7" r="1.4" fill="#d54be9"/><circle cx="494.2" cy="385.0" r="1.4" fill="#d54be9"/><circle cx="499.2" cy="392.4" r="1.4" fill="#3f86f0"/><circle cx="434.6" cy="384.3" r="1.4" fill="#d54be9"/><circle cx="395.7" cy="427.4" r="1.4" fill="#d54be9"/><circle cx="394.9" cy="427.4" r="1.4" fill="#d54be9"/><circle cx="470.6" cy="398.9" r="1.4" fill="#3f86f0"/><circle cx="401.6" cy="420.7" r="1.4" fill="#d54be9"/><circle cx="452.1" cy="390.9" r="1.4" fill="#3f86f0"/><circle cx="452.5" cy="379.5" r="1.4" fill="#a69f9c"/><circle cx="425.1" cy="394.5" r="1.4" fill="#3f86f0"/><circle cx="450.9" cy="393.0" r="1.4" fill="#3f86f0"/><circle cx="422.7" cy="392.9" r="1.4" fill="#3f86f0"/><circle cx="417.7" cy="399.3" r="1.4" fill="#d54be9"/><circle cx="475.6" cy="386.6" r="1.4" fill="#d54be9"/><circle cx="404.8" cy="410.7" r="1.4" fill="#d54be9"/><circle cx="438.2" cy="392.5" r="1.4" fill="#3f86f0"/><circle cx="422.4" cy="393.0" r="1.4" fill="#3f86f0"/><circle cx="482.0" cy="390.5" r="1.4" fill="#d54be9"/><circle cx="409.6" cy="418.2" r="1.4" fill="#d54be9"/><circle cx="485.9" cy="386.7" r="1.4" fill="#a69f9c"/><circle cx="439.5" cy="384.7" r="1.4" fill="#a69f9c"/><circle cx="427.7" cy="388.1" r="1.4" fill="#a69f9c"/><circle cx="458.0" cy="397.6" r="1.4" fill="#3f86f0"/><circle cx="436.2" cy="389.0" r="1.4" fill="#a69f9c"/><circle cx="419.5" cy="394.1" r="1.4" fill="#3f86f0"/><circle cx="449.3" cy="390.8" r="1.4" fill="#3f86f0"/><circle cx="448.8" cy="377.9" r="1.4" fill="#a69f9c"/><circle cx="417.8" cy="396.5" r="1.4" fill="#3f86f0"/><circle cx="481.8" cy="380.3" r="1.4" fill="#d54be9"/><circle cx="487.0" cy="391.6" r="1.4" fill="#3f86f0"/><circle cx="431.9" cy="384.0" r="1.4" fill="#d54be9"/><circle cx="425.2" cy="391.7" r="1.4" fill="#a69f9c"/><circle cx="485.7" cy="395.4" r="1.4" fill="#3f86f0"/><circle cx="428.9" cy="389.3" r="1.4" fill="#a69f9c"/><circle cx="489.1" cy="393.9" r="1.4" fill="#3f86f0"/><circle cx="445.8" cy="386.4" r="1.4" fill="#a69f9c"/><circle cx="422.2" cy="391.2" r="1.4" fill="#a69f9c"/><circle cx="498.2" cy="387.4" r="1.4" fill="#a69f9c"/><circle cx="458.4" cy="375.3" r="1.4" fill="#d54be9"/><circle cx="480.3" cy="398.3" r="1.4" fill="#3f86f0"/><circle cx="461.4" cy="388.2" r="1.4" fill="#3f86f0"/><circle cx="457.6" cy="380.3" r="1.4" fill="#d54be9"/><circle cx="457.1" cy="396.0" r="1.4" fill="#3f86f0"/><circle cx="410.2" cy="401.0" r="1.4" fill="#d54be9"/><circle cx="451.8" cy="396.1" r="1.4" fill="#3f86f0"/><circle cx="418.6" cy="408.4" r="1.4" fill="#a69f9c"/><circle cx="489.2" cy="389.8" r="1.4" fill="#d54be9"/><circle cx="492.6" cy="390.2" r="1.4" fill="#3f86f0"/><circle cx="458.8" cy="386.9" r="1.4" fill="#a69f9c"/><circle cx="399.8" cy="426.4" r="1.4" fill="#a69f9c"/><circle cx="397.6" cy="431.0" r="1.4" fill="#d54be9"/><circle cx="437.2" cy="389.8" r="1.4" fill="#d54be9"/><circle cx="500.9" cy="395.0" r="1.4" fill="#3f86f0"/><circle cx="412.2" cy="394.4" r="1.4" fill="#3f86f0"/><circle cx="404.1" cy="431.0" r="1.4" fill="#d54be9"/><circle cx="431.2" cy="390.5" r="1.4" fill="#3f86f0"/><circle cx="409.3" cy="409.1" r="1.4" fill="#d54be9"/><circle cx="491.9" cy="391.7" r="1.4" fill="#a69f9c"/><circle cx="417.1" cy="404.9" r="1.4" fill="#a69f9c"/><circle cx="441.5" cy="381.2" r="1.4" fill="#a69f9c"/><circle cx="450.3" cy="380.9" r="1.4" fill="#d54be9"/><circle cx="439.9" cy="395.4" r="1.4" fill="#3f86f0"/><circle cx="411.0" cy="416.5" r="1.4" fill="#a69f9c"/><circle cx="470.7" cy="383.1" r="1.4" fill="#d54be9"/><circle cx="431.6" cy="386.5" r="1.4" fill="#a69f9c"/><circle cx="490.6" cy="399.3" r="1.4" fill="#3f86f0"/><circle cx="489.9" cy="390.9" r="1.4" fill="#d54be9"/><circle cx="413.9" cy="424.1" r="1.4" fill="#f7751c"/><circle cx="408.8" cy="415.4" r="1.4" fill="#d54be9"/><circle cx="395.4" cy="429.6" r="1.4" fill="#d54be9"/><circle cx="414.7" cy="405.6" r="1.4" fill="#d54be9"/><circle cx="421.1" cy="390.6" r="1.4" fill="#3f86f0"/><circle cx="397.3" cy="431.0" r="1.4" fill="#d54be9"/><circle cx="465.8" cy="385.4" r="1.4" fill="#a69f9c"/><circle cx="482.4" cy="395.5" r="1.4" fill="#3f86f0"/><circle cx="410.2" cy="420.8" r="1.4" fill="#d54be9"/><circle cx="495.5" cy="390.6" r="1.4" fill="#a69f9c"/><circle cx="492.3" cy="389.7" r="1.4" fill="#3f86f0"/><circle cx="485.8" cy="385.9" r="1.4" fill="#3f86f0"/><circle cx="428.4" cy="391.8" r="1.4" fill="#d54be9"/><circle cx="459.4" cy="381.5" r="1.4" fill="#d54be9"/><circle cx="478.6" cy="384.0" r="1.4" fill="#a69f9c"/><circle cx="476.9" cy="378.5" r="1.4" fill="#a69f9c"/><circle cx="488.6" cy="394.4" r="1.4" fill="#3f86f0"/><circle cx="443.1" cy="384.5" r="1.4" fill="#d54be9"/><circle cx="401.3" cy="420.2" r="1.4" fill="#d54be9"/><circle cx="408.9" cy="413.8" r="1.4" fill="#a69f9c"/><circle cx="428.5" cy="392.4" r="1.4" fill="#a69f9c"/><circle cx="408.5" cy="408.9" r="1.4" fill="#d54be9"/><circle cx="410.5" cy="428.7" r="1.4" fill="#f7751c"/><circle cx="429.1" cy="393.2" r="1.4" fill="#a69f9c"/><circle cx="468.8" cy="396.5" r="1.4" fill="#3f86f0"/><circle cx="436.9" cy="391.4" r="1.4" fill="#a69f9c"/><circle cx="449.2" cy="389.2" r="1.4" fill="#a69f9c"/><circle cx="438.2" cy="394.7" r="1.4" fill="#3f86f0"/><circle cx="430.9" cy="398.6" r="1.4" fill="#3f86f0"/><circle cx="467.1" cy="391.7" r="1.4" fill="#3f86f0"/><circle cx="430.2" cy="393.5" r="1.4" fill="#3f86f0"/><circle cx="443.3" cy="380.9" r="1.4" fill="#a69f9c"/><circle cx="446.9" cy="385.4" r="1.4" fill="#d54be9"/><circle cx="465.0" cy="397.2" r="1.4" fill="#3f86f0"/><circle cx="415.9" cy="391.8" r="1.4" fill="#d54be9"/><circle cx="414.7" cy="405.0" r="1.4" fill="#d54be9"/><circle cx="474.2" cy="377.6" r="1.4" fill="#d54be9"/><circle cx="425.1" cy="396.6" r="1.4" fill="#3f86f0"/><circle cx="403.1" cy="418.1" r="1.4" fill="#d54be9"/><circle cx="495.2" cy="390.0" r="1.4" fill="#d54be9"/><circle cx="478.5" cy="395.2" r="1.4" fill="#3f86f0"/><circle cx="414.4" cy="390.5" r="1.4" fill="#3f86f0"/><circle cx="478.9" cy="394.3" r="1.4" fill="#3f86f0"/><circle cx="408.0" cy="427.9" r="1.4" fill="#f7751c"/><circle cx="418.7" cy="402.9" r="1.4" fill="#d54be9"/><circle cx="484.1" cy="396.2" r="1.4" fill="#3f86f0"/><circle cx="460.1" cy="378.3" r="1.4" fill="#a69f9c"/><circle cx="415.8" cy="395.4" r="1.4" fill="#3f86f0"/><circle cx="497.2" cy="393.0" r="1.4" fill="#3f86f0"/><circle cx="405.5" cy="420.7" r="1.4" fill="#d54be9"/><circle cx="451.2" cy="391.8" r="1.4" fill="#3f86f0"/><circle cx="452.1" cy="377.1" r="1.4" fill="#d54be9"/><circle cx="405.7" cy="418.3" r="1.4" fill="#d54be9"/><circle cx="448.5" cy="391.9" r="1.4" fill="#3f86f0"/><circle cx="416.4" cy="395.1" r="1.4" fill="#3f86f0"/><circle cx="434.9" cy="382.7" r="1.4" fill="#a69f9c"/><circle cx="470.6" cy="396.3" r="1.4" fill="#3f86f0"/><circle cx="483.9" cy="389.5" r="1.4" fill="#3f86f0"/><circle cx="445.2" cy="388.0" r="1.4" fill="#a69f9c"/><circle cx="428.5" cy="396.5" r="1.4" fill="#3f86f0"/><circle cx="425.3" cy="381.3" r="1.4" fill="#a69f9c"/><circle cx="424.2" cy="395.0" r="1.4" fill="#d54be9"/><circle cx="405.0" cy="416.3" r="1.4" fill="#d54be9"/><circle cx="474.7" cy="388.0" r="1.4" fill="#d54be9"/><circle cx="459.8" cy="397.5" r="1.4" fill="#3f86f0"/><circle cx="443.7" cy="382.3" r="1.4" fill="#d54be9"/><circle cx="500.7" cy="395.0" r="1.4" fill="#a69f9c"/><circle cx="403.5" cy="418.4" r="1.4" fill="#d54be9"/><circle cx="412.8" cy="403.5" r="1.4" fill="#d54be9"/><circle cx="486.0" cy="384.7" r="1.4" fill="#a69f9c"/><circle cx="411.2" cy="411.3" r="1.4" fill="#d54be9"/><circle cx="455.4" cy="376.4" r="1.4" fill="#d54be9"/><circle cx="498.6" cy="391.1" r="1.4" fill="#a69f9c"/><circle cx="412.1" cy="398.9" r="1.4" fill="#d54be9"/><circle cx="472.3" cy="397.9" r="1.4" fill="#3f86f0"/><circle cx="417.8" cy="393.1" r="1.4" fill="#3f86f0"/><circle cx="449.8" cy="390.6" r="1.4" fill="#3f86f0"/><circle cx="457.7" cy="395.1" r="1.4" fill="#3f86f0"/><circle cx="475.6" cy="385.3" r="1.4" fill="#d54be9"/><circle cx="439.6" cy="400.2" r="1.4" fill="#3f86f0"/><circle cx="419.4" cy="396.0" r="1.4" fill="#3f86f0"/><circle cx="418.7" cy="382.5" r="1.4" fill="#a69f9c"/><circle cx="415.0" cy="394.6" r="1.4" fill="#3f86f0"/><circle cx="404.7" cy="415.6" r="1.4" fill="#d54be9"/><circle cx="491.8" cy="391.2" r="1.4" fill="#d54be9"/><circle cx="406.7" cy="424.0" r="1.4" fill="#d54be9"/><circle cx="463.7" cy="393.2" r="1.4" fill="#3f86f0"/><circle cx="400.7" cy="418.1" r="1.4" fill="#d54be9"/><circle cx="404.9" cy="422.4" r="1.4" fill="#f7751c"/><circle cx="425.6" cy="396.2" r="1.4" fill="#3f86f0"/><circle cx="432.2" cy="387.5" r="1.4" fill="#d54be9"/><circle cx="419.5" cy="403.3" r="1.4" fill="#d54be9"/><circle cx="422.0" cy="396.0" r="1.4" fill="#3f86f0"/><circle cx="472.5" cy="381.8" r="1.4" fill="#d54be9"/><circle cx="469.1" cy="379.7" r="1.4" fill="#d54be9"/><circle cx="454.7" cy="390.8" r="1.4" fill="#3f86f0"/><circle cx="433.3" cy="383.9" r="1.4" fill="#d54be9"/><circle cx="462.7" cy="379.2" r="1.4" fill="#d54be9"/><circle cx="405.7" cy="400.9" r="1.4" fill="#d54be9"/><circle cx="491.6" cy="387.7" r="1.4" fill="#a69f9c"/><circle cx="441.6" cy="384.8" r="1.4" fill="#a69f9c"/><circle cx="445.8" cy="382.9" r="1.4" fill="#a69f9c"/><circle cx="427.5" cy="389.7" r="1.4" fill="#d54be9"/><circle cx="448.1" cy="395.4" r="1.4" fill="#3f86f0"/><circle cx="460.2" cy="382.7" r="1.4" fill="#d54be9"/><circle cx="476.9" cy="395.8" r="1.4" fill="#3f86f0"/><circle cx="401.2" cy="407.7" r="1.4" fill="#d54be9"/><circle cx="404.9" cy="420.2" r="1.4" fill="#d54be9"/><circle cx="442.3" cy="396.0" r="1.4" fill="#3f86f0"/><circle cx="489.3" cy="391.5" r="1.4" fill="#3f86f0"/><circle cx="496.1" cy="393.2" r="1.4" fill="#3f86f0"/><circle cx="443.1" cy="388.6" r="1.4" fill="#a69f9c"/><circle cx="473.6" cy="380.5" r="1.4" fill="#a69f9c"/><circle cx="470.2" cy="377.8" r="1.4" fill="#d54be9"/><circle cx="400.2" cy="428.7" r="1.4" fill="#f7751c"/><circle cx="458.2" cy="392.0" r="1.4" fill="#3f86f0"/><circle cx="434.3" cy="385.2" r="1.4" fill="#d54be9"/><circle cx="425.0" cy="397.2" r="1.4" fill="#3f86f0"/><circle cx="406.3" cy="418.6" r="1.4" fill="#d54be9"/><circle cx="495.4" cy="393.0" r="1.4" fill="#3f86f0"/><circle cx="489.3" cy="390.0" r="1.4" fill="#a69f9c"/><circle cx="415.0" cy="392.8" r="1.4" fill="#a69f9c"/><circle cx="492.2" cy="393.6" r="1.4" fill="#3f86f0"/><circle cx="453.9" cy="394.2" r="1.4" fill="#3f86f0"/><circle cx="456.7" cy="397.2" r="1.4" fill="#3f86f0"/><circle cx="422.1" cy="394.1" r="1.4" fill="#d54be9"/><circle cx="441.6" cy="391.6" r="1.4" fill="#3f86f0"/><circle cx="399.0" cy="428.3" r="1.4" fill="#a69f9c"/><circle cx="411.9" cy="400.7" r="1.4" fill="#3f86f0"/><circle cx="459.2" cy="372.9" r="1.4" fill="#d54be9"/><circle cx="498.6" cy="395.6" r="1.4" fill="#3f86f0"/><circle cx="406.9" cy="396.5" r="1.4" fill="#d54be9"/><circle cx="461.3" cy="399.3" r="1.4" fill="#3f86f0"/><circle cx="402.4" cy="428.6" r="1.4" fill="#f7751c"/><circle cx="419.2" cy="387.9" r="1.4" fill="#a69f9c"/><circle cx="411.6" cy="423.8" r="1.4" fill="#a69f9c"/><circle cx="495.8" cy="390.3" r="1.4" fill="#d54be9"/><circle cx="469.7" cy="394.0" r="1.4" fill="#3f86f0"/><circle cx="439.8" cy="391.6" r="1.4" fill="#3f86f0"/><circle cx="414.2" cy="384.0" r="1.4" fill="#a69f9c"/><circle cx="496.2" cy="395.0" r="1.4" fill="#3f86f0"/><circle cx="416.9" cy="394.0" r="1.4" fill="#3f86f0"/><circle cx="400.0" cy="414.7" r="1.4" fill="#a69f9c"/><circle cx="432.9" cy="387.9" r="1.4" fill="#d54be9"/><circle cx="484.1" cy="379.4" r="1.4" fill="#d54be9"/><circle cx="452.3" cy="391.7" r="1.4" fill="#3f86f0"/><circle cx="488.7" cy="394.2" r="1.4" fill="#3f86f0"/><circle cx="488.0" cy="387.1" r="1.4" fill="#d54be9"/><circle cx="475.7" cy="385.5" r="1.4" fill="#a69f9c"/><circle cx="498.4" cy="394.4" r="1.4" fill="#3f86f0"/><circle cx="479.9" cy="396.4" r="1.4" fill="#3f86f0"/><circle cx="491.0" cy="297.5" r="1.4" fill="#d54be9"/><circle cx="350.5" cy="297.5" r="1.4" fill="#3f86f0"/><circle cx="468.0" cy="321.2" r="1.4" fill="#a69f9c"/><circle cx="394.2" cy="333.4" r="1.4" fill="#d54be9"/><circle cx="425.2" cy="333.4" r="1.4" fill="#d54be9"/><circle cx="366.7" cy="297.5" r="1.4" fill="#3f86f0"/><circle cx="363.9" cy="321.2" r="1.4" fill="#f7751c"/><circle cx="495.0" cy="309.3" r="1.4" fill="#3f86f0"/><circle cx="385.0" cy="309.3" r="1.4" fill="#3f86f0"/><circle cx="344.9" cy="333.4" r="1.4" fill="#3f86f0"/><circle cx="402.8" cy="333.4" r="1.4" fill="#f7751c"/><circle cx="363.4" cy="333.4" r="1.4" fill="#3f86f0"/><circle cx="470.7" cy="297.5" r="1.4" fill="#d54be9"/><circle cx="481.0" cy="309.3" r="1.4" fill="#3f86f0"/><circle cx="467.6" cy="309.3" r="1.4" fill="#3f86f0"/><circle cx="375.8" cy="309.3" r="1.4" fill="#f7751c"/><circle cx="464.8" cy="297.5" r="1.4" fill="#3f86f0"/><circle cx="461.7" cy="309.3" r="1.4" fill="#3f86f0"/><circle cx="396.9" cy="309.3" r="1.4" fill="#d54be9"/><circle cx="364.2" cy="297.5" r="1.4" fill="#f7751c"/><circle cx="471.6" cy="297.5" r="1.4" fill="#d54be9"/><circle cx="442.8" cy="321.2" r="1.4" fill="#d54be9"/><circle cx="342.0" cy="297.5" r="1.4" fill="#f7751c"/><circle cx="366.2" cy="345.6" r="1.4" fill="#f7751c"/><circle cx="361.2" cy="309.3" r="1.4" fill="#3f86f0"/><circle cx="353.1" cy="297.5" r="1.4" fill="#f7751c"/><circle cx="416.4" cy="321.2" r="1.4" fill="#d54be9"/><circle cx="328.5" cy="297.5" r="1.4" fill="#3f86f0"/><circle cx="398.8" cy="297.5" r="1.4" fill="#3f86f0"/><circle cx="385.0" cy="309.3" r="1.4" fill="#3f86f0"/><circle cx="445.0" cy="297.5" r="1.4" fill="#d54be9"/><circle cx="394.4" cy="297.5" r="1.4" fill="#d54be9"/><circle cx="474.7" cy="321.2" r="1.4" fill="#3f86f0"/><circle cx="455.1" cy="321.2" r="1.4" fill="#3f86f0"/><circle cx="473.6" cy="297.5" r="1.4" fill="#a69f9c"/><circle cx="400.5" cy="309.3" r="1.4" fill="#d54be9"/><circle cx="460.7" cy="333.4" r="1.4" fill="#d54be9"/><circle cx="406.8" cy="309.3" r="1.4" fill="#a69f9c"/><circle cx="323.6" cy="333.4" r="1.4" fill="#f7751c"/><circle cx="394.9" cy="297.5" r="1.4" fill="#f7751c"/><circle cx="358.8" cy="297.5" r="1.4" fill="#3f86f0"/><circle cx="477.4" cy="309.3" r="1.4" fill="#3f86f0"/><circle cx="500.2" cy="321.2" r="1.4" fill="#3f86f0"/><circle cx="481.7" cy="321.2" r="1.4" fill="#d54be9"/><circle cx="339.0" cy="297.5" r="1.4" fill="#a69f9c"/><circle cx="393.3" cy="309.3" r="1.4" fill="#d54be9"/><circle cx="408.6" cy="297.5" r="1.4" fill="#d54be9"/><circle cx="416.6" cy="345.6" r="1.4" fill="#d54be9"/><circle cx="417.8" cy="321.2" r="1.4" fill="#d54be9"/><circle cx="462.8" cy="333.4" r="1.4" fill="#3f86f0"/><circle cx="337.5" cy="297.5" r="1.4" fill="#f7751c"/><circle cx="436.7" cy="345.6" r="1.4" fill="#d54be9"/><circle cx="455.1" cy="297.5" r="1.4" fill="#d54be9"/><circle cx="331.7" cy="297.5" r="1.4" fill="#f7751c"/><circle cx="342.7" cy="333.4" r="1.4" fill="#f7751c"/><circle cx="394.6" cy="297.5" r="1.4" fill="#f7751c"/><circle cx="379.3" cy="321.2" r="1.4" fill="#a69f9c"/><circle cx="335.8" cy="321.2" r="1.4" fill="#f7751c"/><circle cx="384.7" cy="309.3" r="1.4" fill="#f7751c"/><circle cx="472.9" cy="309.3" r="1.4" fill="#3f86f0"/><circle cx="373.6" cy="297.5" r="1.4" fill="#3f86f0"/><circle cx="390.6" cy="333.4" r="1.4" fill="#f7751c"/><circle cx="460.6" cy="309.3" r="1.4" fill="#3f86f0"/><circle cx="388.8" cy="333.4" r="1.4" fill="#d54be9"/><circle cx="484.8" cy="309.3" r="1.4" fill="#3f86f0"/><circle cx="495.6" cy="297.5" r="1.4" fill="#3f86f0"/><circle cx="452.4" cy="297.5" r="1.4" fill="#3f86f0"/><circle cx="457.9" cy="333.4" r="1.4" fill="#3f86f0"/><circle cx="344.5" cy="297.5" r="1.4" fill="#3f86f0"/><circle cx="461.1" cy="345.6" r="1.4" fill="#3f86f0"/><circle cx="392.2" cy="309.3" r="1.4" fill="#d54be9"/><circle cx="396.3" cy="297.5" r="1.4" fill="#f7751c"/><circle cx="464.4" cy="297.5" r="1.4" fill="#3f86f0"/><circle cx="487.4" cy="297.5" r="1.4" fill="#d54be9"/><circle cx="337.1" cy="333.4" r="1.4" fill="#f7751c"/><circle cx="361.8" cy="321.2" r="1.4" fill="#f7751c"/><circle cx="331.5" cy="333.4" r="1.4" fill="#3f86f0"/><circle cx="456.5" cy="321.2" r="1.4" fill="#3f86f0"/><circle cx="428.7" cy="333.4" r="1.4" fill="#d54be9"/><circle cx="392.7" cy="297.5" r="1.4" fill="#3f86f0"/><circle cx="336.1" cy="297.5" r="1.4" fill="#3f86f0"/><circle cx="329.3" cy="297.5" r="1.4" fill="#a69f9c"/><circle cx="493.6" cy="297.5" r="1.4" fill="#3f86f0"/><circle cx="346.2" cy="297.5" r="1.4" fill="#3f86f0"/><circle cx="331.2" cy="297.5" r="1.4" fill="#3f86f0"/><circle cx="468.2" cy="297.5" r="1.4" fill="#d54be9"/><circle cx="350.7" cy="297.5" r="1.4" fill="#3f86f0"/><circle cx="380.4" cy="297.5" r="1.4" fill="#a69f9c"/><circle cx="448.8" cy="297.5" r="1.4" fill="#d54be9"/><circle cx="324.8" cy="309.3" r="1.4" fill="#3f86f0"/><circle cx="424.1" cy="297.5" r="1.4" fill="#a69f9c"/><circle cx="351.3" cy="297.5" r="1.4" fill="#3f86f0"/><circle cx="446.4" cy="321.2" r="1.4" fill="#d54be9"/><circle cx="342.8" cy="333.4" r="1.4" fill="#a69f9c"/><circle cx="484.6" cy="309.3" r="1.4" fill="#a69f9c"/><circle cx="442.4" cy="297.5" r="1.4" fill="#a69f9c"/><circle cx="432.6" cy="297.5" r="1.4" fill="#d54be9"/><circle cx="393.2" cy="297.5" r="1.4" fill="#3f86f0"/><circle cx="363.5" cy="321.2" r="1.4" fill="#f7751c"/><circle cx="364.6" cy="333.4" r="1.4" fill="#3f86f0"/><circle cx="438.5" cy="297.5" r="1.4" fill="#d54be9"/><circle cx="443.8" cy="333.4" r="1.4" fill="#d54be9"/><circle cx="448.7" cy="345.6" r="1.4" fill="#3f86f0"/><circle cx="491.7" cy="321.2" r="1.4" fill="#d54be9"/><circle cx="366.3" cy="297.5" r="1.4" fill="#a69f9c"/><circle cx="402.6" cy="309.3" r="1.4" fill="#f7751c"/><circle cx="335.1" cy="333.4" r="1.4" fill="#f7751c"/><circle cx="400.5" cy="309.3" r="1.4" fill="#3f86f0"/><circle cx="358.1" cy="345.6" r="1.4" fill="#a69f9c"/><circle cx="367.0" cy="333.4" r="1.4" fill="#f7751c"/><circle cx="447.4" cy="333.4" r="1.4" fill="#3f86f0"/><circle cx="435.0" cy="333.4" r="1.4" fill="#a69f9c"/><circle cx="407.0" cy="321.2" r="1.4" fill="#d54be9"/><circle cx="411.8" cy="297.5" r="1.4" fill="#a69f9c"/><circle cx="380.7" cy="309.3" r="1.4" fill="#3f86f0"/><circle cx="495.6" cy="297.5" r="1.4" fill="#d54be9"/><circle cx="469.2" cy="297.5" r="1.4" fill="#d54be9"/><circle cx="486.6" cy="297.5" r="1.4" fill="#3f86f0"/><circle cx="475.4" cy="297.5" r="1.4" fill="#d54be9"/><circle cx="467.9" cy="297.5" r="1.4" fill="#3f86f0"/><circle cx="329.7" cy="309.3" r="1.4" fill="#3f86f0"/><circle cx="354.2" cy="333.4" r="1.4" fill="#3f86f0"/><circle cx="392.0" cy="297.5" r="1.4" fill="#3f86f0"/><circle cx="335.2" cy="297.5" r="1.4" fill="#f7751c"/><circle cx="493.9" cy="333.4" r="1.4" fill="#a69f9c"/><circle cx="445.8" cy="297.5" r="1.4" fill="#a69f9c"/><circle cx="347.7" cy="297.5" r="1.4" fill="#3f86f0"/><circle cx="439.3" cy="321.2" r="1.4" fill="#a69f9c"/><circle cx="430.7" cy="297.5" r="1.4" fill="#d54be9"/><circle cx="414.5" cy="321.2" r="1.4" fill="#d54be9"/><circle cx="350.9" cy="321.2" r="1.4" fill="#f7751c"/><circle cx="495.3" cy="321.2" r="1.4" fill="#3f86f0"/><circle cx="372.2" cy="309.3" r="1.4" fill="#3f86f0"/><circle cx="492.1" cy="297.5" r="1.4" fill="#d54be9"/><circle cx="458.6" cy="297.5" r="1.4" fill="#3f86f0"/><circle cx="502.7" cy="333.4" r="1.4" fill="#d54be9"/><circle cx="412.8" cy="321.2" r="1.4" fill="#3f86f0"/><circle cx="490.0" cy="297.5" r="1.4" fill="#d54be9"/><circle cx="399.3" cy="297.5" r="1.4" fill="#d54be9"/><circle cx="438.2" cy="297.5" r="1.4" fill="#a69f9c"/><circle cx="416.9" cy="297.5" r="1.4" fill="#d54be9"/><circle cx="403.4" cy="333.4" r="1.4" fill="#3f86f0"/><circle cx="494.5" cy="297.5" r="1.4" fill="#3f86f0"/><circle cx="490.3" cy="333.4" r="1.4" fill="#a69f9c"/><circle cx="465.6" cy="297.5" r="1.4" fill="#3f86f0"/><circle cx="393.9" cy="297.5" r="1.4" fill="#d54be9"/><circle cx="451.4" cy="297.5" r="1.4" fill="#d54be9"/><circle cx="472.8" cy="297.5" r="1.4" fill="#d54be9"/><circle cx="420.7" cy="297.5" r="1.4" fill="#d54be9"/><circle cx="393.0" cy="333.4" r="1.4" fill="#d54be9"/><circle cx="376.5" cy="333.4" r="1.4" fill="#3f86f0"/><circle cx="393.0" cy="333.4" r="1.4" fill="#d54be9"/><circle cx="456.4" cy="321.2" r="1.4" fill="#3f86f0"/><circle cx="387.4" cy="321.2" r="1.4" fill="#3f86f0"/><circle cx="335.5" cy="333.4" r="1.4" fill="#3f86f0"/><circle cx="390.3" cy="297.5" r="1.4" fill="#f7751c"/><circle cx="451.3" cy="297.5" r="1.4" fill="#a69f9c"/><circle cx="452.7" cy="345.6" r="1.4" fill="#d54be9"/><circle cx="490.7" cy="297.5" r="1.4" fill="#d54be9"/><circle cx="366.6" cy="309.3" r="1.4" fill="#3f86f0"/><circle cx="329.5" cy="309.3" r="1.4" fill="#a69f9c"/><circle cx="386.5" cy="297.5" r="1.4" fill="#3f86f0"/><circle cx="463.9" cy="297.5" r="1.4" fill="#d54be9"/><circle cx="485.2" cy="345.6" r="1.4" fill="#3f86f0"/><circle cx="377.1" cy="309.3" r="1.4" fill="#3f86f0"/><circle cx="416.1" cy="309.3" r="1.4" fill="#d54be9"/><circle cx="334.7" cy="321.2" r="1.4" fill="#3f86f0"/><circle cx="471.9" cy="297.5" r="1.4" fill="#3f86f0"/><circle cx="406.2" cy="309.3" r="1.4" fill="#d54be9"/><circle cx="404.2" cy="297.5" r="1.4" fill="#d54be9"/><circle cx="353.8" cy="321.2" r="1.4" fill="#a69f9c"/><circle cx="468.9" cy="297.5" r="1.4" fill="#d54be9"/><circle cx="426.3" cy="333.4" r="1.4" fill="#d54be9"/><circle cx="363.2" cy="297.5" r="1.4" fill="#3f86f0"/><circle cx="383.8" cy="321.2" r="1.4" fill="#a69f9c"/><circle cx="409.7" cy="333.4" r="1.4" fill="#d54be9"/><circle cx="492.2" cy="297.5" r="1.4" fill="#3f86f0"/><circle cx="379.4" cy="309.3" r="1.4" fill="#3f86f0"/><circle cx="475.7" cy="297.5" r="1.4" fill="#d54be9"/><circle cx="332.9" cy="345.6" r="1.4" fill="#f7751c"/><circle cx="373.7" cy="345.6" r="1.4" fill="#3f86f0"/><circle cx="367.7" cy="297.5" r="1.4" fill="#f7751c"/><circle cx="386.5" cy="321.2" r="1.4" fill="#f7751c"/><circle cx="488.4" cy="309.3" r="1.4" fill="#3f86f0"/><circle cx="385.6" cy="297.5" r="1.4" fill="#3f86f0"/><circle cx="405.0" cy="297.5" r="1.4" fill="#d54be9"/><circle cx="397.8" cy="333.4" r="1.4" fill="#f7751c"/><circle cx="388.6" cy="309.3" r="1.4" fill="#d54be9"/><circle cx="471.8" cy="297.5" r="1.4" fill="#d54be9"/><circle cx="356.8" cy="309.3" r="1.4" fill="#f7751c"/><circle cx="388.6" cy="309.3" r="1.4" fill="#d54be9"/><circle cx="378.5" cy="297.5" r="1.4" fill="#3f86f0"/><circle cx="481.4" cy="309.3" r="1.4" fill="#3f86f0"/><circle cx="370.5" cy="309.3" r="1.4" fill="#f7751c"/><circle cx="453.0" cy="297.5" r="1.4" fill="#d54be9"/><circle cx="358.7" cy="345.6" r="1.4" fill="#f7751c"/><circle cx="446.0" cy="297.5" r="1.4" fill="#3f86f0"/><circle cx="441.2" cy="297.5" r="1.4" fill="#3f86f0"/><circle cx="434.0" cy="297.5" r="1.4" fill="#a69f9c"/><circle cx="453.5" cy="333.4" r="1.4" fill="#3f86f0"/><circle cx="362.7" cy="297.5" r="1.4" fill="#3f86f0"/><circle cx="474.2" cy="309.3" r="1.4" fill="#3f86f0"/><circle cx="469.6" cy="333.4" r="1.4" fill="#3f86f0"/><circle cx="429.9" cy="333.4" r="1.4" fill="#d54be9"/><circle cx="500.3" cy="321.2" r="1.4" fill="#3f86f0"/><circle cx="369.8" cy="333.4" r="1.4" fill="#3f86f0"/><circle cx="401.0" cy="321.2" r="1.4" fill="#d54be9"/><circle cx="428.6" cy="333.4" r="1.4" fill="#3f86f0"/><circle cx="484.2" cy="297.5" r="1.4" fill="#d54be9"/><circle cx="359.8" cy="333.4" r="1.4" fill="#f7751c"/><circle cx="424.3" cy="297.5" r="1.4" fill="#d54be9"/><circle cx="421.6" cy="333.4" r="1.4" fill="#d54be9"/><circle cx="386.7" cy="321.2" r="1.4" fill="#f7751c"/><circle cx="329.3" cy="345.6" r="1.4" fill="#f7751c"/><circle cx="329.5" cy="321.2" r="1.4" fill="#f7751c"/><circle cx="341.2" cy="297.5" r="1.4" fill="#a69f9c"/><circle cx="341.1" cy="297.5" r="1.4" fill="#3f86f0"/><circle cx="365.1" cy="321.2" r="1.4" fill="#f7751c"/><circle cx="460.7" cy="345.6" r="1.4" fill="#3f86f0"/><circle cx="332.2" cy="321.2" r="1.4" fill="#a69f9c"/><circle cx="402.9" cy="297.5" r="1.4" fill="#d54be9"/><circle cx="457.2" cy="297.5" r="1.4" fill="#a69f9c"/><circle cx="480.7" cy="297.5" r="1.4" fill="#d54be9"/><circle cx="380.6" cy="297.5" r="1.4" fill="#3f86f0"/><circle cx="445.1" cy="345.6" r="1.4" fill="#a69f9c"/><circle cx="467.4" cy="345.6" r="1.4" fill="#a69f9c"/><circle cx="409.6" cy="297.5" r="1.4" fill="#d54be9"/><circle cx="447.7" cy="297.5" r="1.4" fill="#3f86f0"/><circle cx="369.8" cy="345.6" r="1.4" fill="#3f86f0"/><circle cx="420.9" cy="297.5" r="1.4" fill="#d54be9"/><circle cx="455.6" cy="321.2" r="1.4" fill="#a69f9c"/><circle cx="331.9" cy="333.4" r="1.4" fill="#f7751c"/><circle cx="370.7" cy="321.2" r="1.4" fill="#3f86f0"/><circle cx="410.0" cy="309.3" r="1.4" fill="#a69f9c"/><circle cx="403.8" cy="333.4" r="1.4" fill="#d54be9"/><circle cx="503.6" cy="321.2" r="1.4" fill="#a69f9c"/><circle cx="354.3" cy="297.5" r="1.4" fill="#3f86f0"/><circle cx="376.8" cy="297.5" r="1.4" fill="#3f86f0"/><circle cx="381.1" cy="309.3" r="1.4" fill="#f7751c"/><circle cx="425.0" cy="333.4" r="1.4" fill="#a69f9c"/><circle cx="420.5" cy="297.5" r="1.4" fill="#d54be9"/><circle cx="487.2" cy="297.5" r="1.4" fill="#d54be9"/><circle cx="433.6" cy="345.6" r="1.4" fill="#3f86f0"/><circle cx="327.9" cy="309.3" r="1.4" fill="#3f86f0"/><circle cx="403.4" cy="321.2" r="1.4" fill="#d54be9"/><circle cx="434.5" cy="309.3" r="1.4" fill="#3f86f0"/><circle cx="461.7" cy="297.5" r="1.4" fill="#a69f9c"/><circle cx="441.8" cy="297.5" r="1.4" fill="#d54be9"/><circle cx="385.3" cy="321.2" r="1.4" fill="#f7751c"/><circle cx="470.6" cy="333.4" r="1.4" fill="#3f86f0"/><circle cx="388.3" cy="309.3" r="1.4" fill="#d54be9"/><circle cx="403.7" cy="297.5" r="1.4" fill="#d54be9"/><circle cx="440.5" cy="297.5" r="1.4" fill="#d54be9"/><circle cx="359.1" cy="297.5" r="1.4" fill="#a69f9c"/><circle cx="403.2" cy="297.5" r="1.4" fill="#3f86f0"/><circle cx="406.4" cy="309.3" r="1.4" fill="#3f86f0"/><circle cx="477.1" cy="297.5" r="1.4" fill="#d54be9"/><circle cx="427.8" cy="333.4" r="1.4" fill="#3f86f0"/><circle cx="422.1" cy="297.5" r="1.4" fill="#a69f9c"/><circle cx="486.6" cy="297.5" r="1.4" fill="#d54be9"/><circle cx="350.2" cy="321.2" r="1.4" fill="#3f86f0"/><circle cx="492.9" cy="309.3" r="1.4" fill="#3f86f0"/><circle cx="422.6" cy="297.5" r="1.4" fill="#d54be9"/><circle cx="442.5" cy="297.5" r="1.4" fill="#3f86f0"/><circle cx="374.1" cy="309.3" r="1.4" fill="#a69f9c"/><circle cx="451.7" cy="321.2" r="1.4" fill="#a69f9c"/><circle cx="475.1" cy="297.5" r="1.4" fill="#d54be9"/><circle cx="423.2" cy="333.4" r="1.4" fill="#a69f9c"/><circle cx="389.9" cy="297.5" r="1.4" fill="#3f86f0"/><circle cx="415.0" cy="297.5" r="1.4" fill="#d54be9"/><circle cx="361.7" cy="345.6" r="1.4" fill="#3f86f0"/><circle cx="378.1" cy="321.2" r="1.4" fill="#3f86f0"/><circle cx="439.2" cy="321.2" r="1.4" fill="#a69f9c"/><circle cx="333.3" cy="345.6" r="1.4" fill="#f7751c"/><circle cx="474.9" cy="345.6" r="1.4" fill="#3f86f0"/><circle cx="446.1" cy="333.4" r="1.4" fill="#3f86f0"/><circle cx="491.1" cy="297.5" r="1.4" fill="#d54be9"/><circle cx="404.1" cy="309.3" r="1.4" fill="#d54be9"/><circle cx="360.4" cy="309.3" r="1.4" fill="#a69f9c"/><circle cx="427.7" cy="297.5" r="1.4" fill="#d54be9"/><circle cx="406.4" cy="333.4" r="1.4" fill="#a69f9c"/><circle cx="346.4" cy="333.4" r="1.4" fill="#f7751c"/><circle cx="397.4" cy="321.2" r="1.4" fill="#d54be9"/><circle cx="346.5" cy="297.5" r="1.4" fill="#f7751c"/><circle cx="367.9" cy="309.3" r="1.4" fill="#3f86f0"/><circle cx="436.2" cy="297.5" r="1.4" fill="#3f86f0"/><circle cx="484.5" cy="297.5" r="1.4" fill="#a69f9c"/><circle cx="450.7" cy="297.5" r="1.4" fill="#d54be9"/><circle cx="422.6" cy="309.3" r="1.4" fill="#d54be9"/><circle cx="429.4" cy="297.5" r="1.4" fill="#d54be9"/><circle cx="498.3" cy="321.2" r="1.4" fill="#3f86f0"/><circle cx="381.7" cy="321.2" r="1.4" fill="#f7751c"/><circle cx="350.1" cy="297.5" r="1.4" fill="#a69f9c"/><circle cx="399.3" cy="309.3" r="1.4" fill="#3f86f0"/><circle cx="473.7" cy="297.5" r="1.4" fill="#d54be9"/><circle cx="382.0" cy="297.5" r="1.4" fill="#f7751c"/><circle cx="455.0" cy="297.5" r="1.4" fill="#3f86f0"/><circle cx="331.1" cy="321.2" r="1.4" fill="#3f86f0"/><circle cx="355.1" cy="297.5" r="1.4" fill="#f7751c"/><circle cx="404.6" cy="297.5" r="1.4" fill="#d54be9"/><circle cx="349.2" cy="345.6" r="1.4" fill="#3f86f0"/><circle cx="325.3" cy="333.4" r="1.4" fill="#3f86f0"/><circle cx="373.2" cy="297.5" r="1.4" fill="#f7751c"/><circle cx="421.4" cy="321.2" r="1.4" fill="#d54be9"/><circle cx="368.3" cy="333.4" r="1.4" fill="#3f86f0"/><circle cx="370.2" cy="309.3" r="1.4" fill="#f7751c"/><circle cx="446.5" cy="321.2" r="1.4" fill="#d54be9"/><circle cx="406.8" cy="297.5" r="1.4" fill="#a69f9c"/><circle cx="480.0" cy="297.5" r="1.4" fill="#a69f9c"/><circle cx="467.5" cy="297.5" r="1.4" fill="#d54be9"/><circle cx="429.6" cy="297.5" r="1.4" fill="#3f86f0"/><circle cx="469.2" cy="297.5" r="1.4" fill="#d54be9"/><circle cx="472.7" cy="297.5" r="1.4" fill="#3f86f0"/><circle cx="437.9" cy="333.4" r="1.4" fill="#3f86f0"/><circle cx="473.4" cy="333.4" r="1.4" fill="#3f86f0"/><circle cx="336.7" cy="309.3" r="1.4" fill="#f7751c"/><circle cx="324.9" cy="297.5" r="1.4" fill="#3f86f0"/><circle cx="383.5" cy="297.5" r="1.4" fill="#3f86f0"/><circle cx="378.4" cy="297.5" r="1.4" fill="#3f86f0"/><circle cx="362.7" cy="297.5" r="1.4" fill="#3f86f0"/><circle cx="424.7" cy="297.5" r="1.4" fill="#d54be9"/><circle cx="384.2" cy="297.5" r="1.4" fill="#3f86f0"/><circle cx="328.4" cy="309.3" r="1.4" fill="#3f86f0"/><circle cx="399.2" cy="333.4" r="1.4" fill="#3f86f0"/><circle cx="426.5" cy="297.5" r="1.4" fill="#d54be9"/><circle cx="458.7" cy="297.5" r="1.4" fill="#d54be9"/><circle cx="340.6" cy="297.5" r="1.4" fill="#3f86f0"/><circle cx="479.1" cy="297.5" r="1.4" fill="#3f86f0"/><circle cx="446.9" cy="297.5" r="1.4" fill="#d54be9"/><circle cx="411.4" cy="297.5" r="1.4" fill="#3f86f0"/><circle cx="371.4" cy="297.5" r="1.4" fill="#3f86f0"/><circle cx="423.5" cy="297.5" r="1.4" fill="#d54be9"/><circle cx="325.4" cy="297.5" r="1.4" fill="#f7751c"/><circle cx="401.4" cy="297.5" r="1.4" fill="#f7751c"/><circle cx="457.5" cy="321.2" r="1.4" fill="#3f86f0"/><circle cx="428.3" cy="297.5" r="1.4" fill="#a69f9c"/><circle cx="334.1" cy="297.5" r="1.4" fill="#3f86f0"/><circle cx="390.3" cy="321.2" r="1.4" fill="#d54be9"/><circle cx="441.7" cy="321.2" r="1.4" fill="#3f86f0"/><circle cx="429.8" cy="309.3" r="1.4" fill="#3f86f0"/><circle cx="471.1" cy="297.5" r="1.4" fill="#a69f9c"/><circle cx="492.8" cy="297.5" r="1.4" fill="#3f86f0"/><circle cx="460.8" cy="297.5" r="1.4" fill="#a69f9c"/><circle cx="477.0" cy="333.4" r="1.4" fill="#3f86f0"/><circle cx="366.0" cy="297.5" r="1.4" fill="#a69f9c"/><circle cx="446.1" cy="297.5" r="1.4" fill="#d54be9"/><circle cx="484.4" cy="297.5" r="1.4" fill="#3f86f0"/><circle cx="421.5" cy="297.5" r="1.4" fill="#d54be9"/><circle cx="447.9" cy="297.5" r="1.4" fill="#3f86f0"/><circle cx="369.1" cy="297.5" r="1.4" fill="#3f86f0"/><circle cx="476.4" cy="297.5" r="1.4" fill="#3f86f0"/><circle cx="369.9" cy="333.4" r="1.4" fill="#f7751c"/><circle cx="330.5" cy="297.5" r="1.4" fill="#3f86f0"/><circle cx="439.5" cy="345.6" r="1.4" fill="#a69f9c"/><circle cx="460.4" cy="309.3" r="1.4" fill="#a69f9c"/><circle cx="449.4" cy="297.5" r="1.4" fill="#d54be9"/><circle cx="439.3" cy="333.4" r="1.4" fill="#3f86f0"/><circle cx="461.9" cy="309.3" r="1.4" fill="#a69f9c"/><circle cx="402.9" cy="297.5" r="1.4" fill="#d54be9"/><circle cx="328.0" cy="297.5" r="1.4" fill="#3f86f0"/><circle cx="503.6" cy="321.2" r="1.4" fill="#a69f9c"/><circle cx="440.4" cy="321.2" r="1.4" fill="#3f86f0"/><circle cx="395.9" cy="333.4" r="1.4" fill="#d54be9"/><circle cx="435.2" cy="297.5" r="1.4" fill="#d54be9"/><circle cx="488.0" cy="297.5" r="1.4" fill="#d54be9"/><circle cx="396.9" cy="297.5" r="1.4" fill="#f7751c"/><circle cx="356.0" cy="297.5" r="1.4" fill="#f7751c"/><circle cx="377.0" cy="297.5" r="1.4" fill="#3f86f0"/><circle cx="468.0" cy="297.5" r="1.4" fill="#3f86f0"/><circle cx="407.4" cy="297.5" r="1.4" fill="#d54be9"/><circle cx="479.0" cy="297.5" r="1.4" fill="#3f86f0"/><circle cx="344.2" cy="297.5" r="1.4" fill="#3f86f0"/><circle cx="489.6" cy="345.6" r="1.4" fill="#3f86f0"/><circle cx="332.1" cy="297.5" r="1.4" fill="#f7751c"/><circle cx="395.0" cy="309.3" r="1.4" fill="#3f86f0"/><circle cx="384.0" cy="297.5" r="1.4" fill="#3f86f0"/><circle cx="421.4" cy="321.2" r="1.4" fill="#d54be9"/><circle cx="406.9" cy="309.3" r="1.4" fill="#d54be9"/><circle cx="480.6" cy="297.5" r="1.4" fill="#3f86f0"/><circle cx="445.6" cy="297.5" r="1.4" fill="#3f86f0"/><circle cx="364.8" cy="309.3" r="1.4" fill="#a69f9c"/><circle cx="368.2" cy="333.4" r="1.4" fill="#3f86f0"/><circle cx="419.6" cy="333.4" r="1.4" fill="#3f86f0"/><circle cx="442.9" cy="333.4" r="1.4" fill="#3f86f0"/><circle cx="465.3" cy="297.5" r="1.4" fill="#a69f9c"/><circle cx="333.5" cy="333.4" r="1.4" fill="#f7751c"/><circle cx="487.1" cy="297.5" r="1.4" fill="#d54be9"/><circle cx="470.2" cy="297.5" r="1.4" fill="#d54be9"/><circle cx="452.9" cy="321.2" r="1.4" fill="#d54be9"/><circle cx="485.8" cy="333.4" r="1.4" fill="#3f86f0"/><circle cx="450.1" cy="321.2" r="1.4" fill="#3f86f0"/><circle cx="446.5" cy="333.4" r="1.4" fill="#3f86f0"/><circle cx="449.2" cy="297.5" r="1.4" fill="#d54be9"/><circle cx="385.3" cy="297.5" r="1.4" fill="#3f86f0"/><circle cx="448.7" cy="309.3" r="1.4" fill="#3f86f0"/><circle cx="406.5" cy="297.5" r="1.4" fill="#d54be9"/><circle cx="436.8" cy="321.2" r="1.4" fill="#a69f9c"/><circle cx="430.1" cy="297.5" r="1.4" fill="#3f86f0"/><circle cx="349.5" cy="297.5" r="1.4" fill="#3f86f0"/><circle cx="476.8" cy="297.5" r="1.4" fill="#d54be9"/><circle cx="381.7" cy="297.5" r="1.4" fill="#3f86f0"/><circle cx="440.4" cy="345.6" r="1.4" fill="#3f86f0"/><circle cx="371.3" cy="297.5" r="1.4" fill="#3f86f0"/><circle cx="357.4" cy="321.2" r="1.4" fill="#3f86f0"/><circle cx="396.0" cy="297.5" r="1.4" fill="#d54be9"/><circle cx="339.1" cy="333.4" r="1.4" fill="#f7751c"/><circle cx="471.6" cy="321.2" r="1.4" fill="#a69f9c"/><circle cx="385.2" cy="333.4" r="1.4" fill="#3f86f0"/><circle cx="337.6" cy="297.5" r="1.4" fill="#3f86f0"/><circle cx="339.5" cy="333.4" r="1.4" fill="#3f86f0"/><circle cx="368.0" cy="345.6" r="1.4" fill="#f7751c"/><circle cx="359.9" cy="321.2" r="1.4" fill="#f7751c"/><circle cx="438.1" cy="309.3" r="1.4" fill="#3f86f0"/><circle cx="367.1" cy="321.2" r="1.4" fill="#f7751c"/><circle cx="361.0" cy="333.4" r="1.4" fill="#3f86f0"/><circle cx="384.4" cy="309.3" r="1.4" fill="#f7751c"/><circle cx="451.5" cy="297.5" r="1.4" fill="#3f86f0"/><circle cx="367.8" cy="297.5" r="1.4" fill="#f7751c"/><circle cx="414.0" cy="297.5" r="1.4" fill="#d54be9"/><circle cx="357.9" cy="297.5" r="1.4" fill="#f7751c"/><circle cx="412.2" cy="297.5" r="1.4" fill="#d54be9"/><circle cx="373.1" cy="333.4" r="1.4" fill="#3f86f0"/><circle cx="456.6" cy="297.5" r="1.4" fill="#a69f9c"/><circle cx="437.6" cy="297.5" r="1.4" fill="#3f86f0"/><circle cx="464.0" cy="309.3" r="1.4" fill="#3f86f0"/><circle cx="479.0" cy="297.5" r="1.4" fill="#d54be9"/><circle cx="403.8" cy="297.5" r="1.4" fill="#d54be9"/><circle cx="393.9" cy="321.2" r="1.4" fill="#3f86f0"/><circle cx="486.7" cy="297.5" r="1.4" fill="#d54be9"/><circle cx="328.9" cy="297.5" r="1.4" fill="#f7751c"/><circle cx="399.8" cy="321.2" r="1.4" fill="#d54be9"/><circle cx="323.6" cy="345.6" r="1.4" fill="#f7751c"/><circle cx="420.1" cy="345.6" r="1.4" fill="#d54be9"/><circle cx="477.8" cy="333.4" r="1.4" fill="#3f86f0"/><circle cx="387.8" cy="309.3" r="1.4" fill="#3f86f0"/><circle cx="366.3" cy="297.5" r="1.4" fill="#f7751c"/><circle cx="373.5" cy="309.3" r="1.4" fill="#3f86f0"/><circle cx="405.3" cy="297.5" r="1.4" fill="#d54be9"/><circle cx="429.0" cy="345.6" r="1.4" fill="#a69f9c"/><circle cx="367.5" cy="321.2" r="1.4" fill="#3f86f0"/><circle cx="350.6" cy="333.4" r="1.4" fill="#f7751c"/><circle cx="394.2" cy="297.5" r="1.4" fill="#3f86f0"/><circle cx="494.6" cy="297.5" r="1.4" fill="#3f86f0"/><circle cx="345.2" cy="297.5" r="1.4" fill="#3f86f0"/><circle cx="427.1" cy="297.5" r="1.4" fill="#d54be9"/><circle cx="387.8" cy="321.2" r="1.4" fill="#d54be9"/><circle cx="432.3" cy="333.4" r="1.4" fill="#3f86f0"/><circle cx="391.3" cy="297.5" r="1.4" fill="#f7751c"/><circle cx="384.2" cy="321.2" r="1.4" fill="#f7751c"/><circle cx="424.6" cy="297.5" r="1.4" fill="#d54be9"/><circle cx="495.3" cy="321.2" r="1.4" fill="#3f86f0"/><circle cx="339.2" cy="333.4" r="1.4" fill="#3f86f0"/><circle cx="411.0" cy="321.2" r="1.4" fill="#d54be9"/><circle cx="425.8" cy="297.5" r="1.4" fill="#d54be9"/><circle cx="431.6" cy="297.5" r="1.4" fill="#3f86f0"/><circle cx="406.8" cy="309.3" r="1.4" fill="#d54be9"/><circle cx="477.8" cy="309.3" r="1.4" fill="#3f86f0"/><circle cx="472.6" cy="309.3" r="1.4" fill="#d54be9"/><circle cx="472.5" cy="297.5" r="1.4" fill="#d54be9"/><circle cx="324.7" cy="333.4" r="1.4" fill="#f7751c"/><circle cx="477.0" cy="297.5" r="1.4" fill="#a69f9c"/><circle cx="488.0" cy="297.5" r="1.4" fill="#d54be9"/><circle cx="412.5" cy="309.3" r="1.4" fill="#d54be9"/><circle cx="366.5" cy="297.5" r="1.4" fill="#f7751c"/><circle cx="441.6" cy="297.5" r="1.4" fill="#a69f9c"/><circle cx="375.6" cy="309.3" r="1.4" fill="#3f86f0"/><circle cx="406.1" cy="297.5" r="1.4" fill="#a69f9c"/><circle cx="398.0" cy="297.5" r="1.4" fill="#f7751c"/><circle cx="408.2" cy="297.5" r="1.4" fill="#d54be9"/><circle cx="455.3" cy="297.5" r="1.4" fill="#d54be9"/><circle cx="339.4" cy="321.2" r="1.4" fill="#f7751c"/><circle cx="389.4" cy="333.4" r="1.4" fill="#f7751c"/><circle cx="386.3" cy="297.5" r="1.4" fill="#f7751c"/><circle cx="362.3" cy="321.2" r="1.4" fill="#3f86f0"/><circle cx="338.8" cy="297.5" r="1.4" fill="#3f86f0"/><circle cx="435.5" cy="297.5" r="1.4" fill="#d54be9"/><circle cx="347.8" cy="297.5" r="1.4" fill="#a69f9c"/><circle cx="436.2" cy="345.6" r="1.4" fill="#3f86f0"/><circle cx="426.2" cy="309.3" r="1.4" fill="#d54be9"/><circle cx="478.5" cy="345.6" r="1.4" fill="#d54be9"/><circle cx="466.0" cy="333.4" r="1.4" fill="#3f86f0"/><circle cx="451.5" cy="321.2" r="1.4" fill="#3f86f0"/><circle cx="345.9" cy="297.5" r="1.4" fill="#3f86f0"/><circle cx="323.6" cy="309.3" r="1.4" fill="#f7751c"/><circle cx="362.4" cy="297.5" r="1.4" fill="#a69f9c"/><circle cx="407.8" cy="297.5" r="1.4" fill="#a69f9c"/><circle cx="380.1" cy="333.4" r="1.4" fill="#3f86f0"/><circle cx="409.2" cy="297.5" r="1.4" fill="#3f86f0"/><circle cx="361.5" cy="321.2" r="1.4" fill="#3f86f0"/><circle cx="492.8" cy="321.2" r="1.4" fill="#3f86f0"/><circle cx="372.7" cy="321.2" r="1.4" fill="#f7751c"/><circle cx="356.4" cy="321.2" r="1.4" fill="#a69f9c"/><circle cx="453.9" cy="321.2" r="1.4" fill="#3f86f0"/><circle cx="484.4" cy="297.5" r="1.4" fill="#3f86f0"/><circle cx="413.5" cy="297.5" r="1.4" fill="#a69f9c"/><circle cx="409.7" cy="333.4" r="1.4" fill="#a69f9c"/><circle cx="475.4" cy="297.5" r="1.4" fill="#a69f9c"/><circle cx="402.4" cy="297.5" r="1.4" fill="#3f86f0"/><circle cx="488.1" cy="321.2" r="1.4" fill="#a69f9c"/><circle cx="339.3" cy="297.5" r="1.4" fill="#3f86f0"/><circle cx="499.3" cy="333.4" r="1.4" fill="#3f86f0"/><circle cx="431.9" cy="297.5" r="1.4" fill="#3f86f0"/><circle cx="461.4" cy="333.4" r="1.4" fill="#d54be9"/><circle cx="368.7" cy="321.2" r="1.4" fill="#3f86f0"/><circle cx="465.0" cy="333.4" r="1.4" fill="#3f86f0"/><circle cx="410.4" cy="297.5" r="1.4" fill="#d54be9"/><circle cx="422.9" cy="297.5" r="1.4" fill="#d54be9"/><circle cx="434.3" cy="297.5" r="1.4" fill="#d54be9"/><circle cx="465.5" cy="309.3" r="1.4" fill="#a69f9c"/><circle cx="424.7" cy="297.5" r="1.4" fill="#d54be9"/><circle cx="426.0" cy="297.5" r="1.4" fill="#d54be9"/><circle cx="495.6" cy="297.5" r="1.4" fill="#d54be9"/><circle cx="355.5" cy="309.3" r="1.4" fill="#3f86f0"/><circle cx="380.6" cy="321.2" r="1.4" fill="#a69f9c"/><circle cx="406.8" cy="297.5" r="1.4" fill="#a69f9c"/><circle cx="466.6" cy="297.5" r="1.4" fill="#d54be9"/><circle cx="357.8" cy="333.4" r="1.4" fill="#3f86f0"/><circle cx="452.2" cy="333.4" r="1.4" fill="#3f86f0"/><circle cx="378.1" cy="297.5" r="1.4" fill="#3f86f0"/><circle cx="435.7" cy="333.4" r="1.4" fill="#3f86f0"/><circle cx="461.5" cy="333.4" r="1.4" fill="#3f86f0"/><circle cx="432.9" cy="309.3" r="1.4" fill="#a69f9c"/><circle cx="339.9" cy="309.3" r="1.4" fill="#3f86f0"/><circle cx="353.7" cy="297.5" r="1.4" fill="#3f86f0"/><circle cx="495.6" cy="297.5" r="1.4" fill="#3f86f0"/><circle cx="346.9" cy="297.5" r="1.4" fill="#3f86f0"/><circle cx="382.9" cy="297.5" r="1.4" fill="#f7751c"/><circle cx="396.6" cy="333.4" r="1.4" fill="#d54be9"/><circle cx="448.6" cy="333.4" r="1.4" fill="#a69f9c"/><circle cx="482.7" cy="309.3" r="1.4" fill="#3f86f0"/><circle cx="431.3" cy="309.3" r="1.4" fill="#a69f9c"/><circle cx="438.1" cy="321.2" r="1.4" fill="#d54be9"/><circle cx="328.6" cy="297.5" r="1.4" fill="#f7751c"/><circle cx="334.0" cy="297.5" r="1.4" fill="#f7751c"/><circle cx="340.7" cy="333.4" r="1.4" fill="#a69f9c"/><circle cx="333.9" cy="297.5" r="1.4" fill="#3f86f0"/><circle cx="399.6" cy="297.5" r="1.4" fill="#d54be9"/><circle cx="494.7" cy="297.5" r="1.4" fill="#a69f9c"/><circle cx="495.6" cy="309.3" r="1.4" fill="#a69f9c"/><circle cx="323.6" cy="297.5" r="1.4" fill="#f7751c"/><circle cx="441.6" cy="297.5" r="1.4" fill="#3f86f0"/><circle cx="426.4" cy="333.4" r="1.4" fill="#d54be9"/><circle cx="348.3" cy="309.3" r="1.4" fill="#f7751c"/><circle cx="409.8" cy="309.3" r="1.4" fill="#a69f9c"/><circle cx="402.5" cy="333.4" r="1.4" fill="#d54be9"/><circle cx="436.5" cy="309.3" r="1.4" fill="#a69f9c"/><circle cx="375.9" cy="309.3" r="1.4" fill="#3f86f0"/><circle cx="457.1" cy="333.4" r="1.4" fill="#3f86f0"/><circle cx="381.6" cy="333.4" r="1.4" fill="#3f86f0"/><circle cx="417.9" cy="297.5" r="1.4" fill="#a69f9c"/><circle cx="382.9" cy="321.2" r="1.4" fill="#3f86f0"/><circle cx="368.9" cy="333.4" r="1.4" fill="#3f86f0"/><circle cx="474.2" cy="333.4" r="1.4" fill="#3f86f0"/><circle cx="400.1" cy="297.5" r="1.4" fill="#d54be9"/><circle cx="342.3" cy="297.5" r="1.4" fill="#a69f9c"/><circle cx="379.3" cy="297.5" r="1.4" fill="#a69f9c"/><circle cx="456.1" cy="297.5" r="1.4" fill="#d54be9"/><circle cx="447.9" cy="321.2" r="1.4" fill="#a69f9c"/><circle cx="392.6" cy="297.5" r="1.4" fill="#d54be9"/><circle cx="431.4" cy="333.4" r="1.4" fill="#d54be9"/><circle cx="333.1" cy="309.3" r="1.4" fill="#f7751c"/><circle cx="396.9" cy="309.3" r="1.4" fill="#f7751c"/><circle cx="406.5" cy="297.5" r="1.4" fill="#d54be9"/><circle cx="328.6" cy="321.2" r="1.4" fill="#f7751c"/><circle cx="422.7" cy="333.4" r="1.4" fill="#d54be9"/><circle cx="406.1" cy="333.4" r="1.4" fill="#3f86f0"/><circle cx="438.8" cy="297.5" r="1.4" fill="#3f86f0"/><circle cx="365.5" cy="297.5" r="1.4" fill="#f7751c"/><circle cx="425.4" cy="345.6" r="1.4" fill="#d54be9"/><circle cx="377.6" cy="321.2" r="1.4" fill="#f7751c"/><circle cx="399.3" cy="297.5" r="1.4" fill="#3f86f0"/><circle cx="480.2" cy="309.3" r="1.4" fill="#3f86f0"/><circle cx="349.8" cy="297.5" r="1.4" fill="#a69f9c"/><circle cx="442.9" cy="333.4" r="1.4" fill="#3f86f0"/><circle cx="441.7" cy="309.3" r="1.4" fill="#3f86f0"/><circle cx="462.2" cy="297.5" r="1.4" fill="#3f86f0"/><circle cx="416.4" cy="297.5" r="1.4" fill="#d54be9"/><circle cx="389.1" cy="297.5" r="1.4" fill="#f7751c"/><circle cx="382.9" cy="297.5" r="1.4" fill="#f7751c"/><circle cx="445.2" cy="297.5" r="1.4" fill="#d54be9"/><circle cx="372.0" cy="321.2" r="1.4" fill="#f7751c"/><circle cx="464.4" cy="321.2" r="1.4" fill="#3f86f0"/><circle cx="350.9" cy="297.5" r="1.4" fill="#3f86f0"/><circle cx="350.9" cy="345.6" r="1.4" fill="#3f86f0"/><circle cx="410.4" cy="297.5" r="1.4" fill="#d54be9"/><circle cx="426.2" cy="297.5" r="1.4" fill="#3f86f0"/><circle cx="490.7" cy="345.6" r="1.4" fill="#a69f9c"/><circle cx="472.8" cy="297.5" r="1.4" fill="#d54be9"/><circle cx="371.9" cy="333.4" r="1.4" fill="#a69f9c"/><circle cx="369.5" cy="333.4" r="1.4" fill="#3f86f0"/><circle cx="473.5" cy="297.5" r="1.4" fill="#d54be9"/><circle cx="391.4" cy="309.3" r="1.4" fill="#3f86f0"/><circle cx="417.3" cy="297.5" r="1.4" fill="#d54be9"/><circle cx="342.9" cy="297.5" r="1.4" fill="#3f86f0"/><circle cx="436.5" cy="321.2" r="1.4" fill="#3f86f0"/><circle cx="390.1" cy="297.5" r="1.4" fill="#3f86f0"/><circle cx="400.7" cy="297.5" r="1.4" fill="#f7751c"/><circle cx="389.6" cy="297.5" r="1.4" fill="#d54be9"/><circle cx="424.3" cy="297.5" r="1.4" fill="#3f86f0"/><circle cx="351.9" cy="309.3" r="1.4" fill="#3f86f0"/><circle cx="486.3" cy="309.3" r="1.4" fill="#3f86f0"/><circle cx="475.5" cy="297.5" r="1.4" fill="#d54be9"/><circle cx="462.3" cy="297.5" r="1.4" fill="#3f86f0"/><circle cx="386.7" cy="297.5" r="1.4" fill="#a69f9c"/><circle cx="404.5" cy="345.6" r="1.4" fill="#d54be9"/><circle cx="407.4" cy="333.4" r="1.4" fill="#d54be9"/><circle cx="469.1" cy="309.3" r="1.4" fill="#3f86f0"/><circle cx="443.1" cy="345.6" r="1.4" fill="#3f86f0"/><circle cx="480.8" cy="297.5" r="1.4" fill="#d54be9"/><circle cx="471.5" cy="297.5" r="1.4" fill="#3f86f0"/><circle cx="474.3" cy="297.5" r="1.4" fill="#d54be9"/><circle cx="480.8" cy="297.5" r="1.4" fill="#3f86f0"/><circle cx="473.4" cy="297.5" r="1.4" fill="#d54be9"/><circle cx="459.2" cy="333.4" r="1.4" fill="#3f86f0"/><circle cx="374.9" cy="297.5" r="1.4" fill="#f7751c"/><circle cx="409.4" cy="333.4" r="1.4" fill="#d54be9"/><circle cx="433.2" cy="297.5" r="1.4" fill="#a69f9c"/><circle cx="456.3" cy="345.6" r="1.4" fill="#d54be9"/><circle cx="486.0" cy="345.6" r="1.4" fill="#3f86f0"/><circle cx="375.9" cy="297.5" r="1.4" fill="#3f86f0"/><circle cx="407.3" cy="297.5" r="1.4" fill="#a69f9c"/><circle cx="478.7" cy="297.5" r="1.4" fill="#3f86f0"/><circle cx="394.8" cy="333.4" r="1.4" fill="#d54be9"/><circle cx="399.3" cy="297.5" r="1.4" fill="#d54be9"/><circle cx="401.0" cy="297.5" r="1.4" fill="#f7751c"/><circle cx="438.9" cy="333.4" r="1.4" fill="#a69f9c"/><circle cx="374.5" cy="297.5" r="1.4" fill="#3f86f0"/><circle cx="348.1" cy="297.5" r="1.4" fill="#3f86f0"/><circle cx="501.9" cy="321.2" r="1.4" fill="#3f86f0"/><circle cx="375.2" cy="345.6" r="1.4" fill="#a69f9c"/><circle cx="489.3" cy="309.3" r="1.4" fill="#3f86f0"/><circle cx="332.5" cy="297.5" r="1.4" fill="#3f86f0"/><circle cx="469.1" cy="297.5" r="1.4" fill="#d54be9"/><circle cx="463.9" cy="297.5" r="1.4" fill="#d54be9"/><circle cx="338.4" cy="297.5" r="1.4" fill="#3f86f0"/><circle cx="386.0" cy="297.5" r="1.4" fill="#a69f9c"/><circle cx="445.2" cy="297.5" r="1.4" fill="#d54be9"/><circle cx="486.4" cy="297.5" r="1.4" fill="#d54be9"/><circle cx="442.5" cy="333.4" r="1.4" fill="#3f86f0"/><circle cx="442.9" cy="321.2" r="1.4" fill="#3f86f0"/><circle cx="489.2" cy="297.5" r="1.4" fill="#d54be9"/><circle cx="442.1" cy="297.5" r="1.4" fill="#3f86f0"/><circle cx="494.3" cy="297.5" r="1.4" fill="#d54be9"/><circle cx="374.9" cy="345.6" r="1.4" fill="#3f86f0"/><circle cx="328.3" cy="333.4" r="1.4" fill="#f7751c"/><circle cx="377.2" cy="321.2" r="1.4" fill="#3f86f0"/><circle cx="399.0" cy="321.2" r="1.4" fill="#3f86f0"/><circle cx="495.6" cy="297.5" r="1.4" fill="#d54be9"/><circle cx="428.2" cy="297.5" r="1.4" fill="#a69f9c"/><circle cx="443.3" cy="297.5" r="1.4" fill="#3f86f0"/><circle cx="502.9" cy="333.4" r="1.4" fill="#3f86f0"/><circle cx="332.0" cy="309.3" r="1.4" fill="#3f86f0"/><circle cx="409.7" cy="297.5" r="1.4" fill="#d54be9"/><circle cx="412.8" cy="297.5" r="1.4" fill="#a69f9c"/><circle cx="469.0" cy="309.3" r="1.4" fill="#3f86f0"/><circle cx="385.4" cy="297.5" r="1.4" fill="#3f86f0"/><circle cx="446.5" cy="321.2" r="1.4" fill="#3f86f0"/><circle cx="488.6" cy="297.5" r="1.4" fill="#d54be9"/><circle cx="329.7" cy="345.6" r="1.4" fill="#3f86f0"/><circle cx="396.6" cy="333.4" r="1.4" fill="#3f86f0"/><circle cx="471.0" cy="345.6" r="1.4" fill="#a69f9c"/><circle cx="400.2" cy="297.5" r="1.4" fill="#f7751c"/><circle cx="356.3" cy="321.2" r="1.4" fill="#3f86f0"/><circle cx="444.1" cy="297.5" r="1.4" fill="#3f86f0"/><circle cx="463.3" cy="297.5" r="1.4" fill="#d54be9"/><circle cx="502.0" cy="333.4" r="1.4" fill="#3f86f0"/><circle cx="323.6" cy="321.2" r="1.4" fill="#f7751c"/><circle cx="366.8" cy="297.5" r="1.4" fill="#3f86f0"/><circle cx="453.7" cy="321.2" r="1.4" fill="#3f86f0"/><circle cx="460.3" cy="297.5" r="1.4" fill="#d54be9"/><circle cx="459.7" cy="297.5" r="1.4" fill="#d54be9"/><circle cx="492.0" cy="297.5" r="1.4" fill="#a69f9c"/><circle cx="421.1" cy="297.5" r="1.4" fill="#d54be9"/><circle cx="480.0" cy="297.5" r="1.4" fill="#3f86f0"/><circle cx="331.6" cy="297.5" r="1.4" fill="#f7751c"/><circle cx="393.7" cy="297.5" r="1.4" fill="#f7751c"/><circle cx="487.5" cy="297.5" r="1.4" fill="#3f86f0"/><circle cx="491.7" cy="321.2" r="1.4" fill="#3f86f0"/><circle cx="405.8" cy="333.4" r="1.4" fill="#d54be9"/><circle cx="403.2" cy="297.5" r="1.4" fill="#d54be9"/><circle cx="457.1" cy="297.5" r="1.4" fill="#d54be9"/><circle cx="342.6" cy="297.5" r="1.4" fill="#3f86f0"/><circle cx="403.7" cy="345.6" r="1.4" fill="#a69f9c"/><circle cx="447.1" cy="297.5" r="1.4" fill="#d54be9"/><circle cx="373.8" cy="309.3" r="1.4" fill="#3f86f0"/><circle cx="402.9" cy="297.5" r="1.4" fill="#3f86f0"/><circle cx="487.1" cy="345.6" r="1.4" fill="#3f86f0"/><circle cx="452.3" cy="309.3" r="1.4" fill="#3f86f0"/><circle cx="406.0" cy="297.5" r="1.4" fill="#d54be9"/><circle cx="336.3" cy="309.3" r="1.4" fill="#f7751c"/><circle cx="450.1" cy="333.4" r="1.4" fill="#3f86f0"/><circle cx="392.2" cy="309.3" r="1.4" fill="#f7751c"/><circle cx="390.6" cy="297.5" r="1.4" fill="#3f86f0"/><circle cx="413.0" cy="333.4" r="1.4" fill="#d54be9"/><circle cx="489.9" cy="309.3" r="1.4" fill="#d54be9"/><circle cx="477.2" cy="297.5" r="1.4" fill="#d54be9"/><circle cx="398.4" cy="333.4" r="1.4" fill="#3f86f0"/><circle cx="449.3" cy="321.2" r="1.4" fill="#3f86f0"/><circle cx="467.1" cy="297.5" r="1.4" fill="#3f86f0"/><circle cx="351.5" cy="297.5" r="1.4" fill="#f7751c"/><circle cx="370.0" cy="297.5" r="1.4" fill="#f7751c"/><circle cx="409.2" cy="321.2" r="1.4" fill="#a69f9c"/><circle cx="379.5" cy="309.3" r="1.4" fill="#3f86f0"/><circle cx="399.8" cy="333.4" r="1.4" fill="#d54be9"/><circle cx="369.6" cy="297.5" r="1.4" fill="#3f86f0"/><circle cx="417.1" cy="297.5" r="1.4" fill="#a69f9c"/><circle cx="502.7" cy="333.4" r="1.4" fill="#a69f9c"/><circle cx="483.6" cy="297.5" r="1.4" fill="#a69f9c"/><circle cx="503.6" cy="321.2" r="1.4" fill="#3f86f0"/></g></svg><div style="position:absolute;left:125.8px;top:145.2px;width:77.60000000000001px;height:17.900000000000006px;background:#fff;border:1px solid #e2e2e2;border-radius:3px;box-sizing:border-box"></div><div style="position:absolute;left:128.7px;top:150.8px;width:7px;height:7px;border-radius:50%;background:#b8912c"></div><div style="position:absolute;left:139.3px;top:147.2px;line-height:14px;font-size:8.5px;font-weight:400;color:#333;letter-spacing:-0.31px;white-space:pre;transform:scaleX(0.9168);transform-origin:0 50%;">TM4-BP2-CONC.1</div><div style="position:absolute;left:324.0px;top:221.5px;width:77.5px;height:18.0px;background:#fff;border:1px solid #e2e2e2;border-radius:3px;box-sizing:border-box"></div><div style="position:absolute;left:326.9px;top:227px;width:7px;height:7px;border-radius:50%;background:#e53e3e"></div><div style="position:absolute;left:337.3px;top:223.5px;line-height:14px;font-size:8.5px;font-weight:400;color:#333;letter-spacing:-0.35px;white-space:pre;transform:scaleX(0.9005);transform-origin:0 50%;">TM4-BP2-LEVEL.1</div><div style="position:absolute;left:521.7px;top:298.5px;width:78.29999999999995px;height:17.5px;background:#fff;border:1px solid #e2e2e2;border-radius:3px;box-sizing:border-box"></div><div style="position:absolute;left:524.6px;top:303.7px;width:7px;height:7px;border-radius:50%;background:#4a90b8"></div><svg style="position:absolute;left:0px;top:0px;pointer-events:none" width="980" height="626" viewBox="0 0 980 626"><line x1="116.2" y1="216.0" x2="116.2" y2="286.4" stroke="#f07070" stroke-width="1.2"/><line x1="113.0" y1="220.8" x2="116.2" y2="220.8" stroke="#f07070" stroke-width="1.2"/><line x1="113.0" y1="227.9" x2="116.2" y2="227.9" stroke="#f07070" stroke-width="1.2"/><line x1="113.0" y1="241.3" x2="116.2" y2="241.3" stroke="#f07070" stroke-width="1.2"/><line x1="113.0" y1="254.7" x2="116.2" y2="254.7" stroke="#f07070" stroke-width="1.2"/><line x1="113.0" y1="268.1" x2="116.2" y2="268.1" stroke="#f07070" stroke-width="1.2"/><line x1="113.0" y1="281.5" x2="116.2" y2="281.5" stroke="#f07070" stroke-width="1.2"/><line x1="116.2" y1="292.0" x2="116.2" y2="362.4" stroke="#76b6d6" stroke-width="1.2"/><line x1="113.0" y1="297.5" x2="116.2" y2="297.5" stroke="#76b6d6" stroke-width="1.2"/><line x1="113.0" y1="309.3" x2="116.2" y2="309.3" stroke="#76b6d6" stroke-width="1.2"/><line x1="113.0" y1="321.2" x2="116.2" y2="321.2" stroke="#76b6d6" stroke-width="1.2"/><line x1="113.0" y1="333.4" x2="116.2" y2="333.4" stroke="#76b6d6" stroke-width="1.2"/><line x1="113.0" y1="345.6" x2="116.2" y2="345.6" stroke="#76b6d6" stroke-width="1.2"/><line x1="113.0" y1="357.8" x2="116.2" y2="357.8" stroke="#76b6d6" stroke-width="1.2"/><line x1="116.2" y1="368.7" x2="116.2" y2="439.2" stroke="#cda6e2" stroke-width="1.2"/><line x1="113.0" y1="373.4" x2="116.2" y2="373.4" stroke="#cda6e2" stroke-width="1.2"/><line x1="113.0" y1="380.2" x2="116.2" y2="380.2" stroke="#cda6e2" stroke-width="1.2"/><line x1="113.0" y1="393.6" x2="116.2" y2="393.6" stroke="#cda6e2" stroke-width="1.2"/><line x1="113.0" y1="406.9" x2="116.2" y2="406.9" stroke="#cda6e2" stroke-width="1.2"/><line x1="113.0" y1="420.3" x2="116.2" y2="420.3" stroke="#cda6e2" stroke-width="1.2"/><line x1="113.0" y1="434.6" x2="116.2" y2="434.6" stroke="#cda6e2" stroke-width="1.2"/><line x1="120.1" y1="442.5" x2="311.5" y2="442.5" stroke="#c9a03c" stroke-width="1.2"/><line x1="125.5" y1="442.5" x2="125.5" y2="445.0" stroke="#c9a03c" stroke-width="1.2"/><line x1="167.3" y1="442.5" x2="167.3" y2="445.0" stroke="#c9a03c" stroke-width="1.2"/><line x1="209.1" y1="442.5" x2="209.1" y2="445.0" stroke="#c9a03c" stroke-width="1.2"/><line x1="250.9" y1="442.5" x2="250.9" y2="445.0" stroke="#c9a03c" stroke-width="1.2"/><line x1="292.7" y1="442.5" x2="292.7" y2="445.0" stroke="#c9a03c" stroke-width="1.2"/><line x1="306.3" y1="442.5" x2="306.3" y2="445.0" stroke="#c9a03c" stroke-width="1.2"/><line x1="318.2" y1="442.5" x2="510.0" y2="442.5" stroke="#e85454" stroke-width="1.2"/><line x1="323.6" y1="442.5" x2="323.6" y2="445.0" stroke="#e85454" stroke-width="1.2"/><line x1="363.6" y1="442.5" x2="363.6" y2="445.0" stroke="#e85454" stroke-width="1.2"/><line x1="403.6" y1="442.5" x2="403.6" y2="445.0" stroke="#e85454" stroke-width="1.2"/><line x1="443.6" y1="442.5" x2="443.6" y2="445.0" stroke="#e85454" stroke-width="1.2"/><line x1="483.6" y1="442.5" x2="483.6" y2="445.0" stroke="#e85454" stroke-width="1.2"/><line x1="504.8" y1="442.5" x2="504.8" y2="445.0" stroke="#e85454" stroke-width="1.2"/><line x1="515.8" y1="442.5" x2="707.6" y2="442.5" stroke="#76b6d6" stroke-width="1.2"/><line x1="521.4" y1="442.5" x2="521.4" y2="445.0" stroke="#76b6d6" stroke-width="1.2"/><line x1="557.6" y1="442.5" x2="557.6" y2="445.0" stroke="#76b6d6" stroke-width="1.2"/><line x1="593.8" y1="442.5" x2="593.8" y2="445.0" stroke="#76b6d6" stroke-width="1.2"/><line x1="630.0" y1="442.5" x2="630.0" y2="445.0" stroke="#76b6d6" stroke-width="1.2"/><line x1="666.2" y1="442.5" x2="666.2" y2="445.0" stroke="#76b6d6" stroke-width="1.2"/><line x1="702.4" y1="442.5" x2="702.4" y2="445.0" stroke="#76b6d6" stroke-width="1.2"/></svg><div style="position:absolute;left:60px;width:51.5px;top:214.798px;line-height:12px;text-align:right;font-size:8.2px;color:#3a3a3a;letter-spacing:-0.1px">45.3</div><div style="position:absolute;left:60px;width:51.5px;top:221.9px;line-height:12px;text-align:right;font-size:8.2px;color:#3a3a3a;letter-spacing:-0.1px">40</div><div style="position:absolute;left:60px;width:51.5px;top:235.3px;line-height:12px;text-align:right;font-size:8.2px;color:#3a3a3a;letter-spacing:-0.1px">30</div><div style="position:absolute;left:60px;width:51.5px;top:248.7px;line-height:12px;text-align:right;font-size:8.2px;color:#3a3a3a;letter-spacing:-0.1px">20</div><div style="position:absolute;left:60px;width:51.5px;top:262.1px;line-height:12px;text-align:right;font-size:8.2px;color:#3a3a3a;letter-spacing:-0.1px">10</div><div style="position:absolute;left:60px;width:51.5px;top:275.5px;line-height:12px;text-align:right;font-size:8.2px;color:#3a3a3a;letter-spacing:-0.1px">0</div><div style="position:absolute;left:60px;width:51.5px;top:291.5px;line-height:12px;text-align:right;font-size:8.2px;color:#3a3a3a;letter-spacing:-0.2px">GAMMA</div><div style="position:absolute;left:60px;width:51.5px;top:303.3px;line-height:12px;text-align:right;font-size:8.2px;color:#3a3a3a;letter-spacing:-0.2px">BETA</div><div style="position:absolute;left:60px;width:51.5px;top:315.2px;line-height:12px;text-align:right;font-size:8.2px;color:#3a3a3a;letter-spacing:-0.2px">ALPHA</div><div style="position:absolute;left:60px;width:51.5px;top:327.4px;line-height:12px;text-align:right;font-size:8.2px;color:#3a3a3a;letter-spacing:-0.2px">KAPPA</div><div style="position:absolute;left:60px;width:51.5px;top:339.6px;line-height:12px;text-align:right;font-size:8.2px;color:#3a3a3a;letter-spacing:-0.2px">DELTA</div><div style="position:absolute;left:60px;width:51.5px;top:351.8px;line-height:12px;text-align:right;font-size:8.2px;color:#3a3a3a;letter-spacing:-0.2px">UND...ED</div><div style="position:absolute;left:60px;width:51.5px;top:367.44149999999996px;line-height:12px;text-align:right;font-size:8.2px;color:#3a3a3a;letter-spacing:-0.1px">45.1</div><div style="position:absolute;left:60px;width:51.5px;top:374.25px;line-height:12px;text-align:right;font-size:8.2px;color:#3a3a3a;letter-spacing:-0.1px">40</div><div style="position:absolute;left:60px;width:51.5px;top:387.59999999999997px;line-height:12px;text-align:right;font-size:8.2px;color:#3a3a3a;letter-spacing:-0.1px">30</div><div style="position:absolute;left:60px;width:51.5px;top:400.95px;line-height:12px;text-align:right;font-size:8.2px;color:#3a3a3a;letter-spacing:-0.1px">20</div><div style="position:absolute;left:60px;width:51.5px;top:414.29999999999995px;line-height:12px;text-align:right;font-size:8.2px;color:#3a3a3a;letter-spacing:-0.1px">10</div><div style="position:absolute;left:60px;width:51.5px;top:428.644575px;line-height:12px;text-align:right;font-size:8.2px;color:#3a3a3a;letter-spacing:-0.1px">-0.745</div><div style="position:absolute;left:95.5px;width:60px;top:444px;line-height:12px;text-align:center;font-size:8.2px;color:#3a3a3a;letter-spacing:-0.1px">0</div><div style="position:absolute;left:137.3px;width:60px;top:444px;line-height:12px;text-align:center;font-size:8.2px;color:#3a3a3a;letter-spacing:-0.1px">20</div><div style="position:absolute;left:179.1px;width:60px;top:444px;line-height:12px;text-align:center;font-size:8.2px;color:#3a3a3a;letter-spacing:-0.1px">40</div><div style="position:absolute;left:220.89999999999998px;width:60px;top:444px;line-height:12px;text-align:center;font-size:8.2px;color:#3a3a3a;letter-spacing:-0.1px">60</div><div style="position:absolute;left:262.7px;width:60px;top:444px;line-height:12px;text-align:center;font-size:8.2px;color:#3a3a3a;letter-spacing:-0.1px">80</div><div style="position:absolute;left:250px;width:60px;top:444px;line-height:12px;text-align:right;font-size:8.2px;color:#3a3a3a;letter-spacing:-0.1px">8...</div><div style="position:absolute;left:293.6px;width:60px;top:444px;line-height:12px;text-align:center;font-size:8.2px;color:#3a3a3a;letter-spacing:-0.1px">0</div><div style="position:absolute;left:333.6px;width:60px;top:444px;line-height:12px;text-align:center;font-size:8.2px;color:#3a3a3a;letter-spacing:-0.1px">10</div><div style="position:absolute;left:373.6px;width:60px;top:444px;line-height:12px;text-align:center;font-size:8.2px;color:#3a3a3a;letter-spacing:-0.1px">20</div><div style="position:absolute;left:413.6px;width:60px;top:444px;line-height:12px;text-align:center;font-size:8.2px;color:#3a3a3a;letter-spacing:-0.1px">30</div><div style="position:absolute;left:453.6px;width:60px;top:444px;line-height:12px;text-align:center;font-size:8.2px;color:#3a3a3a;letter-spacing:-0.1px">40</div><div style="position:absolute;left:450.5px;width:60px;top:444px;line-height:12px;text-align:right;font-size:8.2px;color:#3a3a3a;letter-spacing:-0.1px">45.3</div><div style="position:absolute;left:527.6px;width:60px;top:444px;line-height:12px;text-align:center;font-size:8.2px;color:#3a3a3a;letter-spacing:-0.1px">DELTA</div><div style="position:absolute;left:563.8px;width:60px;top:444px;line-height:12px;text-align:center;font-size:8.2px;color:#3a3a3a;letter-spacing:-0.1px">KAPPA</div><div style="position:absolute;left:600.0px;width:60px;top:444px;line-height:12px;text-align:center;font-size:8.2px;color:#3a3a3a;letter-spacing:-0.1px">ALPHA</div><div style="position:absolute;left:636.2px;width:60px;top:444px;line-height:12px;text-align:center;font-size:8.2px;color:#3a3a3a;letter-spacing:-0.1px">BETA</div><div style="position:absolute;left:515.8px;width:60px;top:444px;line-height:12px;text-align:left;font-size:8.2px;color:#3a3a3a;letter-spacing:-0.1px">UND...</div><div style="position:absolute;left:648.5px;width:60px;top:444px;line-height:12px;text-align:right;font-size:8.2px;color:#3a3a3a;letter-spacing:-0.1px">GAM...</div><div style="position:absolute;left:528.8px;top:142.8px;width:348px;height:277.8px;background:#fff;border:1px solid #e4e4e4;border-radius:3px;box-sizing:border-box;box-shadow:0 6px 18px rgba(0,0,0,0.13), 0 1px 4px rgba(0,0,0,0.06)"></div><svg style="position:absolute;left:854px;top:138.4px;" width="12" height="7" viewBox="0 0 12 7"><polygon points="1.2,4.4 5.5,0.6 9.8,4.4 9.8,5.8 1.2,5.8" fill="#fff"/><polyline points="1.2,4.9 5.5,0.6 9.8,4.9" fill="none" stroke="#e0e0e0" stroke-width="1"/></svg><div style="position:absolute;left:540.8px;top:159.9px;line-height:14px;font-size:11px;font-weight:400;color:#333;letter-spacing:-0.16px;white-space:pre;transform:scaleX(0.9589);transform-origin:0 50%;">Color by</div><div style="position:absolute;left:540.8px;top:195.5px;line-height:14px;font-size:11px;font-weight:400;color:#333;letter-spacing:-0.38px;white-space:pre;transform:scaleX(0.9194);transform-origin:0 50%;">Tag name</div><div style="position:absolute;left:540.8px;top:230.9px;line-height:14px;font-size:11px;font-weight:400;color:#333;letter-spacing:-0.11px;white-space:pre;transform:scaleX(0.9709);transform-origin:0 50%;">Coloring</div><div style="position:absolute;left:690.8px;top:155.4px;width:173.0px;height:22.900000000000006px;background:#fff;border:1px solid #dedede;border-radius:3px;box-sizing:border-box"></div><svg style="position:absolute;left:848.8px;top:164.85000000000002px;" width="7" height="4" viewBox="0 0 7 4"><polygon points="0,0 6,0 3,3.5" fill="#a8a8a8"/></svg><div style="position:absolute;left:700.4px;top:159.9px;line-height:14px;font-size:11px;font-weight:400;color:#2b2b2b;letter-spacing:0.00px;white-space:pre;">Tag</div><div style="position:absolute;left:690.8px;top:190.5px;width:173.0px;height:23.099999999999994px;background:#fff;border:1px solid #dedede;border-radius:3px;box-sizing:border-box"></div><svg style="position:absolute;left:848.8px;top:200.05px;" width="7" height="4" viewBox="0 0 7 4"><polygon points="0,0 6,0 3,3.5" fill="#a8a8a8"/></svg><div style="position:absolute;left:700.4px;top:195.3px;line-height:14px;font-size:11px;font-weight:400;color:#2b2b2b;letter-spacing:-0.23px;white-space:pre;transform:scaleX(0.9522);transform-origin:0 50%;">TM4-BP2-CONC.1</div><div style="position:absolute;left:690.8px;top:226.4px;width:173.0px;height:22.900000000000006px;background:#fff;border:1px solid #dedede;border-radius:3px;box-sizing:border-box"></div><svg style="position:absolute;left:848.8px;top:235.85000000000002px;" width="7" height="4" viewBox="0 0 7 4"><polygon points="0,0 6,0 3,3.5" fill="#a8a8a8"/></svg><div style="position:absolute;left:700.4px;top:230.9px;line-height:14px;font-size:11px;font-weight:400;color:#2b2b2b;letter-spacing:-0.16px;white-space:pre;transform:scaleX(0.9592);transform-origin:0 50%;">Conditions</div><div style="position:absolute;left:529.8px;top:260.5px;width:345.5px;height:1.0px;background:#e6e6e6"></div><div style="position:absolute;left:558.2px;top:274.3px;width:261.5999999999999px;height:23.0px;background:#f7f7f7;border:1px solid #dedede;border-radius:3px;box-sizing:border-box"></div><svg style="position:absolute;left:804.5px;top:283.8px;" width="7" height="4" viewBox="0 0 7 4"><polygon points="0,0 6,0 3,3.5" fill="#d0d0d0"/></svg><div style="position:absolute;left:568.3px;top:278.7px;line-height:14px;font-size:11px;font-weight:400;color:#9e9e9e;letter-spacing:-0.12px;white-space:pre;transform:scaleX(0.9686);transform-origin:0 50%;">Unconditioned</div><div style="position:absolute;left:823.1px;top:274.3px;width:23.0px;height:23.0px;background:#fff;border:1px solid #dedede;border-radius:3px;box-sizing:border-box"></div><div style="position:absolute;left:826.6px;top:277.8px;width:16px;height:16px;border-radius:50%;background:#a8a09e"></div><div style="position:absolute;left:542px;top:312.7px;width:9px;height:1.0px;background:#bdbdbd"></div><div style="position:absolute;left:542px;top:315.7px;width:9px;height:1.0px;background:#bdbdbd"></div><div style="position:absolute;left:558.2px;top:303.4px;width:129.5999999999999px;height:23.0px;background:#fff;border:1px solid #dedede;border-radius:3px;box-sizing:border-box"></div><svg style="position:absolute;left:672.5px;top:312.9px;" width="7" height="4" viewBox="0 0 7 4"><polygon points="0,0 6,0 3,3.5" fill="#a8a8a8"/></svg><div style="position:absolute;left:568.3px;top:307.9px;line-height:14px;font-size:11px;font-weight:400;color:#2b2b2b;letter-spacing:-0.14px;white-space:pre;transform:scaleX(0.9620);transform-origin:0 50%;">Greater than</div><div style="position:absolute;left:690.6px;top:303.4px;width:129.19999999999993px;height:23.0px;background:#fff;border:1px solid #dedede;border-radius:3px;box-sizing:border-box"></div><div style="position:absolute;left:700.2px;top:307.9px;line-height:14px;font-size:11px;font-weight:400;color:#2b2b2b;letter-spacing:0.00px;white-space:pre;">30</div><div style="position:absolute;left:823.1px;top:303.4px;width:23.0px;height:23.0px;background:#fff;border:1px solid #dedede;border-radius:3px;box-sizing:border-box"></div><div style="position:absolute;left:826.6px;top:306.9px;width:16px;height:16px;border-radius:50%;background:#3b82f0"></div><svg style="position:absolute;left:853.5px;top:310.4px;" width="9" height="9" viewBox="0 0 9 9"><path d="M0.8,0.8 L8.2,8.2 M8.2,0.8 L0.8,8.2" stroke="#444" stroke-width="1.2"/></svg><div style="position:absolute;left:542px;top:342.90000000000003px;width:9px;height:1.0px;background:#bdbdbd"></div><div style="position:absolute;left:542px;top:345.90000000000003px;width:9px;height:1.0px;background:#bdbdbd"></div><div style="position:absolute;left:558.2px;top:333.6px;width:129.5999999999999px;height:23.0px;background:#fff;border:1px solid #dedede;border-radius:3px;box-sizing:border-box"></div><svg style="position:absolute;left:672.5px;top:343.1px;" width="7" height="4" viewBox="0 0 7 4"><polygon points="0,0 6,0 3,3.5" fill="#a8a8a8"/></svg><div style="position:absolute;left:568.3px;top:338.1px;line-height:14px;font-size:11px;font-weight:400;color:#2b2b2b;letter-spacing:-0.20px;white-space:pre;transform:scaleX(0.9586);transform-origin:0 50%;">Between</div><div style="position:absolute;left:690.6px;top:333.6px;width:62.69999999999993px;height:23.0px;background:#fff;border:1px solid #dedede;border-radius:3px;box-sizing:border-box"></div><div style="position:absolute;left:700.2px;top:338.1px;line-height:14px;font-size:11px;font-weight:400;color:#2b2b2b;letter-spacing:0.00px;white-space:pre;">10</div><div style="position:absolute;left:757.1px;top:333.6px;width:62.69999999999993px;height:23.0px;background:#fff;border:1px solid #dedede;border-radius:3px;box-sizing:border-box"></div><div style="position:absolute;left:766.7px;top:338.1px;line-height:14px;font-size:11px;font-weight:400;color:#2b2b2b;letter-spacing:0.00px;white-space:pre;">20</div><div style="position:absolute;left:823.1px;top:333.6px;width:23.0px;height:23.0px;background:#fff;border:1px solid #dedede;border-radius:3px;box-sizing:border-box"></div><div style="position:absolute;left:826.6px;top:337.1px;width:16px;height:16px;border-radius:50%;background:#d946ef"></div><svg style="position:absolute;left:853.5px;top:340.6px;" width="9" height="9" viewBox="0 0 9 9"><path d="M0.8,0.8 L8.2,8.2 M8.2,0.8 L0.8,8.2" stroke="#444" stroke-width="1.2"/></svg><div style="position:absolute;left:542px;top:372.3px;width:9px;height:1.0px;background:#bdbdbd"></div><div style="position:absolute;left:542px;top:375.3px;width:9px;height:1.0px;background:#bdbdbd"></div><div style="position:absolute;left:558.2px;top:363.0px;width:129.5999999999999px;height:23.0px;background:#fff;border:1px solid #dedede;border-radius:3px;box-sizing:border-box"></div><svg style="position:absolute;left:672.5px;top:372.5px;" width="7" height="4" viewBox="0 0 7 4"><polygon points="0,0 6,0 3,3.5" fill="#a8a8a8"/></svg><div style="position:absolute;left:568.3px;top:367.5px;line-height:14px;font-size:11px;font-weight:400;color:#2b2b2b;letter-spacing:-0.31px;white-space:pre;transform:scaleX(0.9225);transform-origin:0 50%;">Less than</div><div style="position:absolute;left:690.6px;top:363.0px;width:129.19999999999993px;height:23.0px;background:#fff;border:1px solid #dedede;border-radius:3px;box-sizing:border-box"></div><div style="position:absolute;left:700.2px;top:367.5px;line-height:14px;font-size:11px;font-weight:400;color:#2b2b2b;letter-spacing:0.00px;white-space:pre;">10</div><div style="position:absolute;left:823.1px;top:363.0px;width:23.0px;height:23.0px;background:#fff;border:1px solid #dedede;border-radius:3px;box-sizing:border-box"></div><div style="position:absolute;left:826.6px;top:366.5px;width:16px;height:16px;border-radius:50%;background:#f97316"></div><svg style="position:absolute;left:853.5px;top:370.0px;" width="9" height="9" viewBox="0 0 9 9"><path d="M0.8,0.8 L8.2,8.2 M8.2,0.8 L0.8,8.2" stroke="#444" stroke-width="1.2"/></svg><svg style="position:absolute;left:541px;top:395px;" width="14" height="11" viewBox="0 0 14 11"><path d="M0.5,1.5 h8 M0.5,4.5 h8 M0.5,7.5 h5" stroke="#1a64c0" stroke-width="1.3"/><path d="M10.5,5 v6 M7.5,8 h6" stroke="#1a64c0" stroke-width="1.5"/></svg><div style="position:absolute;left:558.7px;top:393.9px;line-height:14px;font-size:11px;font-weight:400;color:#1a64c0;letter-spacing:-0.13px;white-space:pre;transform:scaleX(0.9638);transform-origin:0 50%;">Add condition</div><div style="position:absolute;left:120.3px;top:459.9px;width:22.700000000000003px;height:22.80000000000001px;background:#fff;border:1px solid #e2e2e2;border-radius:3px;box-sizing:border-box"></div><svg style="position:absolute;left:128.5px;top:468px;" width="6" height="7" viewBox="0 0 6 7"><polygon points="4.5,0.5 4.5,6 0.8,3.25" fill="#555"/></svg><div style="position:absolute;left:146.7px;top:459.9px;width:92.4px;height:22.80000000000001px;background:#fff;border:1px solid #e2e2e2;border-radius:3px;box-sizing:border-box"></div><div style="position:absolute;left:156.5px;top:464.3px;line-height:14px;font-size:11px;font-weight:400;color:#2b2b2b;letter-spacing:0.04px;white-space:pre;transform:scaleX(1.0109);transform-origin:0 50%;">1/11/2023</div><svg style="position:absolute;left:222px;top:465.3px;" width="12" height="12" viewBox="0 0 12 12"><rect x="0.6" y="1.6" width="10.2" height="9.8" rx="1" fill="none" stroke="#999" stroke-width="1"/><path d="M0.6,4.2 h10.2" stroke="#999" stroke-width="1"/><path d="M3,0.3 v2.4 M8.4,0.3 v2.4" stroke="#999" stroke-width="1"/><rect x="6.6" y="7" width="2.4" height="2.4" fill="#999"/></svg><div style="position:absolute;left:242.7px;top:459.9px;width:102.90000000000003px;height:22.80000000000001px;background:#fff;border:1px solid #e2e2e2;border-radius:3px;box-sizing:border-box"></div><div style="position:absolute;left:252.0px;top:464.3px;line-height:14px;font-size:11px;font-weight:400;color:#2b2b2b;letter-spacing:-0.10px;white-space:pre;transform:scaleX(0.9757);transform-origin:0 50%;">03:17:27 AM</div><svg style="position:absolute;left:328.3px;top:465.5px;" width="12" height="12" viewBox="0 0 12 12"><circle cx="5.75" cy="5.75" r="5.1" fill="none" stroke="#999" stroke-width="1"/><path d="M5.75,2.8 v3.2 h2.4" fill="none" stroke="#999" stroke-width="1"/></svg><div style="position:absolute;left:425.4px;top:459.9px;width:76.90000000000003px;height:22.80000000000001px;background:#fff;border:1px solid #e2e2e2;border-radius:3px;box-sizing:border-box"></div><svg style="position:absolute;left:431.5px;top:465px;" width="13" height="13" viewBox="0 0 13 13"><path d="M0.6,0 v12.2 h12.2" fill="none" stroke="#888" stroke-width="0.9"/><circle cx="3" cy="10" r="0.9" fill="#888"/><circle cx="4.5" cy="8.5" r="0.9" fill="#888"/><circle cx="5.5" cy="9.5" r="0.9" fill="#888"/><circle cx="6.5" cy="7" r="0.9" fill="#888"/><circle cx="7.5" cy="8" r="0.9" fill="#888"/><circle cx="8.5" cy="5.5" r="0.9" fill="#888"/><circle cx="9.5" cy="6.5" r="0.9" fill="#888"/><circle cx="10.5" cy="4" r="0.9" fill="#888"/><circle cx="11" cy="2.5" r="0.9" fill="#888"/><circle cx="4" cy="10.5" r="0.9" fill="#888"/><circle cx="7" cy="6" r="0.9" fill="#888"/></svg><div style="position:absolute;left:450.0px;top:464.3px;line-height:14px;font-size:11px;font-weight:400;color:#2b2b2b;letter-spacing:-0.18px;white-space:pre;transform:scaleX(0.9535);transform-origin:0 50%;">Scatter</div><svg style="position:absolute;left:487px;top:469px;" width="8" height="5" viewBox="0 0 8 5"><polygon points="0,4 7,4 3.5,0.3" fill="#9a9a9a"/></svg><div style="position:absolute;left:505.5px;top:459.9px;width:74.0px;height:22.80000000000001px;background:#fff;border:1px solid #e2e2e2;border-radius:3px;box-sizing:border-box"></div><div style="position:absolute;left:556.3px;top:460.9px;width:1.0px;height:20.80000000000001px;background:#e2e2e2"></div><div style="position:absolute;left:515.3px;top:464.3px;line-height:14px;font-size:11px;font-weight:400;color:#2b2b2b;letter-spacing:-0.28px;white-space:pre;transform:scaleX(0.9298);transform-origin:0 50%;">± 1 day</div><svg style="position:absolute;left:563px;top:464.5px;" width="10" height="13" viewBox="0 0 10 13"><path d="M2.3,5.5 v-2 a2.7,2.7 0 0 1 5.4,0 v2" fill="none" stroke="#555" stroke-width="1.2"/><rect x="1" y="5.5" width="8" height="6.5" rx="0.8" fill="none" stroke="#555" stroke-width="1.2"/><circle cx="5" cy="8.7" r="0.9" fill="#555"/></svg><div style="position:absolute;left:583.2px;top:459.9px;width:23.199999999999932px;height:22.80000000000001px;background:#fff;border:1px solid #e2e2e2;border-radius:3px;box-sizing:border-box"></div><svg style="position:absolute;left:588.5px;top:465px;" width="13" height="12" viewBox="0 0 13 12"><path d="M2.2,6 a4.4,4.4 0 1 1 1.3,3.1" fill="none" stroke="#555" stroke-width="1.3"/><polygon points="0,5 4.4,5 2.2,7.6" fill="#555"/><path d="M6.6,3.6 v2.6 l1.8,1.2" fill="none" stroke="#555" stroke-width="1.1"/></svg><div style="position:absolute;left:686.6px;top:459.9px;width:91.89999999999998px;height:22.80000000000001px;background:#fff;border:1px solid #e2e2e2;border-radius:3px;box-sizing:border-box"></div><div style="position:absolute;left:696.4px;top:464.3px;line-height:14px;font-size:11px;font-weight:400;color:#2b2b2b;letter-spacing:0.00px;white-space:pre;">1/12/2023</div><svg style="position:absolute;left:761.8px;top:465.3px;" width="12" height="12" viewBox="0 0 12 12"><rect x="0.6" y="1.6" width="10.2" height="9.8" rx="1" fill="none" stroke="#999" stroke-width="1"/><path d="M0.6,4.2 h10.2" stroke="#999" stroke-width="1"/><path d="M3,0.3 v2.4 M8.4,0.3 v2.4" stroke="#999" stroke-width="1"/><rect x="6.6" y="7" width="2.4" height="2.4" fill="#999"/></svg><div style="position:absolute;left:782.4px;top:459.9px;width:102.80000000000007px;height:22.80000000000001px;background:#fff;border:1px solid #e2e2e2;border-radius:3px;box-sizing:border-box"></div><div style="position:absolute;left:791.4px;top:464.3px;line-height:14px;font-size:11px;font-weight:400;color:#2b2b2b;letter-spacing:-0.15px;white-space:pre;transform:scaleX(0.9652);transform-origin:0 50%;">03:52:54 PM</div><svg style="position:absolute;left:867.5px;top:465.5px;" width="12" height="12" viewBox="0 0 12 12"><circle cx="5.75" cy="5.75" r="5.1" fill="none" stroke="#999" stroke-width="1"/><path d="M5.75,2.8 v3.2 h2.4" fill="none" stroke="#999" stroke-width="1"/></svg><div style="position:absolute;left:888.7px;top:459.9px;width:22.699999999999932px;height:22.80000000000001px;background:#fff;border:1px solid #e2e2e2;border-radius:3px;box-sizing:border-box"></div><svg style="position:absolute;left:897.5px;top:468px;" width="6" height="7" viewBox="0 0 6 7"><polygon points="1,0.5 1,6 4.7,3.25" fill="#555"/></svg><svg style="position:absolute;left:0px;top:0px;pointer-events:none" width="980" height="626" viewBox="0 0 980 626"><rect x="119.8" y="489.3" width="791.7" height="22.0" fill="#fbfbfb"/><polyline points="119.8,489.7 121.4,509.8 122.3,490.8 123.5,510.0 125.0,489.6 125.6,509.6 126.8,491.6 127.4,510.4 128.8,490.0 130.6,509.5 131.2,489.4 132.5,509.4 133.5,489.9 134.6,511.2 135.5,490.6 136.7,510.8 137.6,490.0 138.7,510.7 139.3,491.8 140.6,510.0 141.4,492.3 143.1,511.1 144.1,491.5 145.5,509.4 146.6,491.8 148.0,510.7 149.3,491.9 150.9,510.3 152.2,489.4 153.1,509.7 154.2,489.8 155.5,509.9 156.9,490.4 158.0,510.3 159.6,490.9 160.6,510.3 161.3,489.4 162.7,509.3 164.0,490.5 164.8,510.3 166.6,491.6 167.9,509.6 168.7,490.8 170.5,510.1 171.6,490.1 172.9,509.4 173.5,491.7 175.1,509.5 176.6,491.7 177.8,510.2 178.9,489.5 180.5,510.2 181.4,490.8 182.6,510.6 183.6,490.9 184.9,510.1 186.1,489.4 187.0,510.9 188.3,491.9 189.8,509.7 191.4,490.1 193.0,510.0 193.7,489.4 194.3,509.8 195.2,489.6 196.6,510.6 197.3,489.8 198.5,511.0 199.4,491.4 200.6,510.7 201.7,489.4 202.8,510.5 203.6,489.6 205.3,510.3 206.1,491.1 207.7,511.3 208.3,489.7 209.8,511.0 211.3,491.3 212.5,510.9 214.3,491.7 215.5,510.9 216.9,490.5 218.2,510.7 219.5,489.5 220.5,509.4 222.1,490.2 223.8,510.7 225.5,491.5 226.6,510.8 227.2,491.9 227.8,509.7 229.6,491.0 230.4,509.6 232.2,491.4 233.4,510.5 234.4,489.9 235.8,510.4 236.6,489.6 238.0,510.7 239.2,490.3 240.9,509.5 241.5,489.9 242.5,509.3 244.0,490.3 244.9,510.0 246.5,492.1 247.5,509.5 248.9,490.8 250.7,510.8 252.2,489.6 253.0,509.5 253.9,491.6 255.2,509.6 256.2,490.3 257.2,509.6 258.5,492.2 260.2,511.0 261.4,489.6 262.1,511.2 263.7,491.7 265.3,510.6 266.6,491.6 267.7,510.2 268.6,489.5 269.5,509.5 270.8,492.1 271.9,510.7 273.5,491.8 274.1,510.0 274.8,489.6 276.4,511.2 277.3,492.3 278.4,511.1 279.2,490.0 280.7,511.1 282.4,490.4 284.2,509.5 285.1,490.1 286.3,511.1 287.7,489.4 288.3,509.3 289.3,491.1 290.4,510.7 291.1,492.0 292.8,509.4 293.6,489.9 294.9,509.3 296.2,491.4 297.6,510.8 298.8,490.2 299.7,511.1 300.6,492.3 301.8,510.0 303.1,492.1 304.2,510.7 305.2,490.3 306.8,509.5 307.8,490.3 309.0,510.1 310.4,490.0 311.0,510.8 311.7,491.0 312.4,511.1 313.7,490.2 315.3,510.3 316.9,489.8 318.1,509.7 318.8,492.1 319.6,509.7 321.4,491.8 322.4,511.1 323.6,492.1 324.5,509.5 325.3,492.0 325.9,510.7 327.6,491.7 329.3,509.6 330.8,491.4 331.6,510.4 332.4,491.4 333.8,510.8 334.5,492.2 336.1,510.2 337.3,491.9 338.5,510.5 339.5,490.1 340.1,510.0 341.2,491.0 341.9,510.6 342.6,489.7 343.5,509.6 344.6,490.5 346.0,510.8 346.6,490.9 347.8,510.0 348.9,491.4 350.4,510.8 351.6,490.7 352.4,510.5 353.7,492.0 355.4,510.7 356.8,489.4 357.5,510.3 359.1,489.8 360.6,509.5 361.6,491.4 363.2,510.6 364.7,491.5 366.0,509.6 367.7,492.2 369.0,510.9 369.9,490.0 371.1,509.8 371.8,491.3 373.3,510.6 374.5,489.8 376.0,511.2 377.7,491.7 379.1,510.8 380.8,492.2 381.6,509.7 383.2,491.3 384.6,510.4 386.3,492.2 387.4,509.7 388.5,489.8 389.5,511.0 391.2,492.2 391.9,510.1 393.0,489.7 394.0,510.8 395.5,489.3 396.3,510.4 396.9,491.2 398.2,509.6 399.1,490.2 400.3,510.8 401.6,490.1 403.1,509.7 404.6,492.2 405.9,510.3 407.5,491.6 408.8,510.5 409.7,489.6 411.3,511.1 412.8,490.9 414.6,509.8 416.3,489.7 417.5,510.2 418.5,490.8 419.5,510.2 420.1,490.6 421.3,510.7 422.4,491.6 423.8,510.3 425.1,490.4 426.0,511.3 426.9,491.1 428.6,509.6 429.8,492.3 431.0,509.6 432.0,491.5 433.8,510.7 434.6,491.2 435.9,510.6 436.5,490.5 437.6,510.5 439.2,491.1 440.7,509.5 442.2,490.8 443.7,510.0 445.1,491.2 446.2,510.0 447.5,492.1 449.1,509.6 450.6,491.7 451.9,510.6 452.8,491.4 454.5,510.2 455.3,491.8 456.4,510.4 457.1,490.8 458.6,510.5 459.6,491.3 460.2,510.3 462.0,491.4 463.1,509.9 464.4,489.9 465.2,509.5 466.1,489.5 467.7,510.3 468.8,490.8 470.3,511.0 471.7,491.4 473.2,510.8 474.6,490.0 475.8,511.0 477.4,491.9 478.4,510.9 480.1,491.4 481.8,511.2 483.4,491.2 484.4,510.4 485.9,491.7 486.8,510.0 487.6,492.2 488.7,509.5 490.2,491.1 491.1,510.2 491.8,489.7 493.3,510.6 494.8,490.0 496.3,509.9 497.2,489.6 498.3,510.3 499.0,489.9 499.7,510.1 501.4,489.9 502.0,509.9 503.6,492.2 504.9,510.6 506.5,489.7 507.9,511.1 509.0,490.8 510.1,511.0 511.0,491.8 512.1,510.1 513.0,491.4 514.0,510.1 515.7,492.3 516.3,509.7 517.9,490.3 519.0,510.1 520.7,490.5 522.4,509.8 523.1,492.0 523.8,511.0 525.2,489.5 526.2,511.0 527.4,491.8 529.1,511.2 529.7,491.8 530.4,510.8 531.1,489.6 531.8,510.0 533.2,491.4 534.9,510.0 535.9,491.2 537.7,510.0 538.6,489.5 540.3,510.1 541.3,491.1 542.6,510.3 543.3,490.4 544.4,510.9 546.0,490.6 547.4,509.9 548.9,491.5 550.4,510.8 552.2,489.8 553.9,509.6 555.5,489.5 556.2,509.7 557.4,490.4 559.2,511.2 560.4,490.6 561.2,510.5 562.6,491.9 563.2,510.3 563.9,491.7 564.6,511.2 565.7,491.5 566.7,511.0 568.2,491.7 569.9,510.7 571.0,490.0 572.2,510.6 573.2,491.7 575.0,510.1 575.7,491.3 576.9,509.3 578.3,491.8 579.8,510.2 581.4,491.8 582.4,511.0 583.4,490.9 584.2,510.6 585.4,489.4 587.0,510.0 588.0,490.2 589.0,510.6 590.5,490.8 591.7,511.0 593.4,490.3 594.4,511.2 596.2,490.7 597.9,509.4 599.7,491.7 601.4,509.5 602.9,489.7 604.2,510.1 606.0,491.7 607.4,509.8 608.4,492.1 609.8,510.5 611.0,492.2 612.2,511.0 613.0,491.4 614.3,509.5 615.1,490.5 616.6,511.2 617.3,490.9 618.2,511.1 619.1,491.2 620.3,511.1 621.0,491.9 622.4,511.0 624.0,489.4 625.1,509.6 626.5,490.2 628.2,510.1 629.8,492.0 630.9,509.9 632.2,492.1 633.8,509.8 635.3,492.3 636.2,510.9 637.7,491.6 639.0,510.3 640.0,491.9 641.6,510.1 642.2,491.9 643.4,510.9 644.4,491.4 645.0,511.1 645.9,492.0 647.4,509.4 648.7,491.0 649.9,510.2 651.2,491.8 652.9,510.5 654.3,490.2 655.2,510.3 656.6,490.9 658.3,511.0 659.7,492.3 661.2,510.2 662.2,490.5 663.9,509.5 665.3,492.0 667.0,509.6 668.1,490.7 669.7,510.6 671.2,490.7 672.2,510.4 672.9,490.4 674.0,511.3 674.8,490.1 676.4,510.1 677.4,492.3 678.3,510.3 679.8,491.4 680.9,509.7 682.1,491.4 683.3,509.4 684.7,489.6 685.5,509.4 686.4,489.4 687.3,510.3 689.0,490.5 690.5,509.6 691.2,491.1 693.0,510.2 694.2,490.3 696.0,509.4 696.7,491.0 697.8,510.0 698.5,490.1 699.5,510.3 701.0,491.9 702.6,509.9 703.3,490.5 704.7,510.7 705.9,492.0 706.6,509.6 707.3,490.5 709.0,510.9 710.3,490.5 711.9,509.3 712.9,490.8 714.5,510.2 715.4,491.6 716.4,510.3 717.0,492.3 718.4,509.4 720.2,490.1 721.4,510.4 722.9,491.8 723.8,510.8 725.2,490.5 726.0,510.9 727.3,491.1 729.0,510.2 730.4,489.7 731.5,510.7 732.9,490.1 733.7,510.6 734.9,490.3 736.2,510.9 737.9,491.4 739.1,511.2 740.1,491.4 741.5,509.7 743.2,490.2 744.4,510.6 745.1,489.7 746.0,511.1 747.3,491.4 748.5,509.9 749.4,489.9 750.7,509.5 751.8,489.3 752.4,510.7 753.8,489.6 754.6,509.9 756.4,490.3 757.7,510.3 758.4,490.3 759.1,510.8 760.7,491.3 761.3,511.1 762.8,489.6 763.8,510.8 764.4,489.4 765.2,510.5 766.9,491.2 767.8,509.9 768.7,490.8 769.7,509.4 770.7,491.7 772.1,509.6 773.4,491.9 774.5,509.9 775.9,490.9 777.1,510.2 778.2,492.0 779.6,510.2 780.2,490.8 781.0,510.9 782.2,490.9 783.1,510.8 784.3,490.7 785.4,511.1 786.4,491.3 787.7,510.2 789.3,491.5 790.7,511.2 791.7,491.3 792.5,509.5 793.2,491.9 794.1,509.6 795.7,490.3 797.4,511.0 799.0,490.4 800.1,511.1 801.5,490.1 802.9,509.7 804.2,489.3 805.9,509.5 807.3,490.4 808.6,509.5 809.7,491.6 811.0,510.5 812.8,490.5 814.1,511.2 815.3,489.4 816.7,511.3 817.4,489.6 818.1,510.3 819.1,490.1 820.9,509.5 822.3,491.7 823.9,510.8 825.5,490.0 826.7,510.6 827.5,491.6 829.2,510.7 830.9,490.3 832.3,509.3 833.8,489.5 834.9,510.5 835.9,491.7 837.0,509.9 838.4,490.9 839.0,510.0 840.7,489.8 842.1,510.3 843.1,491.4 844.9,511.3 846.5,490.4 848.1,511.0 849.6,489.6 850.6,509.4 852.0,491.7 853.1,510.4 854.3,491.6 855.8,510.9 856.9,490.9 858.2,509.4 859.8,489.7 860.9,511.1 861.5,489.5 862.3,509.8 863.7,491.7 864.7,511.0 866.4,491.8 868.2,511.3 869.2,491.2 870.7,509.5 872.0,490.5 872.6,509.7 874.4,492.0 875.8,510.6 876.6,491.6 878.4,509.4 879.2,491.1 880.4,510.4 881.9,492.1 883.4,509.9 884.8,491.3 886.1,510.8 887.6,489.7 889.0,510.5 890.3,491.2 891.4,509.3 892.3,489.3 894.1,510.7 895.0,490.5 896.3,509.3 897.8,490.3 899.0,510.4 900.2,490.6 901.0,510.5 902.1,489.9 903.7,510.6 904.4,491.0 906.1,509.7 907.4,491.5 908.4,511.0 909.3,490.3 910.2,510.4 911.0,489.7" fill="none" stroke="#c4b0e0" stroke-opacity="0.9" stroke-width="0.8"/><polyline points="119.8,493.0 122.0,508.9 124.6,493.7 127.2,511.2 128.9,495.0 131.0,508.6 132.1,492.1 133.4,509.7 135.4,489.4 136.7,510.5 139.2,493.9 140.4,508.9 141.6,493.0 142.7,511.3 145.2,490.6 146.4,508.4 148.9,491.0 151.5,509.7 153.7,490.5 156.3,509.2 158.9,494.7 160.3,510.2 161.5,490.2 162.5,510.4 164.5,489.3 166.7,510.3 168.1,494.2 169.9,510.4 171.6,493.5 172.6,508.4 173.6,493.8 176.0,511.2 178.3,491.5 180.3,511.3 181.3,490.4 183.9,510.7 186.1,494.9 188.7,510.3 190.3,492.4 192.6,511.0 194.8,494.1 197.3,511.2 199.9,489.8 201.4,509.5 203.9,491.3 206.5,509.7 208.0,491.2 209.2,511.1 210.3,493.4 213.0,510.8 214.0,495.2 215.9,510.1 217.2,492.9 219.6,509.9 221.3,489.6 223.8,511.2 225.6,494.3 226.7,509.1 229.3,493.1 231.7,511.0 233.3,490.2 235.8,510.4 237.5,495.3 239.9,508.4 241.6,492.2 243.8,509.9 245.3,491.7 246.4,510.2 249.1,495.1 251.1,509.8 252.6,489.8 254.0,509.0 256.5,491.5 258.8,509.0 261.0,493.3 263.2,510.2 265.4,491.0 267.2,509.0 269.3,491.1 271.9,509.4 273.9,489.4 275.7,510.5 277.9,492.1 280.2,509.4 282.6,491.4 284.6,509.1 287.0,491.4 289.4,508.7 291.6,495.2 294.2,509.7 296.0,490.3 298.4,508.5 300.2,493.4 302.4,509.1 303.6,494.0 305.6,509.3 307.2,493.0 309.5,509.4 311.7,489.5 312.9,510.0 315.0,490.6 317.1,509.4 318.1,492.1 319.4,511.1 320.5,491.2 321.7,510.7 322.7,492.1 324.3,509.5 326.3,490.7 328.8,511.3 330.4,491.0 332.0,511.0 334.4,491.5 335.4,509.5 336.5,492.6 338.0,509.6 340.6,494.2 342.3,508.9 344.3,491.5 345.5,509.5 347.4,495.0 350.0,509.5 351.6,494.7 352.5,511.0 354.4,493.0 355.5,509.4 358.0,491.6 359.7,510.6 361.2,495.1 362.7,508.4 365.3,492.9 366.6,508.4 368.4,491.8 369.9,508.3 371.7,491.0 373.5,510.9 375.5,492.0 376.9,509.0 379.3,489.4 381.2,510.5 383.7,494.0 385.1,510.5 386.3,495.2 387.7,509.5 389.4,493.2 391.4,509.1 392.5,493.9 394.0,509.7 395.5,491.1 397.3,509.9 398.9,493.8 400.9,511.2 402.2,492.0 404.8,508.6 406.6,489.4 408.9,510.0 410.9,493.5 412.9,509.9 415.5,491.6 417.1,508.7 418.3,491.1 420.7,511.1 423.1,493.5 424.8,510.4 427.1,494.8 428.3,509.9 430.1,492.3 431.6,510.8 433.6,494.2 434.6,510.6 437.0,494.1 439.1,511.2 441.3,495.2 444.0,509.2 445.0,494.4 446.3,509.4 448.9,493.6 450.0,510.4 452.6,490.2 454.6,510.1 455.8,493.0 456.7,511.0 458.3,489.7 459.3,509.6 461.6,494.6 462.7,510.0 464.2,492.9 466.0,508.5 467.5,489.6 469.7,510.8 471.7,492.3 474.3,509.6 476.3,490.9 478.2,510.5 480.4,492.4 481.6,510.6 483.1,493.7 484.4,509.2 486.4,489.8 488.5,511.0 489.7,492.9 491.0,508.7 492.8,491.2 495.1,511.2 497.3,489.6 498.5,508.4 500.6,490.6 501.7,508.4 503.8,494.2 504.9,509.4 506.5,490.7 508.0,509.5 509.5,491.6 510.7,508.8 512.7,494.1 514.4,508.7 516.2,492.9 518.2,509.1 519.8,489.9 520.7,510.7 521.7,494.6 523.5,509.0 524.4,492.1 526.9,509.4 528.5,492.1 529.6,510.8 530.8,491.5 532.4,508.7 533.6,490.8 535.0,510.8 536.4,490.7 538.2,511.2 540.7,491.5 543.3,509.2 545.4,492.1 548.0,510.9 550.1,491.0 552.2,509.1 553.4,490.5 554.4,510.6 555.4,491.7 558.1,510.2 559.5,492.1 561.0,509.1 563.1,490.3 564.5,509.3 567.1,493.2 568.7,508.4 569.7,489.7 572.0,510.1 572.9,492.6 575.6,509.7 577.2,489.9 578.2,508.6 580.0,494.9 581.0,510.6 582.0,491.7 583.0,510.5 584.6,491.1 585.6,511.2 588.2,490.4 590.1,510.1 591.9,489.8 593.4,511.0 595.2,494.8 597.2,508.7 598.5,489.4 600.4,509.8 602.3,491.6 604.3,509.1 606.9,491.1 608.6,508.8 609.9,490.0 611.4,511.0 613.6,494.2 615.1,510.9 616.2,490.8 617.2,510.0 619.1,490.8 620.2,509.2 621.1,490.5 622.6,510.2 623.6,491.8 625.1,509.0 627.0,494.7 629.1,509.0 631.0,492.0 633.4,509.3 636.0,493.7 638.2,510.5 640.5,491.6 641.7,511.1 642.9,490.9 645.0,510.4 646.0,493.9 647.9,511.2 648.9,490.1 650.4,508.7 653.0,493.0 654.4,510.0 655.9,491.3 656.8,509.5 659.2,493.7 660.3,509.7 661.5,493.6 663.2,508.5 665.5,490.0 667.0,508.6 668.7,491.9 670.4,509.0 673.0,492.5 675.7,509.5 676.7,494.2 678.4,511.1 681.1,489.5 683.0,509.9 685.5,491.7 686.8,510.5 688.0,492.7 689.6,509.0 690.9,491.4 692.3,508.4 694.7,494.4 696.7,510.1 697.8,494.3 699.6,511.2 700.8,489.9 703.0,508.6 704.3,494.1 705.8,509.3 708.2,493.0 710.6,510.2 711.5,492.4 713.4,510.7 715.0,491.2 716.0,510.4 717.6,492.2 719.7,510.1 722.4,494.2 725.0,509.2 727.1,492.5 729.4,510.2 731.4,493.4 733.2,510.4 734.3,489.8 735.8,509.6 738.1,493.6 739.5,508.5 740.9,493.6 741.9,509.0 744.0,495.0 746.6,509.2 749.0,493.7 751.0,510.7 752.8,494.7 754.1,508.4 756.0,491.7 756.9,510.1 758.1,493.2 760.7,508.6 762.7,491.6 763.8,509.2 765.7,493.6 767.2,508.6 768.5,491.1 769.9,509.4 772.4,490.3 774.4,509.0 775.7,489.7 777.7,508.8 780.1,493.7 781.8,510.0 783.7,494.7 785.1,510.5 787.1,495.1 788.3,511.2 789.4,492.7 791.4,510.7 792.7,492.9 794.7,509.2 796.9,489.7 798.7,508.8 801.3,491.2 803.8,509.4 806.3,490.7 808.5,508.8 810.2,489.9 811.5,510.8 812.6,490.2 814.6,511.0 816.8,493.7 819.2,508.9 821.4,494.8 824.0,509.4 826.6,489.9 827.7,511.1 829.0,491.5 830.7,509.3 833.0,489.8 834.6,509.7 836.2,490.0 838.1,510.2 840.3,492.3 842.9,508.5 843.9,493.9 846.1,510.4 847.2,492.2 848.8,509.1 851.3,491.6 852.8,509.8 854.9,494.0 856.8,510.4 858.4,494.4 860.2,511.1 861.8,490.7 863.9,511.1 865.3,489.9 867.1,508.3 869.0,491.6 871.5,511.0 873.1,494.2 874.0,509.0 875.5,489.4 876.9,509.9 878.5,492.4 879.5,510.6 882.1,492.0 883.9,511.0 885.3,495.0 887.4,509.8 888.4,491.7 890.7,510.0 892.7,494.7 894.7,509.4 895.7,489.4 898.0,510.1 900.5,494.3 903.0,510.2 905.7,493.8 908.2,510.9 910.5,491.8" fill="none" stroke="#b6a4dc" stroke-opacity="0.7" stroke-width="0.8"/><polyline points="119.8,497.9 122.4,511.0 123.5,496.8 125.7,508.0 127.1,494.8 129.1,508.4 130.3,493.2 131.9,507.7 134.6,497.8 136.5,509.1 137.9,489.6 138.8,509.0 140.3,492.7 142.8,508.7 144.7,491.4 145.7,509.7 146.8,493.9 149.5,507.9 150.7,497.3 153.1,507.6 155.6,496.2 157.9,509.5 160.6,498.0 161.8,507.5 164.0,493.5 165.8,508.8 168.4,493.8 170.8,509.5 173.3,497.4 175.0,508.5 177.6,495.8 179.3,510.2 180.8,495.6 182.0,506.8 183.4,497.5 184.8,506.5 187.0,493.8 188.9,508.0 190.8,492.1 192.1,508.7 194.7,494.9 195.7,507.2 197.9,497.5 199.2,507.6 200.2,495.2 201.6,510.2 204.0,490.3 205.9,507.0 207.2,491.2 209.7,509.2 211.9,489.6 213.4,510.4 215.5,490.0 218.2,511.2 220.4,489.5 221.7,507.2 222.9,491.0 225.1,509.4 226.0,498.2 227.2,511.1 228.7,494.8 231.0,510.7 232.5,489.6 234.2,507.5 236.4,497.4 238.7,507.0 240.8,493.6 242.2,508.0 243.6,490.2 245.3,506.9 246.5,494.6 248.1,508.7 249.2,497.9 250.6,508.3 252.2,489.5 254.2,510.6 255.2,489.6 256.3,510.8 258.4,493.9 261.1,506.6 263.7,491.4 265.4,510.0 267.4,494.9 269.8,507.8 271.1,493.1 273.0,511.3 273.9,493.0 275.0,507.7 276.4,490.2 277.6,510.1 278.9,494.0 280.6,509.8 282.7,491.2 285.2,506.5 287.4,493.2 289.2,508.4 290.2,493.1 292.1,510.4 293.1,496.5 294.7,508.7 297.3,494.8 298.7,506.4 300.2,489.5 302.4,510.8 303.8,496.9 305.9,511.2 307.7,493.0 309.4,510.3 311.4,490.0 312.8,509.4 315.4,490.0 317.6,510.3 319.6,492.8 321.3,507.5 322.9,490.4 324.0,510.9 326.5,495.1 329.1,507.8 330.0,495.2 332.3,507.7 334.1,492.5 335.9,507.3 337.2,494.0 339.0,506.5 341.3,497.7 343.8,509.8 345.1,493.7 346.4,509.2 348.6,497.6 350.5,507.2 351.6,492.5 354.3,510.6 355.9,489.9 357.0,506.8 359.7,495.1 360.8,509.8 362.1,495.3 364.2,509.1 366.1,490.3 368.0,506.6 370.2,490.2 372.0,507.7 373.4,497.4 375.1,507.8 376.8,498.3 379.1,508.4 380.2,493.3 381.2,508.3 383.7,490.9 385.5,508.9 387.1,495.7 389.7,507.8 391.5,498.0 393.0,507.6 395.0,496.2 397.5,510.2 399.5,492.9 401.6,506.4 403.6,489.4 405.4,507.7 407.9,495.2 410.2,511.2 412.8,495.9 414.8,506.8 417.3,490.2 419.7,507.5 420.9,496.0 422.9,510.3 425.2,490.5 427.2,509.1 428.6,494.4 430.3,510.3 433.0,490.0 433.9,508.9 436.3,495.2 438.6,508.9 440.7,492.3 442.1,508.8 443.0,490.0 445.3,510.4 447.5,496.4 449.1,507.9 451.5,497.1 452.6,510.5 454.2,493.5 455.6,511.2 457.5,498.0 459.1,508.6 460.7,493.3 463.1,509.8 465.2,493.7 467.1,506.7 468.1,496.7 469.6,508.1 471.9,495.2 473.5,507.1 474.6,495.0 476.2,508.6 478.6,496.5 480.6,509.8 481.9,493.4 483.3,509.9 485.9,490.3 488.3,509.4 489.8,492.2 490.9,509.0 492.1,493.3 493.5,506.8 496.0,493.3 498.1,506.7 499.6,490.2 500.9,510.4 503.0,492.7 504.6,507.3 505.9,496.6 507.9,509.3 510.3,492.4 512.8,506.7 514.6,495.5 517.2,507.6 519.5,497.1 522.0,507.5 524.7,491.9 526.7,507.9 528.3,492.9 529.5,506.5 531.0,493.6 533.5,510.4 536.2,490.4 537.1,509.5 538.7,497.6 541.2,507.5 542.8,494.2 544.2,507.1 545.8,491.9 547.8,510.5 549.3,497.6 550.4,510.6 551.6,491.6 553.3,510.0 554.8,491.5 556.1,508.2 557.6,492.7 559.9,511.0 561.1,497.0 562.8,507.4 563.9,494.0 566.3,509.6 568.6,494.8 570.2,506.3 571.8,493.6 573.8,509.7 576.2,494.7 578.2,508.6 580.9,498.2 583.3,509.0 584.9,494.0 585.9,510.8 588.6,490.5 591.2,507.9 593.7,490.0 595.2,507.3 596.1,490.3 597.6,510.4 598.8,495.3 599.9,506.4 601.9,489.7 604.5,510.1 606.2,494.3 607.4,508.8 608.4,491.1 610.9,507.2 612.8,495.4 615.2,510.6 617.0,490.5 618.1,510.8 619.4,489.8 620.7,509.4 622.7,497.0 625.3,507.7 627.1,497.6 628.3,510.8 630.6,494.9 631.9,509.4 633.4,493.2 635.0,509.3 637.4,496.6 639.3,508.9 640.7,496.2 643.4,510.2 645.5,495.6 647.6,511.1 649.5,491.1 650.8,508.4 652.8,494.9 655.0,507.8 656.8,489.7 659.1,507.2 661.5,494.7 662.5,510.3 663.6,495.0 665.4,510.4 668.1,498.1 670.6,509.0 672.0,491.2 674.4,507.8 675.8,497.4 677.7,509.2 679.4,495.8 681.1,508.0 682.2,495.6 683.6,506.7 684.9,492.3 686.7,509.3 688.6,497.6 689.9,507.4 692.0,496.4 693.7,509.0 695.2,493.6 696.6,510.3 698.3,491.0 700.1,508.4 701.5,490.8 703.5,507.0 704.8,494.8 706.9,506.9 709.0,492.1 710.3,507.1 711.8,489.4 714.2,510.3 715.7,492.2 717.1,507.7 718.6,493.3 720.2,507.1 721.2,494.5 722.3,510.5 724.3,492.7 725.3,508.4 727.8,495.1 729.6,507.3 732.2,490.7 733.6,506.5 736.2,491.1 738.4,506.9 740.3,495.6 742.2,510.1 743.5,489.9 745.5,510.6 747.6,492.8 749.3,506.4 750.9,493.6 752.4,510.2 753.7,494.1 756.1,510.8 758.7,495.4 759.7,507.8 761.3,493.9 762.4,508.7 764.3,496.3 766.2,507.8 768.4,491.3 769.4,508.9 770.5,490.6 772.0,508.6 774.0,495.1 776.6,510.8 778.5,490.1 780.6,509.1 781.7,492.1 783.8,508.9 786.4,492.5 787.9,506.7 789.9,490.3 792.3,509.5 794.9,495.0 797.2,506.8 799.0,498.0 800.0,509.6 802.4,489.4 804.5,506.3 806.7,497.1 807.7,508.6 809.7,493.2 811.4,507.3 812.6,489.7 814.5,506.5 816.9,495.4 818.3,506.8 819.3,491.5 821.6,506.8 823.3,497.5 824.4,508.3 825.4,491.4 826.6,511.3 828.3,493.8 829.7,508.0 830.7,494.0 832.5,509.3 835.1,490.4 836.7,509.0 838.3,498.1 840.2,508.7 841.9,493.2 844.5,507.3 846.6,490.8 848.6,510.7 850.1,489.5 852.3,506.4 854.3,494.4 855.7,509.1 857.4,493.1 858.8,510.2 861.0,497.9 863.4,508.2 864.4,492.0 866.8,506.4 868.7,494.4 870.8,510.1 873.0,492.6 875.4,509.0 877.5,494.3 879.4,509.0 882.0,496.1 883.6,508.8 886.1,496.0 888.2,506.5 889.3,494.7 891.4,509.0 894.0,498.0 895.6,508.2 897.9,495.6 899.4,507.3 900.9,490.6 903.0,508.1 904.7,493.8 907.4,507.3 909.0,497.5 910.9,509.3" fill="none" stroke="#f29a9a" stroke-opacity="0.7" stroke-width="0.8"/><polyline points="119.8,492.1 124.6,510.5 129.9,490.1 137.1,509.5 147.5,498.5 153.3,510.2 159.5,491.4 164.3,510.9 175.7,499.2 186.2,509.7 191.7,493.0 200.8,509.8 211.6,499.9 216.3,510.1 225.7,495.4 231.1,510.4 235.8,500.5 246.7,510.2 253.1,500.2 261.7,509.5 272.5,495.4 279.8,510.1 287.2,491.2 293.7,509.7 298.0,489.9 307.0,510.7 315.3,495.0 322.1,509.3 327.6,494.3 333.3,510.0 339.5,493.6 349.4,510.7 357.9,500.2 362.7,511.2 368.5,498.5 377.5,510.8 384.1,491.4 391.8,511.2 401.4,500.1 413.0,509.8 424.7,489.5 431.0,509.4 441.2,494.2 452.7,510.1 463.3,492.8 468.8,510.4 473.9,493.9 485.6,510.6 489.7,489.8 495.0,509.7 501.9,492.8 506.7,509.3 514.1,491.8 518.6,511.2 523.9,497.4 529.1,511.2 537.1,492.3 549.0,511.1 557.3,498.6 564.5,509.3 572.4,492.2 579.6,511.2 587.0,492.3 598.1,509.6 606.1,489.7 612.2,510.8 617.8,492.1 628.8,511.0 633.2,500.4 641.7,509.3 648.9,500.1 658.2,509.7 668.1,495.2 672.9,510.9 683.9,500.1 695.3,510.6 704.5,498.9 713.7,509.7 721.9,497.2 731.4,510.8 742.7,500.8 747.3,509.4 759.0,497.3 763.4,509.5 768.4,500.9 777.7,511.2 783.1,496.9 791.6,509.8 803.1,491.9 807.1,509.5 811.2,499.8 816.1,509.7 826.4,499.8 834.8,509.5 840.4,497.4 847.0,509.5 857.2,495.0 865.4,511.2 869.7,496.4 877.6,509.6 886.5,491.0 893.4,509.8 901.6,489.4" fill="none" stroke="#e3a86a" stroke-opacity="0.4" stroke-width="0.7"/><path d="M122.8,511.3 V490.1 H130.1 V511.3 M142.8,511.3 V490.1 H150.1 V511.3 M162.8,511.3 V490.1 H170.1 V511.3 M182.8,511.3 V490.1 H190.1 V511.3 M202.8,511.3 V490.1 H210.1 V511.3 M222.8,511.3 V490.1 H230.1 V511.3 M242.8,511.3 V490.1 H250.1 V511.3 M262.8,511.3 V490.1 H270.1 V511.3 M282.8,511.3 V490.1 H290.1 V511.3 M302.8,511.3 V490.1 H310.1 V511.3 M322.8,511.3 V490.1 H330.1 V511.3 M342.8,511.3 V490.1 H350.1 V511.3 M362.8,511.3 V490.1 H370.1 V511.3 M382.8,511.3 V490.1 H390.1 V511.3 M402.8,511.3 V490.1 H410.1 V511.3 M422.8,511.3 V490.1 H430.1 V511.3 M442.8,511.3 V490.1 H450.1 V511.3 M462.8,511.3 V490.1 H470.1 V511.3 M482.8,511.3 V490.1 H490.1 V511.3 M502.8,511.3 V490.1 H510.1 V511.3 M522.8,511.3 V490.1 H530.1 V511.3 M542.8,511.3 V490.1 H550.1 V511.3 M562.8,511.3 V490.1 H570.1 V511.3 M582.8,511.3 V490.1 H590.1 V511.3 M602.8,511.3 V490.1 H610.1 V511.3 M622.8,511.3 V490.1 H630.1 V511.3 M642.8,511.3 V490.1 H650.1 V511.3 M662.8,511.3 V490.1 H670.1 V511.3 M682.8,511.3 V490.1 H690.1 V511.3 M702.8,511.3 V490.1 H710.1 V511.3 M722.8,511.3 V490.1 H730.1 V511.3 M742.8,511.3 V490.1 H750.1 V511.3 M762.8,511.3 V490.1 H770.1 V511.3 M782.8,511.3 V490.1 H790.1 V511.3 M802.8,511.3 V490.1 H810.1 V511.3 M822.8,511.3 V490.1 H830.1 V511.3 M842.8,511.3 V490.1 H850.1 V511.3 M862.8,511.3 V490.1 H870.1 V511.3 M882.8,511.3 V490.1 H890.1 V511.3 M902.8,511.3 V490.1 H910.1 V511.3" fill="none" stroke="#86bfd8" stroke-opacity="0.9" stroke-width="1.0"/><rect x="119.8" y="511.3" width="791.7" height="10" fill="#fff"/><rect x="119.8" y="485.3" width="791.7" height="4" fill="#fff"/></svg><div style="position:absolute;left:304.9px;top:489.1px;width:30.700000000000045px;height:30.5px;border:1px solid #3a4248;border-radius:3px;box-sizing:border-box"></div><div style="position:absolute;left:305.4px;top:494.5px;width:2.6000000000000227px;height:13.100000000000023px;background:#1c1c1c;border-radius:1px"></div><div style="position:absolute;left:332.6px;top:494.5px;width:2.599999999999966px;height:13.100000000000023px;background:#1c1c1c;border-radius:1px"></div><div style="position:absolute;left:305.9px;top:511.7px;width:28.700000000000045px;height:6.900000000000034px;background:#fff"></div><div style="position:absolute;left:305.9px;top:511.0px;width:28.700000000000045px;height:0.8999999999999773px;background:#555"></div><div style="position:absolute;left:318.6px;top:514px;width:0.7999999999999545px;height:3.6000000000000227px;background:#555"></div><div style="position:absolute;left:320.6px;top:514px;width:0.7999999999999545px;height:3.6000000000000227px;background:#555"></div><div style="position:absolute;left:119.8px;top:521.2px;width:791.7px;height:1.1999999999999318px;background:#6a6a6a"></div><div style="position:absolute;left:119.8px;top:521.2px;width:1.2000000000000028px;height:3.7999999999999545px;background:#6a6a6a"></div><div style="position:absolute;left:910.3px;top:521.2px;width:1.2000000000000455px;height:3.7999999999999545px;background:#6a6a6a"></div><div style="position:absolute;left:241.9px;top:521.2px;width:1.0px;height:3.2999999999999545px;background:#6a6a6a"></div><div style="position:absolute;left:234.1px;top:522.9px;line-height:14px;font-size:8.2px;font-weight:400;color:#333;letter-spacing:-0.36px;white-space:pre;transform:scaleX(0.8934);transform-origin:0 50%;">Jan 8</div><div style="position:absolute;left:381.8px;top:521.2px;width:1.0px;height:3.2999999999999545px;background:#6a6a6a"></div><div style="position:absolute;left:372.0px;top:522.9px;line-height:14px;font-size:8.2px;font-weight:400;color:#333;letter-spacing:-0.34px;white-space:pre;transform:scaleX(0.8991);transform-origin:0 50%;">Jan 15</div><div style="position:absolute;left:521.7px;top:521.2px;width:1.0px;height:3.2999999999999545px;background:#6a6a6a"></div><div style="position:absolute;left:511.9px;top:522.9px;line-height:14px;font-size:8.2px;font-weight:400;color:#333;letter-spacing:-0.34px;white-space:pre;transform:scaleX(0.8991);transform-origin:0 50%;">Jan 22</div><div style="position:absolute;left:661.6px;top:521.2px;width:1.0px;height:3.2999999999999545px;background:#6a6a6a"></div><div style="position:absolute;left:651.8px;top:522.9px;line-height:14px;font-size:8.2px;font-weight:400;color:#333;letter-spacing:-0.34px;white-space:pre;transform:scaleX(0.8991);transform-origin:0 50%;">Jan 29</div><div style="position:absolute;left:801.5px;top:521.2px;width:1.0px;height:3.2999999999999545px;background:#6a6a6a"></div><div style="position:absolute;left:793.5px;top:522.9px;line-height:14px;font-size:8.2px;font-weight:400;color:#333;letter-spacing:-0.42px;white-space:pre;transform:scaleX(0.8825);transform-origin:0 50%;">Feb 5</div><div style="position:absolute;left:120.4px;top:539.3px;width:178.70000000000002px;height:16.90000000000009px;background:#fff;border:1px solid #e2e2e2;border-radius:3px;box-sizing:border-box"></div><div style="position:absolute;left:144.7px;top:540.3px;width:1.0px;height:14.900000000000091px;background:#e6e6e6"></div><div style="position:absolute;left:171.2px;top:540.3px;width:1.0px;height:14.900000000000091px;background:#e6e6e6"></div><div style="position:absolute;left:197.4px;top:540.3px;width:1.0px;height:14.900000000000091px;background:#e6e6e6"></div><div style="position:absolute;left:222.2px;top:540.3px;width:1.0px;height:14.900000000000091px;background:#e6e6e6"></div><div style="position:absolute;left:248.3px;top:540.3px;width:1.0px;height:14.900000000000091px;background:#e6e6e6"></div><div style="position:absolute;left:272.4px;top:540.3px;width:1.0px;height:14.900000000000091px;background:#e6e6e6"></div><div style="position:absolute;left:127.0px;top:541.1px;line-height:14px;font-size:9px;font-weight:400;color:#333;letter-spacing:-0.09px;white-space:pre;transform:scaleX(0.9887);transform-origin:0 50%;">1D</div><div style="position:absolute;left:151.4px;top:541.1px;line-height:14px;font-size:9px;font-weight:400;color:#333;letter-spacing:0.04px;white-space:pre;transform:scaleX(1.0044);transform-origin:0 50%;">1W</div><div style="position:absolute;left:178.0px;top:541.1px;line-height:14px;font-size:9px;font-weight:400;color:#333;letter-spacing:-0.13px;white-space:pre;transform:scaleX(0.9848);transform-origin:0 50%;">1M</div><div style="position:absolute;left:203.8px;top:541.1px;line-height:14px;font-size:9px;font-weight:400;color:#333;letter-spacing:-0.05px;white-space:pre;transform:scaleX(0.9944);transform-origin:0 50%;">3M</div><div style="position:absolute;left:229.0px;top:541.1px;line-height:14px;font-size:9px;font-weight:400;color:#333;letter-spacing:0.31px;white-space:pre;transform:scaleX(1.0371);transform-origin:0 50%;">6M</div><div style="position:absolute;left:255.0px;top:541.1px;line-height:14px;font-size:9px;font-weight:400;color:#333;letter-spacing:-0.09px;white-space:pre;transform:scaleX(0.9882);transform-origin:0 50%;">1Y</div><div style="position:absolute;left:278.4px;top:541.1px;line-height:14px;font-size:9px;font-weight:400;color:#333;letter-spacing:-0.31px;white-space:pre;transform:scaleX(0.9421);transform-origin:0 50%;">ALL</div><div style="position:absolute;left:312.5px;top:539.3px;width:75.0px;height:16.90000000000009px;background:#fff;border:1px solid #e2e2e2;border-radius:3px;box-sizing:border-box"></div><div style="position:absolute;left:313.5px;top:540.3px;width:57.30000000000001px;height:14.900000000000091px;background:#eef4fb"></div><div style="position:absolute;left:370.8px;top:540.3px;width:1.0px;height:14.900000000000091px;background:#e2e2e2"></div><div style="position:absolute;left:318.9px;top:541.1px;line-height:14px;font-size:9px;font-weight:400;color:#2a6cc0;letter-spacing:-0.17px;white-space:pre;transform:scaleX(0.9665);transform-origin:0 50%;">CUSTOM</div><svg style="position:absolute;left:360px;top:546px;" width="6" height="4" viewBox="0 0 6 4"><polygon points="0,3.6 5.5,3.6 2.75,0.3" fill="#a8a8a8"/></svg><svg style="position:absolute;left:374.5px;top:543.5px;" width="10" height="9" viewBox="0 0 10 9"><rect x="0.5" y="0.5" width="8.6" height="7.6" rx="1" fill="none" stroke="#777" stroke-width="1"/><path d="M2,2.2 l1.6,1.6 M7.6,2.2 l-1.6,1.6 M2,6.5 l1.6,-1.6 M7.6,6.5 l-1.6,-1.6" stroke="#777" stroke-width="0.9"/></svg>
</body></html>
